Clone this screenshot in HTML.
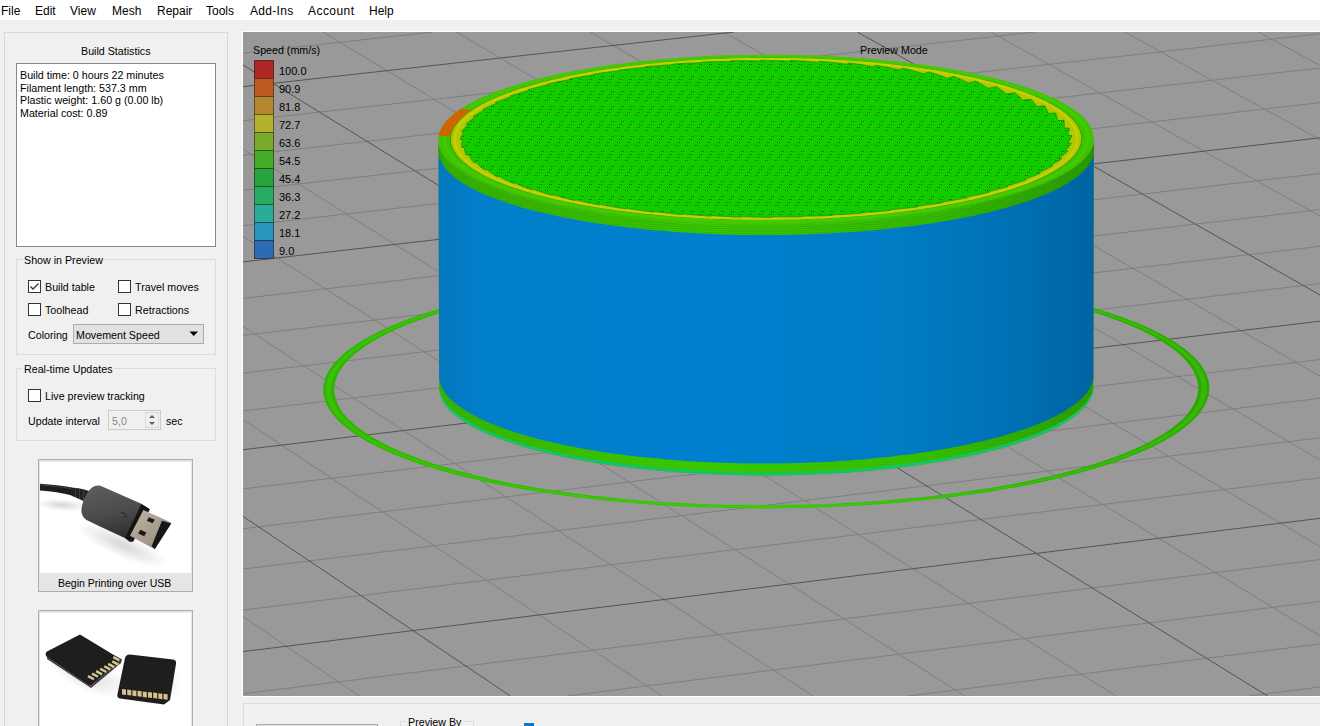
<!DOCTYPE html><html><head><meta charset="utf-8"><style>
*{margin:0;padding:0;box-sizing:border-box}
body{width:1320px;height:726px;overflow:hidden;background:#f0f0f0;position:relative;font-family:"Liberation Sans",sans-serif;color:#000}
.t{position:absolute;white-space:pre;font-size:10.7px;line-height:13px}
.m{position:absolute;top:4px;font-size:12px;line-height:14px;white-space:pre}
.bx{position:absolute}
.cb{position:absolute;width:13px;height:13px;border:1px solid #333;background:#fff}
.sw{position:absolute;left:254px;width:20px;height:19px;border:1px solid rgba(30,25,20,.6);opacity:.92}
.lv{left:279px;font-size:11px}
</style></head><body>
<div class="bx" style="left:0;top:0;width:1320px;height:20px;background:#fff"></div>
<div class="m" style="left:1px">File</div><div class="m" style="left:35px">Edit</div><div class="m" style="left:70px">View</div>
<div class="m" style="left:112px">Mesh</div><div class="m" style="left:157px">Repair</div><div class="m" style="left:206px">Tools</div>
<div class="m" style="left:250px;letter-spacing:.3px">Add-Ins</div><div class="m" style="left:308px;letter-spacing:.45px">Account</div><div class="m" style="left:369px">Help</div>
<div class="bx" style="left:4px;top:32px;width:224px;height:700px;border:1px solid #d9d9d9"></div>
<div class="t" style="left:81px;top:45px">Build Statistics</div>
<div class="bx" style="left:16px;top:63px;width:200px;height:184px;border:1px solid #828790;background:#fff"></div>
<div class="t" style="left:20px;top:69px">Build time: 0 hours 22 minutes</div>
<div class="t" style="left:20px;top:81.7px">Filament length: 537.3 mm</div>
<div class="t" style="left:20px;top:94.4px">Plastic weight: 1.60 g (0.00 lb)</div>
<div class="t" style="left:20px;top:107.1px">Material cost: 0.89</div>
<div class="bx" style="left:16px;top:259px;width:200px;height:96px;border:1px solid #dcdcdc"></div>
<div class="t" style="left:23px;top:254px;background:#f0f0f0;padding:0 1px">Show in Preview</div>
<div class="cb" style="left:28px;top:280px"></div>
<svg class="bx" style="left:28px;top:280px" width="13" height="13"><path d="M2.5 6.5 L5 9 L10.5 3.5" stroke="#333" stroke-width="1.3" fill="none"/></svg>
<div class="t" style="left:45px;top:281px">Build table</div>
<div class="cb" style="left:118px;top:280px"></div><div class="t" style="left:135px;top:281px">Travel moves</div>
<div class="cb" style="left:28px;top:303px"></div><div class="t" style="left:45px;top:304px">Toolhead</div>
<div class="cb" style="left:118px;top:303px"></div><div class="t" style="left:135px;top:304px">Retractions</div>
<div class="t" style="left:28px;top:329px">Coloring</div>
<div class="bx" style="left:73px;top:324px;width:131px;height:20px;background:#e1e1e1;border:1px solid #adadad"></div>
<div class="t" style="left:76px;top:329px">Movement Speed</div>
<svg class="bx" style="left:189px;top:331px" width="10" height="6"><path d="M0.5 0.5 L9 0.5 L4.75 5Z" fill="#000"/></svg>
<div class="bx" style="left:16px;top:368px;width:200px;height:73px;border:1px solid #dcdcdc"></div>
<div class="t" style="left:23px;top:363px;background:#f0f0f0;padding:0 1px">Real-time Updates</div>
<div class="cb" style="left:28px;top:389px"></div><div class="t" style="left:45px;top:390px">Live preview tracking</div>
<div class="t" style="left:28px;top:415px">Update interval</div>
<div class="bx" style="left:108px;top:410px;width:53px;height:20px;border:1px solid #cccccc;background:#f0f0f0"></div>
<div class="t" style="left:112px;top:415px;color:#8a8a8a">5,0</div>
<div class="bx" style="left:145px;top:412px;width:14px;height:16px;border:1px solid #dadada"></div>
<svg class="bx" style="left:147px;top:413px" width="10" height="14"><path d="M2 5 L5 2 L8 5Z M2 9 L5 12 L8 9Z" fill="#606060"/></svg>
<div class="t" style="left:166px;top:415px">sec</div>
<div class="bx" style="left:38px;top:459px;width:155px;height:133px;border:1px solid #adadad;background:#e5e5e5"></div>
<svg class="bx" style="left:40px;top:462px" width="151" height="111" viewBox="40 462 151 111"><defs><radialGradient id="sh" cx=".5" cy=".5" r=".5"><stop offset="0" stop-color="#000" stop-opacity=".16"/><stop offset="1" stop-color="#000" stop-opacity="0"/></radialGradient><linearGradient id="body" x1="0" y1="0" x2=".25" y2="1"><stop offset="0" stop-color="#5e5e5e"/><stop offset=".55" stop-color="#4c4c4c"/><stop offset="1" stop-color="#2e2e2e"/></linearGradient><linearGradient id="metal" x1="0" y1="0" x2="1" y2="1"><stop offset="0" stop-color="#c0b4a4"/><stop offset="1" stop-color="#948878"/></linearGradient></defs><rect x="40" y="462" width="151" height="111" fill="#fff"/><ellipse cx="122" cy="545" rx="50" ry="12" fill="url(#sh)" transform="rotate(24 122 545)"/><ellipse cx="62" cy="505" rx="26" ry="6" fill="url(#sh)" transform="rotate(4 62 505)"/><path d="M40 483.7 C52 484.5 63 485.8 72 487.5 L72 495.5 C62 493 51 491 40 490.5Z" fill="#1e1e1e"/><path d="M40 485 C52 485.6 62 486.8 71 488.6" stroke="#4a4a4a" stroke-width=".8" fill="none"/><path d="M71.5 487.5 C78 488 84 489 89 491 L89 503.5 C83 501 77 498 71.5 495.8Z" fill="#222"/><path d="M75.5 488v9 M79.5 488.5v10.5 M83.5 489.5v11.5" stroke="#3e3e3e" stroke-width="1.1"/><path d="M91 488.6 C94 485.5 97 485 101 486 L141.3 503.8 L149.6 509 L133 541.5 C131 542.5 128.5 542 125.8 538.5 L100 526.5 L86.5 520 C82.5 517.5 81 513 81.5 509 C83 500 86 493 91 488.6Z" fill="url(#body)"/><path d="M141.3 504 L149.8 509.3 L133.2 541.6 L125 538.2Z" fill="#151515"/><path d="M143.4 510 L171.3 522.4 L153.7 548.7 L130 535.8Z" fill="url(#metal)"/><path d="M162 520.8 L171.3 523.4 L154.8 549.2 L151.7 546.1Z" fill="#161616"/><path d="M149 517.2 L154.8 519.8 L152.5 523.3 L146.8 520.7Z M140.3 529.8 L146.4 532.6 L144.2 536.3 L138.2 533.5Z" fill="#1a1a1a"/><path d="M117.5 511.5 l1 .4 M121 512 l6 3 M123.5 516.5 c1.5 1 3 .8 4-.5" stroke="#222" stroke-width="1" fill="none"/></svg>
<div class="t" style="left:58px;top:577px;font-size:10.5px">Begin Printing over USB</div>
<div class="bx" style="left:38px;top:610px;width:155px;height:130px;border:1px solid #adadad;background:#e5e5e5"></div>
<svg class="bx" style="left:40px;top:613px" width="151" height="113" viewBox="40 613 151 113"><rect x="40" y="613" width="151" height="113" fill="#fff"/><defs><radialGradient id="sh2" cx=".5" cy=".5" r=".5"><stop offset="0" stop-color="#000" stop-opacity=".15"/><stop offset="1" stop-color="#000" stop-opacity="0"/></radialGradient></defs><ellipse cx="86" cy="672" rx="45" ry="18" fill="url(#sh2)" transform="rotate(28 86 672)"/><ellipse cx="148" cy="684" rx="34" ry="22" fill="url(#sh2)"/><path d="M80 634.5 L113 654.5 L122 659.5 L91 685.5 L88 685 L47 657 C45 655 45.5 652.5 47 651.5Z" fill="#1e1e1e"/><path d="M47 657 L88 685 L91 685.5 L122 659.5 L121 663 L91 688 L47 659Z" fill="#3a3a3a"/><rect x="87.6" y="676.4" width="6.8" height="2.5" fill="#d6c68e" transform="rotate(28 91.0 677.6)"/><rect x="91.6" y="673.9" width="6.8" height="2.5" fill="#d6c68e" transform="rotate(28 95.0 675.2)"/><rect x="95.7" y="671.5" width="6.8" height="2.5" fill="#d6c68e" transform="rotate(28 99.1 672.7)"/><rect x="99.8" y="669.1" width="6.8" height="2.5" fill="#d6c68e" transform="rotate(28 103.2 670.3)"/><rect x="103.8" y="666.6" width="6.8" height="2.5" fill="#d6c68e" transform="rotate(28 107.2 667.9)"/><rect x="107.8" y="664.2" width="6.8" height="2.5" fill="#d6c68e" transform="rotate(28 111.2 665.5)"/><rect x="111.9" y="661.8" width="6.8" height="2.5" fill="#d6c68e" transform="rotate(28 115.3 663.0)"/><rect x="112.9" y="657.5" width="6.8" height="2.5" fill="#d6c68e" transform="rotate(28 116.3 658.8)"/><path d="M130 654.5 L173 659.5 C175.5 660 176.5 661.5 176 664 L170 700 L164 704.5 L120 698.5 C117.5 698 117 696.5 117.5 694 L125 658 C125.8 655.5 127.5 654.2 130 654.5Z" fill="#1e1e1e"/><rect x="122.0" y="689.0" width="4" height="5.5" fill="#d3c28a" transform="skewY(7)" transform-origin="122.0 689.0"/><rect x="127.2" y="689.6" width="4" height="5.5" fill="#d3c28a" transform="skewY(7)" transform-origin="127.2 689.6"/><rect x="132.4" y="690.2" width="4" height="5.5" fill="#d3c28a" transform="skewY(7)" transform-origin="132.4 690.2"/><rect x="137.6" y="690.8" width="4" height="5.5" fill="#d3c28a" transform="skewY(7)" transform-origin="137.6 690.8"/><rect x="142.8" y="691.4" width="4" height="5.5" fill="#d3c28a" transform="skewY(7)" transform-origin="142.8 691.4"/><rect x="148.0" y="692.0" width="4" height="5.5" fill="#d3c28a" transform="skewY(7)" transform-origin="148.0 692.0"/><rect x="153.2" y="692.6" width="4" height="5.5" fill="#d3c28a" transform="skewY(7)" transform-origin="153.2 692.6"/><rect x="158.4" y="693.2" width="4" height="5.5" fill="#d3c28a" transform="skewY(7)" transform-origin="158.4 693.2"/><rect x="163.6" y="693.8" width="4" height="5.5" fill="#d3c28a" transform="skewY(7)" transform-origin="163.6 693.8"/></svg>
<div class="bx" style="left:242px;top:31px;width:1078px;height:666px;background:#fff"></div><svg width="1077" height="664" viewBox="243 32 1077 664" style="position:absolute;left:243px;top:32px">
<defs><pattern id="dots" x="0" y="0" width="10" height="15" patternUnits="userSpaceOnUse"><rect x="1" y="1" width="1" height="1" fill="#0a5800" opacity=".8"/><rect x="3" y="1" width="1" height="1" fill="#0a5800" opacity=".8"/><rect x="9" y="4" width="1" height="1" fill="#0a5800" opacity=".8"/><rect x="1" y="4" width="1" height="1" fill="#0a5800" opacity=".8"/><rect x="7" y="7" width="1" height="1" fill="#0a5800" opacity=".8"/><rect x="9" y="7" width="1" height="1" fill="#0a5800" opacity=".8"/><rect x="5" y="10" width="1" height="1" fill="#0a5800" opacity=".8"/><rect x="7" y="10" width="1" height="1" fill="#0a5800" opacity=".8"/></pattern>
<pattern id="layers" x="0" y="0" width="4" height="2" patternUnits="userSpaceOnUse"><rect x="0" y="0" width="4" height="1" fill="#000" opacity=".035"/></pattern>
<linearGradient id="blue" gradientUnits="userSpaceOnUse" x1="439" x2="1094" y1="0" y2="0"><stop offset="0" stop-color="#0479c0"/><stop offset=".06" stop-color="#0281cc"/><stop offset=".4" stop-color="#0083d3"/><stop offset=".7" stop-color="#007ec8"/><stop offset=".88" stop-color="#0072b6"/><stop offset="1" stop-color="#0066a4"/></linearGradient>
<linearGradient id="gwall" gradientUnits="userSpaceOnUse" x1="439" x2="1094" y1="0" y2="0"><stop offset="0" stop-color="#38b400"/><stop offset=".4" stop-color="#3acc00"/><stop offset=".75" stop-color="#36c000"/><stop offset="1" stop-color="#2c9e00"/></linearGradient>
<linearGradient id="gskirt" gradientUnits="userSpaceOnUse" x1="324" x2="1209" y1="0" y2="0"><stop offset="0" stop-color="#2fb400"/><stop offset=".5" stop-color="#33c800"/><stop offset="1" stop-color="#2aa800"/></linearGradient>
</defs>
<rect x="243" y="32" width="1077" height="664" fill="#999999"/>
<path d="M243 53L433.1 32 M243 120.7L1034.9 32 M243 155.3L1320 33.8 M243 190.3L1320 68 M243 225.8L1320 102.7 M243 298.4L1320 173.5 M243 335.4L1320 209.6 M243 373L1320 246.3 M243 411L1320 283.5 M243 488.9L1320 359.5 M243 528.7L1320 398.3 M243 569L1320 437.8 M243 616.6L359.1 696 M243 610L1320 477.8 M243 419.8L661.9 696 M243 693.8L1320 559.6 M243 326.5L813.3 696 M566.5 696L1320 601.4 M243 236.3L964.8 696 M907.9 696L1320 643.9 M243 149.2L1116.2 696 M1249.3 696L1320 687 M323 32L1320 636 M456.6 32L1320 546.6 M590.2 32L1320 460.1 M723.8 32L1320 376.3 M991.1 32L1320 216.2 M1124.8 32L1320 139.7 M1258.5 32L1320 65.5" stroke="#7f7f7f" stroke-width="1" fill="none"/>
<path d="M243 86.7L734 32 M243 261.9L1320 137.8 M243 449.7L1320 321.2 M243 516.4L510.5 696 M243 651.6L1320 518.3 M243 65L1267.7 696 M857.5 32L1320 295" stroke="#545454" stroke-width="1" fill="none"/>
<g transform="translate(0,-1)"><path d="M1168.6 339.3 L1171.8 341.2 L1174.8 343.1 L1177.7 345 L1180.5 346.9 L1183.2 348.8 L1185.7 350.8 L1188.1 352.8 L1190.4 354.7 L1192.6 356.7 L1194.6 358.7 L1196.5 360.7 L1198.3 362.8 L1200 364.8 L1201.5 366.8 L1202.9 368.9 L1204.1 370.9 L1205.2 373 L1206.2 375.1 L1207 377.1 L1207.8 379.2 L1208.3 381.3 L1208.8 383.4 L1209.1 385.5 L1209.3 387.6 L1209.3 389.6 L1209.2 391.7 L1209 393.8 L1208.6 395.9 L1208.1 398 L1207.5 400.1 L1206.7 402.2 L1205.8 404.3 L1204.7 406.3 L1203.6 408.4 L1202.2 410.5 L1200.8 412.6 L1199.2 414.6 L1197.5 416.7 L1195.6 418.7 L1193.6 420.7 L1191.5 422.8 L1189.2 424.8 L1186.8 426.8 L1184.3 428.8 L1181.7 430.8 L1178.9 432.8 L1176 434.7 L1172.9 436.7 L1169.8 438.6 L1166.5 440.5 L1163 442.4 L1159.5 444.3 L1155.8 446.2 L1152 448 L1148.1 449.9 L1144.1 451.7 L1139.9 453.5 L1135.6 455.3 L1131.2 457 L1126.7 458.8 L1122.1 460.5 L1117.4 462.2 L1112.5 463.9 L1107.6 465.5 L1102.5 467.2 L1097.3 468.8 L1092 470.3 L1086.6 471.9 L1081.2 473.4 L1075.6 474.9 L1069.9 476.4 L1064.1 477.9 L1058.2 479.3 L1052.2 480.7 L1046.1 482.1 L1040 483.4 L1033.7 484.7 L1027.4 486 L1021 487.2 L1014.5 488.5 L1007.9 489.6 L1001.2 490.8 L994.5 491.9 L987.7 493 L980.8 494.1 L973.8 495.1 L966.8 496.1 L959.7 497.1 L952.6 498 L945.4 498.9 L938.1 499.7 L930.8 500.6 L923.4 501.3 L916 502.1 L908.5 502.8 L901 503.5 L893.4 504.1 L885.8 504.7 L878.1 505.3 L870.5 505.8 L862.7 506.3 L855 506.8 L847.2 507.2 L839.4 507.6 L831.6 508 L823.7 508.3 L815.9 508.5 L808 508.8 L800.1 509 L792.2 509.1 L784.2 509.2 L776.3 509.3 L768.4 509.4 L760.5 509.4 L752.5 509.3 L744.6 509.3 L736.7 509.2 L728.8 509 L720.9 508.8 L713 508.6 L705.2 508.3 L697.3 508 L689.5 507.7 L681.7 507.3 L673.9 506.9 L666.2 506.4 L658.5 506 L650.8 505.4 L643.2 504.9 L635.6 504.3 L628.1 503.6 L620.5 503 L613.1 502.3 L605.7 501.5 L598.3 500.7 L591 499.9 L583.8 499.1 L576.6 498.2 L569.5 497.3 L562.4 496.3 L555.4 495.3 L548.5 494.3 L541.7 493.3 L534.9 492.2 L528.2 491.1 L521.6 489.9 L515 488.7 L508.6 487.5 L502.2 486.3 L495.9 485 L489.7 483.7 L483.6 482.4 L477.5 481 L471.6 479.6 L465.7 478.2 L460 476.7 L454.4 475.3 L448.8 473.8 L443.4 472.2 L438 470.7 L432.8 469.1 L427.7 467.5 L422.6 465.9 L417.7 464.2 L412.9 462.6 L408.3 460.9 L403.7 459.2 L399.2 457.4 L394.9 455.7 L390.7 453.9 L386.6 452.1 L382.6 450.3 L378.7 448.5 L375 446.6 L371.4 444.7 L367.9 442.9 L364.5 441 L361.3 439 L358.2 437.1 L355.2 435.2 L352.3 433.2 L349.6 431.2 L347 429.2 L344.6 427.3 L342.2 425.2 L340 423.2 L338 421.2 L336 419.2 L334.3 417.1 L332.6 415.1 L331.1 413 L329.7 411 L328.4 408.9 L327.3 406.8 L326.3 404.7 L325.5 402.7 L324.8 400.6 L324.2 398.5 L323.7 396.4 L323.4 394.3 L323.3 392.2 L323.2 390.1 L323.3 388 L323.6 385.9 L324 383.9 L324.5 381.8 L325.1 379.7 L325.9 377.6 L326.8 375.5 L327.8 373.5 L329 371.4 L330.3 369.4 L331.8 367.3 L333.4 365.3 L335.1 363.2 L336.9 361.2 L338.9 359.2 L341 357.2 L343.2 355.2 L345.5 353.2 L348 351.3 L350.6 349.3 L353.3 347.4 L356.2 345.4 L359.2 343.5 L362.2 341.6 L365.5 339.7 L368.8 337.9 L372.2 336 L375.8 334.2 L379.5 332.3 L383.3 330.5 L387.2 328.8 L391.2 327 L395.4 325.2 L399.6 323.5 L404 321.8 L408.4 320.1 L413 318.5 L417.7 316.8 L422.4 315.2 L427.3 313.6 L432.3 312 L437.3 310.5 L442.5 309 L447.8 307.5 L453.1 306 L458.6 304.5 L464.1 303.1 L469.7 301.7 L475.4 300.3 L481.2 299 L487.1 297.7 L493.1 296.4 L499.1 295.1 L505.2 293.9 L511.4 292.7 L517.7 291.5 L524 290.4 L530.4 289.2 L536.9 288.2 L543.4 287.1 L550 286.1 L556.7 285.1 L563.4 284.1 L570.2 283.2 L577.1 282.3 L584 281.4 L590.9 280.6 L597.9 279.8 L605 279 L612.1 278.2 L619.2 277.5 L626.4 276.9 L633.6 276.2 L640.9 275.6 L648.2 275 L655.5 274.5 L662.9 274 L670.3 273.5 L677.7 273.1 L685.1 272.7 L692.6 272.3 L700.1 272 L707.6 271.7 L715.1 271.4 L722.7 271.2 L730.2 271 L737.8 270.8 L745.3 270.7 L752.9 270.6 L760.5 270.5 L768.1 270.5 L775.7 270.5 L783.3 270.6 L790.8 270.7 L798.4 270.8 L805.9 270.9 L813.5 271.1 L821 271.3 L828.5 271.6 L836 271.9 L843.5 272.2 L851 272.6 L858.4 273 L865.8 273.4 L873.2 273.9 L880.5 274.4 L887.9 274.9 L895.1 275.5 L902.4 276.1 L909.6 276.7 L916.8 277.4 L923.9 278.1 L930.9 278.8 L938 279.6 L945 280.4 L951.9 281.2 L958.7 282.1 L965.6 283 L972.3 283.9 L979 284.8 L985.7 285.8 L992.2 286.8 L998.7 287.9 L1005.2 289 L1011.6 290.1 L1017.9 291.2 L1024.1 292.4 L1030.3 293.6 L1036.3 294.8 L1042.3 296.1 L1048.3 297.4 L1054.1 298.7 L1059.8 300 L1065.5 301.4 L1071.1 302.8 L1076.6 304.2 L1082 305.6 L1087.3 307.1 L1092.5 308.6 L1097.6 310.1 L1102.7 311.7 L1107.6 313.2 L1112.4 314.8 L1117.1 316.4 L1121.7 318.1 L1126.3 319.7 L1130.7 321.4 L1135 323.1 L1139.2 324.8 L1143.2 326.6 L1147.2 328.3 L1151.1 330.1 L1154.8 331.9 L1158.4 333.7 L1162 335.6 L1165.4 337.4 L1168.6 339.3Z M1158.6 340.5 L1155.4 338.7 L1152.1 336.8 L1148.7 335.1 L1145.2 333.3 L1141.5 331.5 L1137.8 329.8 L1133.9 328.1 L1129.9 326.4 L1125.8 324.7 L1121.6 323 L1117.3 321.4 L1112.9 319.8 L1108.4 318.2 L1103.8 316.6 L1099.1 315.1 L1094.3 313.5 L1089.4 312 L1084.4 310.5 L1079.4 309.1 L1074.2 307.7 L1068.9 306.2 L1063.6 304.9 L1058.1 303.5 L1052.6 302.2 L1047 300.9 L1041.3 299.6 L1035.5 298.3 L1029.7 297.1 L1023.7 295.9 L1017.7 294.7 L1011.7 293.6 L1005.5 292.5 L999.3 291.4 L993 290.3 L986.7 289.3 L980.3 288.3 L973.8 287.4 L967.3 286.4 L960.7 285.5 L954 284.6 L947.3 283.8 L940.6 283 L933.7 282.2 L926.9 281.5 L920 280.8 L913.1 280.1 L906.1 279.4 L899 278.8 L892 278.2 L884.9 277.7 L877.7 277.1 L870.6 276.7 L863.4 276.2 L856.2 275.8 L848.9 275.4 L841.6 275 L834.3 274.7 L827 274.4 L819.7 274.2 L812.3 274 L805 273.8 L797.6 273.6 L790.2 273.5 L782.8 273.4 L775.4 273.4 L768 273.4 L760.6 273.4 L753.3 273.5 L745.9 273.6 L738.5 273.7 L731.1 273.8 L723.7 274 L716.4 274.3 L709 274.5 L701.7 274.8 L694.4 275.1 L687.1 275.5 L679.9 275.9 L672.6 276.3 L665.4 276.8 L658.2 277.3 L651.1 277.8 L644 278.4 L636.9 279 L629.8 279.6 L622.8 280.2 L615.9 280.9 L608.9 281.6 L602.1 282.4 L595.2 283.2 L588.5 284 L581.7 284.9 L575.1 285.7 L568.4 286.6 L561.9 287.6 L555.4 288.6 L548.9 289.6 L542.6 290.6 L536.2 291.7 L530 292.7 L523.8 293.9 L517.7 295 L511.7 296.2 L505.7 297.4 L499.8 298.6 L494 299.9 L488.3 301.2 L482.6 302.5 L477.1 303.8 L471.6 305.2 L466.2 306.6 L460.9 308 L455.7 309.4 L450.5 310.9 L445.5 312.4 L440.5 313.9 L435.7 315.4 L431 317 L426.3 318.6 L421.8 320.2 L417.3 321.8 L413 323.4 L408.7 325.1 L404.6 326.8 L400.5 328.5 L396.6 330.2 L392.8 331.9 L389.1 333.7 L385.5 335.5 L382 337.3 L378.7 339.1 L375.4 340.9 L372.3 342.7 L369.3 344.6 L366.4 346.5 L363.6 348.4 L361 350.3 L358.4 352.2 L356 354.1 L353.7 356 L351.6 358 L349.5 359.9 L347.6 361.9 L345.8 363.8 L344.2 365.8 L342.7 367.8 L341.2 369.8 L340 371.8 L338.8 373.8 L337.8 375.8 L336.9 377.9 L336.2 379.9 L335.5 381.9 L335.1 383.9 L334.7 386 L334.5 388 L334.4 390.1 L334.4 392.1 L334.6 394.1 L334.9 396.2 L335.3 398.2 L335.9 400.2 L336.6 402.3 L337.4 404.3 L338.4 406.3 L339.5 408.4 L340.7 410.4 L342 412.4 L343.5 414.4 L345.2 416.4 L346.9 418.4 L348.8 420.4 L350.8 422.3 L353 424.3 L355.2 426.2 L357.6 428.2 L360.2 430.1 L362.8 432 L365.6 433.9 L368.5 435.8 L371.5 437.7 L374.7 439.6 L378 441.4 L381.4 443.3 L384.9 445.1 L388.6 446.9 L392.3 448.7 L396.2 450.5 L400.2 452.2 L404.3 453.9 L408.6 455.6 L412.9 457.3 L417.4 459 L421.9 460.7 L426.6 462.3 L431.4 463.9 L436.3 465.5 L441.3 467 L446.4 468.6 L451.6 470.1 L456.9 471.6 L462.3 473 L467.8 474.5 L473.4 475.9 L479.1 477.3 L484.9 478.6 L490.8 479.9 L496.7 481.2 L502.8 482.5 L508.9 483.7 L515.1 484.9 L521.4 486.1 L527.8 487.3 L534.3 488.4 L540.8 489.5 L547.4 490.5 L554.1 491.6 L560.8 492.6 L567.7 493.5 L574.5 494.5 L581.5 495.3 L588.5 496.2 L595.5 497 L602.6 497.8 L609.8 498.6 L617 499.3 L624.3 500 L631.6 500.7 L639 501.3 L646.3 501.9 L653.8 502.4 L661.3 502.9 L668.8 503.4 L676.3 503.8 L683.9 504.2 L691.5 504.6 L699.1 504.9 L706.7 505.2 L714.4 505.5 L722.1 505.7 L729.7 505.9 L737.5 506 L745.2 506.1 L752.9 506.2 L760.6 506.2 L768.3 506.2 L776.1 506.2 L783.8 506.1 L791.5 506 L799.2 505.8 L806.9 505.6 L814.6 505.4 L822.3 505.2 L829.9 504.9 L837.5 504.5 L845.1 504.1 L852.7 503.7 L860.3 503.3 L867.8 502.8 L875.3 502.3 L882.7 501.7 L890.1 501.1 L897.5 500.5 L904.9 499.8 L912.1 499.2 L919.4 498.4 L926.6 497.7 L933.7 496.9 L940.8 496 L947.8 495.1 L954.8 494.2 L961.7 493.3 L968.5 492.3 L975.3 491.3 L982 490.3 L988.6 489.2 L995.2 488.2 L1001.7 487 L1008.1 485.9 L1014.5 484.7 L1020.7 483.5 L1026.9 482.2 L1033 480.9 L1039 479.6 L1044.9 478.3 L1050.7 476.9 L1056.5 475.6 L1062.1 474.1 L1067.7 472.7 L1073.1 471.2 L1078.5 469.7 L1083.7 468.2 L1088.9 466.7 L1093.9 465.1 L1098.9 463.5 L1103.7 461.9 L1108.4 460.3 L1113.1 458.6 L1117.6 457 L1122 455.3 L1126.3 453.5 L1130.4 451.8 L1134.5 450.1 L1138.4 448.3 L1142.2 446.5 L1145.9 444.7 L1149.5 442.9 L1153 441 L1156.3 439.2 L1159.5 437.3 L1162.6 435.4 L1165.6 433.5 L1168.4 431.6 L1171.2 429.7 L1173.7 427.7 L1176.2 425.8 L1178.5 423.8 L1180.7 421.9 L1182.8 419.9 L1184.8 417.9 L1186.6 415.9 L1188.3 413.9 L1189.8 411.9 L1191.2 409.9 L1192.5 407.9 L1193.7 405.9 L1194.7 403.8 L1195.6 401.8 L1196.4 399.8 L1197 397.7 L1197.5 395.7 L1197.9 393.7 L1198.1 391.6 L1198.2 389.6 L1198.2 387.5 L1198 385.5 L1197.7 383.5 L1197.3 381.4 L1196.7 379.4 L1196 377.4 L1195.2 375.4 L1194.2 373.4 L1193.1 371.3 L1191.9 369.3 L1190.6 367.4 L1189.1 365.4 L1187.5 363.4 L1185.8 361.4 L1183.9 359.5 L1182 357.5 L1179.8 355.6 L1177.6 353.6 L1175.3 351.7 L1172.8 349.8 L1170.2 347.9 L1167.5 346 L1164.6 344.2 L1161.7 342.3 L1158.6 340.5Z" fill="url(#gskirt)" fill-rule="evenodd"/>
<path d="M1166.3 339.6 L1169.4 341.4 L1172.4 343.3 L1175.3 345.2 L1178.1 347.1 L1180.7 349.1 L1183.3 351 L1185.7 353 L1187.9 354.9 L1190.1 356.9 L1192.1 358.9 L1194 360.9 L1195.8 362.9 L1197.4 364.9 L1198.9 367 L1200.3 369 L1201.5 371 L1202.6 373.1 L1203.6 375.1 L1204.4 377.2 L1205.2 379.3 L1205.7 381.3 L1206.2 383.4 L1206.5 385.5 L1206.7 387.6 L1206.7 389.6 L1206.6 391.7 L1206.4 393.8 L1206 395.9 L1205.5 397.9 L1204.9 400 L1204.1 402.1 L1203.2 404.2 L1202.1 406.2 L1201 408.3 L1199.6 410.3 L1198.2 412.4 L1196.6 414.4 L1194.9 416.5 L1193.1 418.5 L1191.1 420.5 L1189 422.6 L1186.7 424.6 L1184.3 426.6 L1181.8 428.5 L1179.2 430.5 L1176.4 432.5 L1173.5 434.4 L1170.5 436.4 L1167.4 438.3 L1164.1 440.2 L1160.7 442.1 L1157.2 444 L1153.5 445.8 L1149.7 447.7 L1145.8 449.5 L1141.8 451.3 L1137.7 453.1 L1133.4 454.9 L1129.1 456.6 L1124.6 458.4 L1120 460.1 L1115.3 461.7 L1110.4 463.4 L1105.5 465.1 L1100.5 466.7 L1095.3 468.3 L1090.1 469.8 L1084.7 471.4 L1079.3 472.9 L1073.7 474.4 L1068 475.9 L1062.3 477.3 L1056.4 478.7 L1050.5 480.1 L1044.5 481.5 L1038.3 482.8 L1032.1 484.1 L1025.8 485.4 L1019.4 486.6 L1013 487.8 L1006.4 489 L999.8 490.2 L993.1 491.3 L986.3 492.4 L979.5 493.4 L972.6 494.5 L965.6 495.4 L958.6 496.4 L951.5 497.3 L944.3 498.2 L937.1 499.1 L929.8 499.9 L922.5 500.7 L915.1 501.4 L907.6 502.1 L900.2 502.8 L892.6 503.4 L885.1 504 L877.5 504.6 L869.8 505.1 L862.2 505.6 L854.5 506.1 L846.7 506.5 L839 506.9 L831.2 507.2 L823.4 507.5 L815.6 507.8 L807.7 508 L799.9 508.2 L792 508.4 L784.1 508.5 L776.3 508.6 L768.4 508.6 L760.5 508.6 L752.6 508.6 L744.7 508.5 L736.9 508.4 L729 508.3 L721.2 508.1 L713.3 507.9 L705.5 507.6 L697.7 507.3 L690 507 L682.2 506.6 L674.5 506.2 L666.8 505.7 L659.1 505.2 L651.5 504.7 L643.9 504.2 L636.4 503.6 L628.9 502.9 L621.4 502.3 L614 501.6 L606.7 500.8 L599.3 500.1 L592.1 499.2 L584.9 498.4 L577.8 497.5 L570.7 496.6 L563.7 495.7 L556.7 494.7 L549.8 493.7 L543 492.6 L536.3 491.5 L529.6 490.4 L523 489.3 L516.5 488.1 L510.1 486.9 L503.8 485.7 L497.5 484.4 L491.3 483.1 L485.3 481.8 L479.3 480.4 L473.4 479.1 L467.6 477.6 L461.8 476.2 L456.2 474.7 L450.7 473.3 L445.3 471.7 L440 470.2 L434.8 468.6 L429.7 467 L424.7 465.4 L419.8 463.8 L415.1 462.1 L410.4 460.4 L405.8 458.7 L401.4 457 L397.1 455.3 L392.9 453.5 L388.8 451.7 L384.9 449.9 L381 448.1 L377.3 446.3 L373.7 444.4 L370.3 442.5 L366.9 440.6 L363.7 438.7 L360.6 436.8 L357.6 434.9 L354.8 432.9 L352.1 431 L349.5 429 L347.1 427 L344.8 425 L342.6 423 L340.5 421 L338.6 419 L336.8 417 L335.2 414.9 L333.6 412.9 L332.3 410.8 L331 408.8 L329.9 406.7 L328.9 404.6 L328.1 402.6 L327.4 400.5 L326.8 398.4 L326.4 396.3 L326.1 394.3 L325.9 392.2 L325.9 390.1 L326 388 L326.2 386 L326.6 383.9 L327.1 381.8 L327.7 379.7 L328.5 377.7 L329.4 375.6 L330.4 373.6 L331.6 371.5 L332.9 369.5 L334.3 367.4 L335.9 365.4 L337.6 363.4 L339.4 361.4 L341.4 359.4 L343.5 357.4 L345.7 355.4 L348 353.4 L350.5 351.5 L353 349.5 L355.8 347.6 L358.6 345.7 L361.5 343.8 L364.6 341.9 L367.8 340 L371.1 338.1 L374.6 336.3 L378.1 334.5 L381.8 332.7 L385.5 330.9 L389.4 329.1 L393.4 327.3 L397.5 325.6 L401.8 323.9 L406.1 322.2 L410.5 320.5 L415.1 318.9 L419.7 317.2 L424.4 315.6 L429.3 314 L434.2 312.5 L439.3 310.9 L444.4 309.4 L449.6 307.9 L454.9 306.5 L460.4 305 L465.9 303.6 L471.5 302.2 L477.1 300.8 L482.9 299.5 L488.7 298.2 L494.7 296.9 L500.7 295.7 L506.7 294.4 L512.9 293.2 L519.1 292.1 L525.4 290.9 L531.8 289.8 L538.2 288.7 L544.7 287.7 L551.3 286.7 L557.9 285.7 L564.6 284.7 L571.4 283.8 L578.2 282.9 L585 282 L591.9 281.2 L598.9 280.4 L605.9 279.6 L613 278.9 L620.1 278.2 L627.2 277.5 L634.4 276.9 L641.6 276.3 L648.9 275.7 L656.2 275.1 L663.5 274.6 L670.8 274.2 L678.2 273.7 L685.6 273.3 L693 273 L700.5 272.6 L707.9 272.3 L715.4 272.1 L722.9 271.8 L730.4 271.6 L737.9 271.5 L745.5 271.4 L753 271.3 L760.5 271.2 L768.1 271.2 L775.6 271.2 L783.2 271.3 L790.7 271.3 L798.2 271.5 L805.7 271.6 L813.2 271.8 L820.7 272 L828.2 272.3 L835.6 272.6 L843.1 272.9 L850.5 273.2 L857.9 273.6 L865.2 274.1 L872.6 274.5 L879.9 275 L887.2 275.6 L894.4 276.1 L901.6 276.7 L908.8 277.3 L915.9 278 L923 278.7 L930 279.4 L937 280.2 L943.9 281 L950.8 281.8 L957.6 282.7 L964.4 283.6 L971.1 284.5 L977.8 285.4 L984.4 286.4 L990.9 287.4 L997.4 288.5 L1003.8 289.5 L1010.1 290.6 L1016.4 291.8 L1022.6 292.9 L1028.7 294.1 L1034.8 295.4 L1040.7 296.6 L1046.6 297.9 L1052.4 299.2 L1058.1 300.5 L1063.8 301.9 L1069.3 303.3 L1074.8 304.7 L1080.1 306.1 L1085.4 307.6 L1090.6 309.1 L1095.7 310.6 L1100.7 312.1 L1105.6 313.7 L1110.4 315.2 L1115.1 316.8 L1119.7 318.5 L1124.2 320.1 L1128.5 321.8 L1132.8 323.5 L1137 325.2 L1141 326.9 L1145 328.7 L1148.8 330.4 L1152.5 332.2 L1156.2 334 L1159.6 335.9 L1163 337.7 L1166.3 339.6Z M1161.6 340.1 L1158.3 338.3 L1155 336.5 L1151.6 334.7 L1148 332.9 L1144.3 331.1 L1140.5 329.4 L1136.6 327.6 L1132.6 325.9 L1128.5 324.2 L1124.3 322.6 L1120 320.9 L1115.5 319.3 L1111 317.7 L1106.3 316.1 L1101.6 314.5 L1096.8 313 L1091.8 311.5 L1086.8 310 L1081.7 308.5 L1076.5 307.1 L1071.2 305.6 L1065.8 304.2 L1060.3 302.9 L1054.7 301.5 L1049.1 300.2 L1043.3 298.9 L1037.5 297.7 L1031.6 296.4 L1025.7 295.2 L1019.6 294 L1013.5 292.9 L1007.3 291.8 L1001 290.7 L994.7 289.6 L988.3 288.6 L981.8 287.6 L975.3 286.6 L968.7 285.7 L962.1 284.8 L955.4 283.9 L948.7 283 L941.8 282.2 L935 281.4 L928.1 280.7 L921.1 280 L914.1 279.3 L907.1 278.6 L900 278 L892.9 277.4 L885.8 276.9 L878.6 276.3 L871.3 275.8 L864.1 275.4 L856.8 275 L849.5 274.6 L842.2 274.2 L834.8 273.9 L827.5 273.6 L820.1 273.4 L812.7 273.1 L805.3 273 L797.8 272.8 L790.4 272.7 L783 272.6 L775.5 272.6 L768.1 272.5 L760.6 272.6 L753.2 272.6 L745.7 272.7 L738.3 272.8 L730.8 273 L723.4 273.2 L716 273.4 L708.6 273.7 L701.2 274 L693.9 274.3 L686.5 274.7 L679.2 275.1 L671.9 275.5 L664.7 276 L657.4 276.5 L650.2 277 L643.1 277.5 L635.9 278.1 L628.8 278.8 L621.8 279.4 L614.8 280.1 L607.8 280.9 L600.9 281.6 L594 282.4 L587.1 283.2 L580.4 284.1 L573.6 285 L567 285.9 L560.4 286.8 L553.8 287.8 L547.3 288.8 L540.9 289.9 L534.5 290.9 L528.2 292 L522 293.2 L515.9 294.3 L509.8 295.5 L503.8 296.7 L497.8 298 L492 299.2 L486.2 300.5 L480.5 301.9 L474.9 303.2 L469.4 304.6 L463.9 306 L458.6 307.4 L453.3 308.9 L448.2 310.3 L443.1 311.8 L438.1 313.4 L433.2 314.9 L428.4 316.5 L423.8 318.1 L419.2 319.7 L414.7 321.3 L410.3 323 L406 324.6 L401.9 326.3 L397.8 328 L393.9 329.8 L390 331.5 L386.3 333.3 L382.7 335.1 L379.2 336.9 L375.8 338.7 L372.5 340.6 L369.3 342.4 L366.3 344.3 L363.4 346.2 L360.6 348.1 L357.9 350 L355.4 351.9 L352.9 353.8 L350.6 355.8 L348.5 357.7 L346.4 359.7 L344.5 361.7 L342.7 363.7 L341 365.7 L339.5 367.7 L338 369.7 L336.8 371.7 L335.6 373.7 L334.6 375.8 L333.7 377.8 L332.9 379.8 L332.3 381.9 L331.8 383.9 L331.4 386 L331.2 388 L331.1 390.1 L331.1 392.1 L331.3 394.2 L331.6 396.2 L332 398.3 L332.6 400.3 L333.3 402.4 L334.1 404.4 L335.1 406.5 L336.2 408.5 L337.4 410.5 L338.8 412.6 L340.3 414.6 L342 416.6 L343.7 418.6 L345.6 420.6 L347.6 422.6 L349.8 424.6 L352.1 426.5 L354.5 428.5 L357.1 430.4 L359.7 432.4 L362.5 434.3 L365.5 436.2 L368.5 438.1 L371.7 440 L375 441.9 L378.4 443.7 L382 445.5 L385.7 447.4 L389.5 449.2 L393.4 450.9 L397.4 452.7 L401.5 454.4 L405.8 456.2 L410.2 457.9 L414.7 459.6 L419.3 461.2 L424 462.9 L428.8 464.5 L433.8 466.1 L438.8 467.6 L443.9 469.2 L449.2 470.7 L454.5 472.2 L460 473.7 L465.5 475.1 L471.2 476.6 L476.9 477.9 L482.7 479.3 L488.6 480.6 L494.7 482 L500.8 483.2 L506.9 484.5 L513.2 485.7 L519.6 486.9 L526 488.1 L532.5 489.2 L539.1 490.3 L545.7 491.3 L552.5 492.4 L559.3 493.4 L566.1 494.3 L573.1 495.3 L580 496.2 L587.1 497 L594.2 497.9 L601.4 498.7 L608.6 499.4 L615.9 500.2 L623.2 500.9 L630.6 501.5 L638 502.2 L645.4 502.7 L652.9 503.3 L660.4 503.8 L668 504.3 L675.6 504.7 L683.2 505.1 L690.9 505.5 L698.6 505.8 L706.3 506.1 L714 506.4 L721.7 506.6 L729.5 506.8 L737.2 506.9 L745 507 L752.8 507.1 L760.6 507.2 L768.3 507.1 L776.1 507.1 L783.9 507 L791.7 506.9 L799.5 506.8 L807.2 506.6 L815 506.3 L822.7 506.1 L830.4 505.8 L838.1 505.4 L845.7 505 L853.4 504.6 L861 504.2 L868.6 503.7 L876.1 503.2 L883.6 502.6 L891.1 502 L898.5 501.4 L905.9 500.7 L913.3 500 L920.6 499.3 L927.8 498.5 L935 497.7 L942.1 496.9 L949.2 496 L956.2 495.1 L963.2 494.1 L970.1 493.2 L976.9 492.1 L983.7 491.1 L990.4 490 L997 488.9 L1003.5 487.8 L1010 486.6 L1016.4 485.4 L1022.7 484.2 L1028.9 482.9 L1035 481.7 L1041.1 480.3 L1047.1 479 L1052.9 477.6 L1058.7 476.2 L1064.4 474.8 L1070 473.4 L1075.5 471.9 L1080.9 470.4 L1086.2 468.8 L1091.4 467.3 L1096.4 465.7 L1101.4 464.1 L1106.3 462.5 L1111.1 460.9 L1115.7 459.2 L1120.3 457.5 L1124.7 455.8 L1129 454.1 L1133.2 452.3 L1137.3 450.5 L1141.3 448.8 L1145.1 446.9 L1148.8 445.1 L1152.5 443.3 L1155.9 441.4 L1159.3 439.6 L1162.5 437.7 L1165.7 435.8 L1168.7 433.9 L1171.5 431.9 L1174.2 430 L1176.9 428.1 L1179.3 426.1 L1181.7 424.1 L1183.9 422.1 L1186 420.1 L1188 418.1 L1189.8 416.1 L1191.5 414.1 L1193 412.1 L1194.5 410.1 L1195.8 408 L1196.9 406 L1198 404 L1198.9 401.9 L1199.6 399.9 L1200.3 397.8 L1200.8 395.8 L1201.1 393.7 L1201.4 391.7 L1201.5 389.6 L1201.4 387.5 L1201.3 385.5 L1201 383.4 L1200.5 381.4 L1199.9 379.4 L1199.3 377.3 L1198.4 375.3 L1197.5 373.3 L1196.4 371.2 L1195.1 369.2 L1193.8 367.2 L1192.3 365.2 L1190.7 363.2 L1188.9 361.2 L1187.1 359.2 L1185.1 357.3 L1183 355.3 L1180.7 353.4 L1178.3 351.4 L1175.9 349.5 L1173.2 347.6 L1170.5 345.7 L1167.6 343.8 L1164.7 342 L1161.6 340.1Z" fill="#55dd22" fill-rule="evenodd" opacity=".28"/></g>
<path d="M438.5 139.5 L438.5 140.7 L438.6 142 L438.8 143.2 L439.1 144.4 L439.4 145.7 L439.8 146.9 L440.2 148.1 L440.8 149.4 L441.4 150.6 L442 151.8 L442.8 153 L443.6 154.3 L444.5 155.5 L445.4 156.7 L446.4 157.9 L447.5 159.1 L448.7 160.3 L449.9 161.5 L451.2 162.7 L452.6 163.9 L454 165.1 L455.5 166.2 L457.1 167.4 L458.7 168.6 L460.4 169.7 L462.2 170.9 L464 172 L465.9 173.2 L467.9 174.3 L469.9 175.4 L472 176.5 L474.2 177.7 L476.4 178.8 L478.7 179.8 L481.1 180.9 L483.5 182 L486 183.1 L488.5 184.1 L491.1 185.2 L493.8 186.2 L496.5 187.2 L499.3 188.2 L502.2 189.3 L505.1 190.2 L508 191.2 L511 192.2 L514.1 193.2 L517.2 194.1 L520.4 195 L523.7 196 L527 196.9 L530.3 197.8 L533.7 198.7 L537.2 199.5 L540.7 200.4 L544.2 201.3 L547.8 202.1 L551.5 202.9 L555.2 203.7 L558.9 204.5 L562.7 205.3 L566.6 206 L570.4 206.8 L574.4 207.5 L578.3 208.2 L582.4 208.9 L586.4 209.6 L590.5 210.3 L594.6 211 L598.8 211.6 L603 212.2 L607.3 212.8 L611.5 213.4 L615.9 214 L620.2 214.6 L624.6 215.1 L629 215.6 L633.4 216.1 L637.9 216.6 L642.4 217.1 L647 217.6 L651.5 218 L656.1 218.4 L660.7 218.8 L665.3 219.2 L670 219.6 L674.7 219.9 L679.4 220.3 L684.1 220.6 L688.8 220.9 L693.6 221.2 L698.3 221.4 L703.1 221.7 L707.9 221.9 L712.7 222.1 L717.6 222.3 L722.4 222.4 L727.2 222.6 L732.1 222.7 L737 222.8 L741.8 222.9 L746.7 223 L751.6 223.1 L756.5 223.1 L761.3 223.1 L766.2 223.1 L771.1 223.1 L776 223.1 L780.9 223 L785.8 222.9 L790.6 222.9 L795.5 222.7 L800.4 222.6 L805.2 222.5 L810.1 222.3 L814.9 222.1 L819.7 221.9 L824.5 221.7 L829.3 221.4 L834.1 221.2 L838.9 220.9 L843.6 220.6 L848.4 220.3 L853.1 220 L857.8 219.6 L862.5 219.2 L867.1 218.9 L871.7 218.5 L876.3 218 L880.9 217.6 L885.5 217.1 L890 216.7 L894.5 216.2 L899 215.7 L903.4 215.2 L907.8 214.6 L912.2 214.1 L916.6 213.5 L920.9 212.9 L925.2 212.3 L929.4 211.7 L933.6 211 L937.8 210.4 L941.9 209.7 L946 209 L950.1 208.3 L954.1 207.6 L958 206.9 L962 206.1 L965.8 205.3 L969.7 204.6 L973.5 203.8 L977.2 203 L980.9 202.2 L984.6 201.3 L988.2 200.5 L991.7 199.6 L995.2 198.7 L998.7 197.9 L1002.1 197 L1005.4 196.1 L1008.7 195.1 L1011.9 194.2 L1015.1 193.2 L1018.2 192.3 L1021.3 191.3 L1024.3 190.3 L1027.3 189.3 L1030.2 188.3 L1033 187.3 L1035.8 186.3 L1038.5 185.3 L1041.2 184.2 L1043.8 183.2 L1046.3 182.1 L1048.8 181 L1051.2 179.9 L1053.6 178.8 L1055.9 177.7 L1058.1 176.6 L1060.3 175.5 L1062.4 174.4 L1064.4 173.3 L1066.4 172.1 L1068.3 171 L1070.1 169.8 L1071.9 168.7 L1073.6 167.5 L1075.2 166.3 L1076.8 165.2 L1078.3 164 L1079.7 162.8 L1081.1 161.6 L1082.4 160.4 L1083.6 159.2 L1084.7 158 L1085.8 156.8 L1086.8 155.6 L1087.8 154.4 L1088.7 153.1 L1089.5 151.9 L1090.2 150.7 L1090.9 149.5 L1091.5 148.2 L1092 147 L1092.4 145.8 L1092.8 144.5 L1093.1 143.3 L1093.4 142.1 L1093.6 140.8 L1093.7 139.6 L1093.7 138.4 L1093.4 387.7 L1093.3 389 L1093.2 390.3 L1092.9 391.6 L1092.6 392.9 L1092.3 394.2 L1091.8 395.5 L1091.3 396.8 L1090.7 398.1 L1090.1 399.4 L1089.3 400.6 L1088.5 401.9 L1087.7 403.2 L1086.7 404.5 L1085.7 405.7 L1084.7 407 L1083.5 408.3 L1082.3 409.5 L1081 410.8 L1079.7 412 L1078.3 413.3 L1076.8 414.5 L1075.2 415.7 L1073.6 417 L1071.9 418.2 L1070.1 419.4 L1068.3 420.6 L1066.4 421.8 L1064.5 423 L1062.5 424.2 L1060.4 425.4 L1058.2 426.6 L1056 427.7 L1053.7 428.9 L1051.4 430 L1049 431.1 L1046.5 432.3 L1044 433.4 L1041.4 434.5 L1038.7 435.6 L1036 436.7 L1033.3 437.8 L1030.4 438.8 L1027.6 439.9 L1024.6 440.9 L1021.6 441.9 L1018.5 443 L1015.4 444 L1012.3 445 L1009 445.9 L1005.7 446.9 L1002.4 447.9 L999 448.8 L995.6 449.7 L992.1 450.7 L988.6 451.6 L985 452.5 L981.3 453.3 L977.7 454.2 L973.9 455 L970.1 455.9 L966.3 456.7 L962.4 457.5 L958.5 458.3 L954.6 459 L950.6 459.8 L946.5 460.5 L942.5 461.2 L938.3 461.9 L934.2 462.6 L930 463.3 L925.8 464 L921.5 464.6 L917.2 465.2 L912.8 465.8 L908.5 466.4 L904.1 467 L899.6 467.5 L895.2 468.1 L890.7 468.6 L886.2 469.1 L881.6 469.6 L877 470 L872.4 470.5 L867.8 470.9 L863.2 471.3 L858.5 471.7 L853.8 472 L849.1 472.4 L844.4 472.7 L839.6 473 L834.9 473.3 L830.1 473.6 L825.3 473.9 L820.5 474.1 L815.7 474.3 L810.9 474.5 L806 474.7 L801.2 474.8 L796.3 475 L791.5 475.1 L786.6 475.2 L781.7 475.3 L776.9 475.3 L772 475.4 L767.1 475.4 L762.2 475.4 L757.4 475.4 L752.5 475.4 L747.6 475.3 L742.7 475.2 L737.9 475.1 L733 475 L728.2 474.9 L723.3 474.7 L718.5 474.5 L713.7 474.4 L708.9 474.1 L704.1 473.9 L699.3 473.7 L694.5 473.4 L689.8 473.1 L685.1 472.8 L680.3 472.5 L675.7 472.1 L671 471.7 L666.3 471.4 L661.7 471 L657.1 470.5 L652.5 470.1 L648 469.6 L643.4 469.2 L638.9 468.7 L634.4 468.2 L630 467.6 L625.6 467.1 L621.2 466.5 L616.9 465.9 L612.5 465.3 L608.3 464.7 L604 464.1 L599.8 463.4 L595.6 462.7 L591.5 462.1 L587.4 461.4 L583.4 460.6 L579.3 459.9 L575.4 459.2 L571.4 458.4 L567.6 457.6 L563.7 456.8 L559.9 456 L556.2 455.2 L552.5 454.3 L548.8 453.5 L545.2 452.6 L541.7 451.7 L538.2 450.8 L534.7 449.9 L531.3 449 L527.9 448 L524.6 447.1 L521.4 446.1 L518.2 445.1 L515.1 444.1 L512 443.1 L509 442.1 L506 441.1 L503.1 440.1 L500.3 439 L497.5 437.9 L494.7 436.9 L492.1 435.8 L489.4 434.7 L486.9 433.6 L484.4 432.5 L482 431.3 L479.6 430.2 L477.3 429.1 L475.1 427.9 L472.9 426.8 L470.8 425.6 L468.8 424.4 L466.8 423.2 L464.9 422 L463 420.8 L461.3 419.6 L459.5 418.4 L457.9 417.2 L456.3 416 L454.8 414.7 L453.4 413.5 L452 412.3 L450.7 411 L449.4 409.7 L448.3 408.5 L447.2 407.2 L446.2 406 L445.2 404.7 L444.3 403.4 L443.5 402.1 L442.7 400.9 L442.1 399.6 L441.4 398.3 L440.9 397 L440.4 395.7 L440 394.4 L439.7 393.1 L439.5 391.8 L439.3 390.6 L439.2 389.3 L439.1 388Z" fill="url(#gwall)"/>
<path d="M439.1 384.8 L439.1 386.1 L439.2 387.4 L439.4 388.7 L439.7 390 L440 391.2 L440.4 392.5 L440.8 393.8 L441.4 395.1 L442 396.4 L442.6 397.7 L443.4 399 L444.2 400.2 L445.1 401.5 L446 402.8 L447 404 L448.1 405.3 L449.3 406.6 L450.5 407.8 L451.8 409.1 L453.2 410.3 L454.6 411.5 L456.1 412.8 L457.7 414 L459.3 415.2 L461 416.4 L462.8 417.6 L464.6 418.8 L466.5 420 L468.5 421.2 L470.5 422.4 L472.6 423.6 L474.8 424.7 L477 425.9 L479.3 427 L481.6 428.2 L484.1 429.3 L486.5 430.4 L489.1 431.5 L491.7 432.6 L494.3 433.7 L497.1 434.8 L499.8 435.8 L502.7 436.9 L505.6 437.9 L508.5 438.9 L511.6 440 L514.6 441 L517.8 442 L520.9 442.9 L524.2 443.9 L527.5 444.9 L530.8 445.8 L534.2 446.7 L537.7 447.7 L541.2 448.6 L544.7 449.4 L548.3 450.3 L551.9 451.2 L555.6 452 L559.4 452.8 L563.2 453.7 L567 454.5 L570.9 455.2 L574.8 456 L578.8 456.8 L582.8 457.5 L586.8 458.2 L590.9 458.9 L595 459.6 L599.2 460.3 L603.4 460.9 L607.7 461.6 L611.9 462.2 L616.2 462.8 L620.6 463.4 L625 464 L629.4 464.5 L633.8 465 L638.3 465.5 L642.8 466 L647.3 466.5 L651.9 467 L656.4 467.4 L661 467.9 L665.7 468.3 L670.3 468.6 L675 469 L679.7 469.4 L684.4 469.7 L689.1 470 L693.9 470.3 L698.6 470.6 L703.4 470.8 L708.2 471.1 L713 471.3 L717.8 471.5 L722.6 471.6 L727.5 471.8 L732.3 471.9 L737.2 472.1 L742 472.2 L746.9 472.2 L751.8 472.3 L756.7 472.3 L761.5 472.4 L766.4 472.4 L771.3 472.3 L776.2 472.3 L781 472.2 L785.9 472.2 L790.8 472.1 L795.6 472 L800.5 471.8 L805.3 471.7 L810.2 471.5 L815 471.3 L819.8 471.1 L824.6 470.9 L829.4 470.6 L834.2 470.3 L839 470 L843.7 469.7 L848.4 469.4 L853.2 469.1 L857.8 468.7 L862.5 468.3 L867.2 467.9 L871.8 467.5 L876.4 467 L881 466.6 L885.5 466.1 L890 465.6 L894.5 465.1 L899 464.6 L903.4 464 L907.8 463.4 L912.2 462.9 L916.6 462.3 L920.9 461.6 L925.1 461 L929.4 460.4 L933.6 459.7 L937.7 459 L941.9 458.3 L946 457.6 L950 456.9 L954 456.1 L958 455.3 L961.9 454.6 L965.8 453.8 L969.6 452.9 L973.4 452.1 L977.1 451.3 L980.8 450.4 L984.5 449.5 L988.1 448.7 L991.6 447.8 L995.1 446.8 L998.5 445.9 L1001.9 445 L1005.3 444 L1008.6 443.1 L1011.8 442.1 L1015 441.1 L1018.1 440.1 L1021.2 439.1 L1024.2 438 L1027.1 437 L1030 435.9 L1032.9 434.9 L1035.6 433.8 L1038.4 432.7 L1041 431.6 L1043.6 430.5 L1046.2 429.4 L1048.6 428.3 L1051.1 427.2 L1053.4 426 L1055.7 424.9 L1057.9 423.7 L1060.1 422.5 L1062.2 421.4 L1064.2 420.2 L1066.2 419 L1068.1 417.8 L1069.9 416.6 L1071.7 415.4 L1073.4 414.1 L1075 412.9 L1076.6 411.7 L1078.1 410.4 L1079.5 409.2 L1080.8 408 L1082.1 406.7 L1083.4 405.4 L1084.5 404.2 L1085.6 402.9 L1086.6 401.6 L1087.6 400.4 L1088.4 399.1 L1089.2 397.8 L1090 396.5 L1090.6 395.3 L1091.2 394 L1091.8 392.7 L1092.2 391.4 L1092.6 390.1 L1092.9 388.8 L1093.2 387.5 L1093.3 386.2 L1093.4 384.9 L1093.5 383.6 L1093.4 387.7 L1093.3 389 L1093.2 390.3 L1092.9 391.6 L1092.6 392.9 L1092.3 394.2 L1091.8 395.5 L1091.3 396.8 L1090.7 398.1 L1090.1 399.4 L1089.3 400.6 L1088.5 401.9 L1087.7 403.2 L1086.7 404.5 L1085.7 405.7 L1084.7 407 L1083.5 408.3 L1082.3 409.5 L1081 410.8 L1079.7 412 L1078.3 413.3 L1076.8 414.5 L1075.2 415.7 L1073.6 417 L1071.9 418.2 L1070.1 419.4 L1068.3 420.6 L1066.4 421.8 L1064.5 423 L1062.5 424.2 L1060.4 425.4 L1058.2 426.6 L1056 427.7 L1053.7 428.9 L1051.4 430 L1049 431.1 L1046.5 432.3 L1044 433.4 L1041.4 434.5 L1038.7 435.6 L1036 436.7 L1033.3 437.8 L1030.4 438.8 L1027.6 439.9 L1024.6 440.9 L1021.6 441.9 L1018.5 443 L1015.4 444 L1012.3 445 L1009 445.9 L1005.7 446.9 L1002.4 447.9 L999 448.8 L995.6 449.7 L992.1 450.7 L988.6 451.6 L985 452.5 L981.3 453.3 L977.7 454.2 L973.9 455 L970.1 455.9 L966.3 456.7 L962.4 457.5 L958.5 458.3 L954.6 459 L950.6 459.8 L946.5 460.5 L942.5 461.2 L938.3 461.9 L934.2 462.6 L930 463.3 L925.8 464 L921.5 464.6 L917.2 465.2 L912.8 465.8 L908.5 466.4 L904.1 467 L899.6 467.5 L895.2 468.1 L890.7 468.6 L886.2 469.1 L881.6 469.6 L877 470 L872.4 470.5 L867.8 470.9 L863.2 471.3 L858.5 471.7 L853.8 472 L849.1 472.4 L844.4 472.7 L839.6 473 L834.9 473.3 L830.1 473.6 L825.3 473.9 L820.5 474.1 L815.7 474.3 L810.9 474.5 L806 474.7 L801.2 474.8 L796.3 475 L791.5 475.1 L786.6 475.2 L781.7 475.3 L776.9 475.3 L772 475.4 L767.1 475.4 L762.2 475.4 L757.4 475.4 L752.5 475.4 L747.6 475.3 L742.7 475.2 L737.9 475.1 L733 475 L728.2 474.9 L723.3 474.7 L718.5 474.5 L713.7 474.4 L708.9 474.1 L704.1 473.9 L699.3 473.7 L694.5 473.4 L689.8 473.1 L685.1 472.8 L680.3 472.5 L675.7 472.1 L671 471.7 L666.3 471.4 L661.7 471 L657.1 470.5 L652.5 470.1 L648 469.6 L643.4 469.2 L638.9 468.7 L634.4 468.2 L630 467.6 L625.6 467.1 L621.2 466.5 L616.9 465.9 L612.5 465.3 L608.3 464.7 L604 464.1 L599.8 463.4 L595.6 462.7 L591.5 462.1 L587.4 461.4 L583.4 460.6 L579.3 459.9 L575.4 459.2 L571.4 458.4 L567.6 457.6 L563.7 456.8 L559.9 456 L556.2 455.2 L552.5 454.3 L548.8 453.5 L545.2 452.6 L541.7 451.7 L538.2 450.8 L534.7 449.9 L531.3 449 L527.9 448 L524.6 447.1 L521.4 446.1 L518.2 445.1 L515.1 444.1 L512 443.1 L509 442.1 L506 441.1 L503.1 440.1 L500.3 439 L497.5 437.9 L494.7 436.9 L492.1 435.8 L489.4 434.7 L486.9 433.6 L484.4 432.5 L482 431.3 L479.6 430.2 L477.3 429.1 L475.1 427.9 L472.9 426.8 L470.8 425.6 L468.8 424.4 L466.8 423.2 L464.9 422 L463 420.8 L461.3 419.6 L459.5 418.4 L457.9 417.2 L456.3 416 L454.8 414.7 L453.4 413.5 L452 412.3 L450.7 411 L449.4 409.7 L448.3 408.5 L447.2 407.2 L446.2 406 L445.2 404.7 L444.3 403.4 L443.5 402.1 L442.7 400.9 L442.1 399.6 L441.4 398.3 L440.9 397 L440.4 395.7 L440 394.4 L439.7 393.1 L439.5 391.8 L439.3 390.6 L439.2 389.3 L439.1 388Z" fill="#14c868"/>
<path d="M438.5 151.3 L438.6 152.5 L438.7 153.7 L438.8 155 L439.1 156.2 L439.4 157.4 L439.8 158.7 L440.3 159.9 L440.8 161.1 L441.4 162.4 L442.1 163.6 L442.8 164.8 L443.6 166 L444.5 167.3 L445.4 168.5 L446.5 169.7 L447.5 170.9 L448.7 172.1 L449.9 173.3 L451.2 174.5 L452.6 175.7 L454 176.9 L455.5 178.1 L457.1 179.2 L458.7 180.4 L460.4 181.6 L462.2 182.7 L464.1 183.9 L466 185 L467.9 186.1 L470 187.3 L472.1 188.4 L474.2 189.5 L476.5 190.6 L478.8 191.7 L481.1 192.8 L483.5 193.9 L486 194.9 L488.6 196 L491.2 197 L493.8 198.1 L496.6 199.1 L499.3 200.1 L502.2 201.1 L505.1 202.1 L508 203.1 L511.1 204.1 L514.1 205 L517.3 206 L520.5 206.9 L523.7 207.9 L527 208.8 L530.3 209.7 L533.7 210.6 L537.2 211.4 L540.7 212.3 L544.3 213.1 L547.9 214 L551.5 214.8 L555.2 215.6 L559 216.4 L562.7 217.2 L566.6 217.9 L570.5 218.7 L574.4 219.4 L578.4 220.2 L582.4 220.9 L586.4 221.5 L590.5 222.2 L594.7 222.9 L598.8 223.5 L603 224.1 L607.3 224.8 L611.6 225.3 L615.9 225.9 L620.2 226.5 L624.6 227 L629 227.6 L633.5 228.1 L637.9 228.6 L642.4 229 L647 229.5 L651.5 229.9 L656.1 230.4 L660.7 230.8 L665.4 231.1 L670 231.5 L674.7 231.9 L679.4 232.2 L684.1 232.5 L688.8 232.8 L693.6 233.1 L698.4 233.4 L703.1 233.6 L707.9 233.8 L712.8 234 L717.6 234.2 L722.4 234.4 L727.3 234.5 L732.1 234.7 L737 234.8 L741.8 234.9 L746.7 235 L751.6 235 L756.5 235.1 L761.4 235.1 L766.2 235.1 L771.1 235.1 L776 235 L780.9 235 L785.8 234.9 L790.6 234.8 L795.5 234.7 L800.4 234.6 L805.2 234.4 L810.1 234.2 L814.9 234.1 L819.7 233.8 L824.5 233.6 L829.3 233.4 L834.1 233.1 L838.9 232.8 L843.6 232.5 L848.4 232.2 L853.1 231.9 L857.8 231.6 L862.5 231.2 L867.1 230.8 L871.7 230.4 L876.3 230 L880.9 229.5 L885.5 229.1 L890 228.6 L894.5 228.1 L899 227.6 L903.4 227.1 L907.8 226.5 L912.2 226 L916.6 225.4 L920.9 224.8 L925.2 224.2 L929.4 223.6 L933.6 222.9 L937.8 222.3 L941.9 221.6 L946 220.9 L950.1 220.2 L954.1 219.5 L958 218.8 L962 218 L965.8 217.3 L969.7 216.5 L973.5 215.7 L977.2 214.9 L980.9 214.1 L984.6 213.2 L988.2 212.4 L991.7 211.5 L995.2 210.6 L998.7 209.7 L1002.1 208.8 L1005.4 207.9 L1008.7 207 L1011.9 206.1 L1015.1 205.1 L1018.2 204.2 L1021.3 203.2 L1024.3 202.2 L1027.3 201.2 L1030.2 200.2 L1033 199.2 L1035.8 198.2 L1038.5 197.1 L1041.2 196.1 L1043.8 195 L1046.3 193.9 L1048.8 192.9 L1051.2 191.8 L1053.6 190.7 L1055.9 189.6 L1058.1 188.5 L1060.3 187.4 L1062.4 186.2 L1064.4 185.1 L1066.4 184 L1068.3 182.8 L1070.1 181.7 L1071.9 180.5 L1073.6 179.3 L1075.2 178.2 L1076.8 177 L1078.3 175.8 L1079.7 174.6 L1081.1 173.4 L1082.3 172.2 L1083.6 171 L1084.7 169.8 L1085.8 168.6 L1086.8 167.4 L1087.8 166.1 L1088.7 164.9 L1089.5 163.7 L1090.2 162.5 L1090.9 161.2 L1091.5 160 L1092 158.8 L1092.4 157.5 L1092.8 156.3 L1093.1 155.1 L1093.4 153.8 L1093.6 152.6 L1093.7 151.4 L1093.7 150.1 L1093.4 376 L1093.4 377.3 L1093.2 378.6 L1093 379.9 L1092.7 381.2 L1092.3 382.5 L1091.8 383.7 L1091.3 385 L1090.7 386.3 L1090.1 387.6 L1089.4 388.9 L1088.6 390.2 L1087.7 391.4 L1086.8 392.7 L1085.8 394 L1084.7 395.2 L1083.5 396.5 L1082.3 397.8 L1081 399 L1079.7 400.2 L1078.3 401.5 L1076.8 402.7 L1075.2 404 L1073.6 405.2 L1071.9 406.4 L1070.2 407.6 L1068.3 408.8 L1066.4 410 L1064.5 411.2 L1062.5 412.4 L1060.4 413.6 L1058.2 414.7 L1056 415.9 L1053.7 417 L1051.4 418.2 L1049 419.3 L1046.5 420.4 L1044 421.6 L1041.4 422.7 L1038.8 423.8 L1036 424.8 L1033.3 425.9 L1030.4 427 L1027.6 428 L1024.6 429.1 L1021.6 430.1 L1018.5 431.1 L1015.4 432.1 L1012.3 433.1 L1009 434.1 L1005.8 435.1 L1002.4 436 L999 436.9 L995.6 437.9 L992.1 438.8 L988.6 439.7 L985 440.6 L981.3 441.4 L977.7 442.3 L973.9 443.1 L970.1 444 L966.3 444.8 L962.5 445.6 L958.5 446.4 L954.6 447.1 L950.6 447.9 L946.5 448.6 L942.5 449.3 L938.3 450 L934.2 450.7 L930 451.4 L925.8 452.1 L921.5 452.7 L917.2 453.3 L912.8 453.9 L908.5 454.5 L904.1 455.1 L899.6 455.6 L895.2 456.1 L890.7 456.7 L886.2 457.2 L881.6 457.6 L877 458.1 L872.4 458.5 L867.8 459 L863.2 459.4 L858.5 459.8 L853.8 460.1 L849.1 460.5 L844.4 460.8 L839.6 461.1 L834.9 461.4 L830.1 461.7 L825.3 461.9 L820.5 462.2 L815.7 462.4 L810.9 462.6 L806 462.8 L801.2 462.9 L796.3 463.1 L791.5 463.2 L786.6 463.3 L781.7 463.4 L776.9 463.4 L772 463.5 L767.1 463.5 L762.2 463.5 L757.4 463.5 L752.5 463.4 L747.6 463.4 L742.7 463.3 L737.9 463.2 L733 463.1 L728.2 462.9 L723.3 462.8 L718.5 462.6 L713.7 462.4 L708.9 462.2 L704.1 462 L699.3 461.7 L694.5 461.5 L689.8 461.2 L685 460.9 L680.3 460.5 L675.6 460.2 L671 459.8 L666.3 459.4 L661.7 459 L657.1 458.6 L652.5 458.2 L647.9 457.7 L643.4 457.2 L638.9 456.7 L634.4 456.2 L630 455.7 L625.6 455.2 L621.2 454.6 L616.8 454 L612.5 453.4 L608.2 452.8 L604 452.2 L599.8 451.5 L595.6 450.8 L591.5 450.2 L587.4 449.5 L583.3 448.7 L579.3 448 L575.4 447.3 L571.4 446.5 L567.5 445.7 L563.7 444.9 L559.9 444.1 L556.2 443.3 L552.5 442.4 L548.8 441.6 L545.2 440.7 L541.6 439.8 L538.1 438.9 L534.7 438 L531.3 437.1 L527.9 436.2 L524.6 435.2 L521.4 434.3 L518.2 433.3 L515.1 432.3 L512 431.3 L508.9 430.3 L506 429.2 L503.1 428.2 L500.2 427.2 L497.4 426.1 L494.7 425 L492 423.9 L489.4 422.9 L486.9 421.7 L484.4 420.6 L482 419.5 L479.6 418.4 L477.3 417.2 L475.1 416.1 L472.9 414.9 L470.8 413.8 L468.7 412.6 L466.8 411.4 L464.8 410.2 L463 409 L461.2 407.8 L459.5 406.6 L457.9 405.4 L456.3 404.2 L454.8 402.9 L453.3 401.7 L452 400.5 L450.7 399.2 L449.4 398 L448.2 396.7 L447.2 395.5 L446.1 394.2 L445.2 392.9 L444.3 391.7 L443.5 390.4 L442.7 389.1 L442 387.8 L441.4 386.5 L440.9 385.3 L440.4 384 L440 382.7 L439.7 381.4 L439.4 380.1 L439.2 378.8 L439.1 377.5 L439.1 376.2Z" fill="url(#blue)"/>
<path d="M438.5 139.5 L438.5 140.7 L438.6 142 L438.8 143.2 L439.1 144.4 L439.4 145.7 L439.8 146.9 L440.2 148.1 L440.8 149.4 L441.4 150.6 L442 151.8 L442.8 153 L443.6 154.3 L444.5 155.5 L445.4 156.7 L446.4 157.9 L447.5 159.1 L448.7 160.3 L449.9 161.5 L451.2 162.7 L452.6 163.9 L454 165.1 L455.5 166.2 L457.1 167.4 L458.7 168.6 L460.4 169.7 L462.2 170.9 L464 172 L465.9 173.2 L467.9 174.3 L469.9 175.4 L472 176.5 L474.2 177.7 L476.4 178.8 L478.7 179.8 L481.1 180.9 L483.5 182 L486 183.1 L488.5 184.1 L491.1 185.2 L493.8 186.2 L496.5 187.2 L499.3 188.2 L502.2 189.3 L505.1 190.2 L508 191.2 L511 192.2 L514.1 193.2 L517.2 194.1 L520.4 195 L523.7 196 L527 196.9 L530.3 197.8 L533.7 198.7 L537.2 199.5 L540.7 200.4 L544.2 201.3 L547.8 202.1 L551.5 202.9 L555.2 203.7 L558.9 204.5 L562.7 205.3 L566.6 206 L570.4 206.8 L574.4 207.5 L578.3 208.2 L582.4 208.9 L586.4 209.6 L590.5 210.3 L594.6 211 L598.8 211.6 L603 212.2 L607.3 212.8 L611.5 213.4 L615.9 214 L620.2 214.6 L624.6 215.1 L629 215.6 L633.4 216.1 L637.9 216.6 L642.4 217.1 L647 217.6 L651.5 218 L656.1 218.4 L660.7 218.8 L665.3 219.2 L670 219.6 L674.7 219.9 L679.4 220.3 L684.1 220.6 L688.8 220.9 L693.6 221.2 L698.3 221.4 L703.1 221.7 L707.9 221.9 L712.7 222.1 L717.6 222.3 L722.4 222.4 L727.2 222.6 L732.1 222.7 L737 222.8 L741.8 222.9 L746.7 223 L751.6 223.1 L756.5 223.1 L761.3 223.1 L766.2 223.1 L771.1 223.1 L776 223.1 L780.9 223 L785.8 222.9 L790.6 222.9 L795.5 222.7 L800.4 222.6 L805.2 222.5 L810.1 222.3 L814.9 222.1 L819.7 221.9 L824.5 221.7 L829.3 221.4 L834.1 221.2 L838.9 220.9 L843.6 220.6 L848.4 220.3 L853.1 220 L857.8 219.6 L862.5 219.2 L867.1 218.9 L871.7 218.5 L876.3 218 L880.9 217.6 L885.5 217.1 L890 216.7 L894.5 216.2 L899 215.7 L903.4 215.2 L907.8 214.6 L912.2 214.1 L916.6 213.5 L920.9 212.9 L925.2 212.3 L929.4 211.7 L933.6 211 L937.8 210.4 L941.9 209.7 L946 209 L950.1 208.3 L954.1 207.6 L958 206.9 L962 206.1 L965.8 205.3 L969.7 204.6 L973.5 203.8 L977.2 203 L980.9 202.2 L984.6 201.3 L988.2 200.5 L991.7 199.6 L995.2 198.7 L998.7 197.9 L1002.1 197 L1005.4 196.1 L1008.7 195.1 L1011.9 194.2 L1015.1 193.2 L1018.2 192.3 L1021.3 191.3 L1024.3 190.3 L1027.3 189.3 L1030.2 188.3 L1033 187.3 L1035.8 186.3 L1038.5 185.3 L1041.2 184.2 L1043.8 183.2 L1046.3 182.1 L1048.8 181 L1051.2 179.9 L1053.6 178.8 L1055.9 177.7 L1058.1 176.6 L1060.3 175.5 L1062.4 174.4 L1064.4 173.3 L1066.4 172.1 L1068.3 171 L1070.1 169.8 L1071.9 168.7 L1073.6 167.5 L1075.2 166.3 L1076.8 165.2 L1078.3 164 L1079.7 162.8 L1081.1 161.6 L1082.4 160.4 L1083.6 159.2 L1084.7 158 L1085.8 156.8 L1086.8 155.6 L1087.8 154.4 L1088.7 153.1 L1089.5 151.9 L1090.2 150.7 L1090.9 149.5 L1091.5 148.2 L1092 147 L1092.4 145.8 L1092.8 144.5 L1093.1 143.3 L1093.4 142.1 L1093.6 140.8 L1093.7 139.6 L1093.7 138.4 L1093.4 389.2 L1093.3 390.5 L1093.2 391.8 L1092.9 393.1 L1092.6 394.4 L1092.3 395.7 L1091.8 397 L1091.3 398.3 L1090.7 399.6 L1090.1 400.9 L1089.3 402.1 L1088.5 403.4 L1087.7 404.7 L1086.7 406 L1085.7 407.2 L1084.7 408.5 L1083.5 409.8 L1082.3 411 L1081 412.3 L1079.7 413.5 L1078.3 414.8 L1076.8 416 L1075.2 417.2 L1073.6 418.5 L1071.9 419.7 L1070.1 420.9 L1068.3 422.1 L1066.4 423.3 L1064.5 424.5 L1062.5 425.7 L1060.4 426.9 L1058.2 428.1 L1056 429.2 L1053.7 430.4 L1051.4 431.5 L1049 432.6 L1046.5 433.8 L1044 434.9 L1041.4 436 L1038.7 437.1 L1036 438.2 L1033.3 439.3 L1030.4 440.3 L1027.6 441.4 L1024.6 442.4 L1021.6 443.4 L1018.5 444.5 L1015.4 445.5 L1012.3 446.5 L1009 447.4 L1005.7 448.4 L1002.4 449.4 L999 450.3 L995.6 451.2 L992.1 452.2 L988.6 453.1 L985 454 L981.3 454.8 L977.7 455.7 L973.9 456.5 L970.1 457.4 L966.3 458.2 L962.4 459 L958.5 459.8 L954.6 460.5 L950.6 461.3 L946.5 462 L942.5 462.7 L938.3 463.4 L934.2 464.1 L930 464.8 L925.8 465.5 L921.5 466.1 L917.2 466.7 L912.8 467.3 L908.5 467.9 L904.1 468.5 L899.6 469 L895.2 469.6 L890.7 470.1 L886.2 470.6 L881.6 471.1 L877 471.5 L872.4 472 L867.8 472.4 L863.2 472.8 L858.5 473.2 L853.8 473.5 L849.1 473.9 L844.4 474.2 L839.6 474.5 L834.9 474.8 L830.1 475.1 L825.3 475.4 L820.5 475.6 L815.7 475.8 L810.9 476 L806 476.2 L801.2 476.3 L796.3 476.5 L791.5 476.6 L786.6 476.7 L781.7 476.8 L776.9 476.8 L772 476.9 L767.1 476.9 L762.2 476.9 L757.4 476.9 L752.5 476.9 L747.6 476.8 L742.7 476.7 L737.9 476.6 L733 476.5 L728.2 476.4 L723.3 476.2 L718.5 476 L713.7 475.9 L708.9 475.6 L704.1 475.4 L699.3 475.2 L694.5 474.9 L689.8 474.6 L685.1 474.3 L680.3 474 L675.7 473.6 L671 473.2 L666.3 472.9 L661.7 472.5 L657.1 472 L652.5 471.6 L648 471.1 L643.4 470.7 L638.9 470.2 L634.4 469.7 L630 469.1 L625.6 468.6 L621.2 468 L616.9 467.4 L612.5 466.8 L608.3 466.2 L604 465.6 L599.8 464.9 L595.6 464.2 L591.5 463.6 L587.4 462.9 L583.4 462.1 L579.3 461.4 L575.4 460.7 L571.4 459.9 L567.6 459.1 L563.7 458.3 L559.9 457.5 L556.2 456.7 L552.5 455.8 L548.8 455 L545.2 454.1 L541.7 453.2 L538.2 452.3 L534.7 451.4 L531.3 450.5 L527.9 449.5 L524.6 448.6 L521.4 447.6 L518.2 446.6 L515.1 445.6 L512 444.6 L509 443.6 L506 442.6 L503.1 441.6 L500.3 440.5 L497.5 439.4 L494.7 438.4 L492.1 437.3 L489.4 436.2 L486.9 435.1 L484.4 434 L482 432.8 L479.6 431.7 L477.3 430.6 L475.1 429.4 L472.9 428.3 L470.8 427.1 L468.8 425.9 L466.8 424.7 L464.9 423.5 L463 422.3 L461.3 421.1 L459.5 419.9 L457.9 418.7 L456.3 417.5 L454.8 416.2 L453.4 415 L452 413.8 L450.7 412.5 L449.4 411.2 L448.3 410 L447.2 408.7 L446.2 407.5 L445.2 406.2 L444.3 404.9 L443.5 403.6 L442.7 402.4 L442.1 401.1 L441.4 399.8 L440.9 398.5 L440.4 397.2 L440 395.9 L439.7 394.6 L439.5 393.3 L439.3 392.1 L439.2 390.8 L439.1 389.5Z" fill="url(#layers)"/>
<path d="M438.5 150 L438.6 151.1 L438.6 152.1 L438.8 153.2 L438.9 154.3 L439.2 155.3 L439.5 156.4 L439.8 157.4 L440.2 158.5 L440.6 159.5 L441.1 160.6 L441.7 161.6 L442.3 162.7 L442.9 163.7 L443.6 164.8 L444.4 165.8 L445.2 166.9 L446 167.9 L446.9 169 L447.9 170 L448.9 171 L449.9 172 L451 173.1 L452.2 174.1 L453.4 175.1 L454.7 176.1 L456 177.1 L457.3 178.1 L458.7 179.1 L460.2 180.1 L461.7 181.1 L463.3 182.1 L464.9 183.1 L466.5 184.1 L468.2 185 L470 186 L471.8 187 L473.6 187.9 L475.5 188.9 L477.4 189.8 L479.4 190.7 L481.5 191.7 L483.5 192.6 L485.7 193.5 L487.8 194.4 L490 195.3 L492.3 196.2 L494.6 197.1 L496.9 198 L499.3 198.8 L501.8 199.7 L504.3 200.6 L506.8 201.4 L509.3 202.3 L511.9 203.1 L514.6 203.9 L517.3 204.7 L520 205.5 L522.8 206.3 L525.6 207.1 L528.4 207.9 L531.3 208.7 L534.2 209.4 L537.2 210.2 L540.2 210.9 L543.2 211.6 L546.3 212.4 L549.4 213.1 L552.6 213.8 L555.7 214.5 L559 215.1 L562.2 215.8 L565.5 216.5 L568.8 217.1 L572.1 217.7 L575.5 218.4 L578.9 219 L582.4 219.6 L585.8 220.2 L589.3 220.8 L592.9 221.3 L596.4 221.9 L600 222.4 L603.6 223 L607.3 223.5 L610.9 224 L614.6 224.5 L618.4 225 L622.1 225.5 L625.9 225.9 L629.7 226.4 L633.5 226.8 L637.3 227.2 L641.2 227.6 L645 228 L648.9 228.4 L652.8 228.8 L656.8 229.1 L660.7 229.5 L664.7 229.8 L668.7 230.1 L672.7 230.5 L676.7 230.7 L680.7 231 L684.8 231.3 L688.8 231.5 L692.9 231.8 L697 232 L701.1 232.2 L705.2 232.4 L709.3 232.6 L713.4 232.8 L717.6 232.9 L721.7 233.1 L725.9 233.2 L730 233.3 L734.2 233.5 L738.4 233.5 L742.5 233.6 L746.7 233.7 L750.9 233.7 L755.1 233.8 L759.3 233.8 L763.4 233.8 L767.6 233.8 L771.8 233.8 L776 233.7 L780.2 233.7 L784.4 233.6 L788.6 233.6 L792.7 233.5 L796.9 233.4 L801.1 233.3 L805.2 233.1 L809.4 233 L813.5 232.8 L817.7 232.7 L821.8 232.5 L825.9 232.3 L830 232.1 L834.1 231.9 L838.2 231.6 L842.3 231.4 L846.3 231.1 L850.4 230.8 L854.4 230.5 L858.5 230.2 L862.5 229.9 L866.4 229.6 L870.4 229.2 L874.4 228.9 L878.3 228.5 L882.2 228.1 L886.1 227.7 L890 227.3 L893.9 226.9 L897.7 226.5 L901.5 226 L905.3 225.6 L909.1 225.1 L912.9 224.6 L916.6 224.1 L920.3 223.6 L923.9 223.1 L927.6 222.6 L931.2 222 L934.8 221.5 L938.4 220.9 L941.9 220.3 L945.4 219.7 L948.9 219.2 L952.4 218.5 L955.8 217.9 L959.2 217.3 L962.5 216.6 L965.8 216 L969.1 215.3 L972.4 214.6 L975.6 214 L978.8 213.3 L982 212.6 L985.1 211.8 L988.2 211.1 L991.2 210.4 L994.2 209.6 L997.2 208.9 L1000.1 208.1 L1003 207.3 L1005.9 206.5 L1008.7 205.7 L1011.5 204.9 L1014.2 204.1 L1016.9 203.3 L1019.6 202.5 L1022.2 201.6 L1024.8 200.8 L1027.3 199.9 L1029.8 199.1 L1032.2 198.2 L1034.6 197.3 L1037 196.5 L1039.3 195.6 L1041.6 194.7 L1043.8 193.8 L1046 192.8 L1048.1 191.9 L1050.2 191 L1052.2 190.1 L1054.2 189.1 L1056.2 188.2 L1058.1 187.2 L1060 186.3 L1061.8 185.3 L1063.5 184.3 L1065.2 183.4 L1066.9 182.4 L1068.5 181.4 L1070.1 180.4 L1071.6 179.4 L1073.1 178.4 L1074.5 177.4 L1075.9 176.4 L1077.2 175.4 L1078.5 174.4 L1079.7 173.3 L1080.9 172.3 L1082 171.3 L1083.1 170.3 L1084.1 169.2 L1085 168.2 L1086 167.2 L1086.8 166.1 L1087.6 165.1 L1088.4 164 L1089.1 163 L1089.8 161.9 L1090.4 160.9 L1091 159.8 L1091.5 158.8 L1091.9 157.7 L1092.3 156.6 L1092.7 155.6 L1093 154.5 L1093.2 153.5 L1093.4 152.4 L1093.6 151.3 L1093.6 150.3 L1093.7 149.2" fill="none" stroke="#207800" stroke-width=".8" opacity=".28"/>
<path d="M438.5 147.8 L438.5 148.8 L438.6 149.9 L438.8 150.9 L438.9 152 L439.2 153.1 L439.5 154.1 L439.8 155.2 L440.2 156.2 L440.6 157.3 L441.1 158.3 L441.7 159.4 L442.3 160.4 L442.9 161.5 L443.6 162.5 L444.3 163.6 L445.2 164.6 L446 165.7 L446.9 166.7 L447.9 167.7 L448.9 168.8 L449.9 169.8 L451 170.8 L452.2 171.8 L453.4 172.8 L454.7 173.9 L456 174.9 L457.3 175.9 L458.7 176.9 L460.2 177.9 L461.7 178.9 L463.3 179.8 L464.9 180.8 L466.5 181.8 L468.2 182.8 L470 183.7 L471.8 184.7 L473.6 185.6 L475.5 186.6 L477.4 187.5 L479.4 188.5 L481.4 189.4 L483.5 190.3 L485.6 191.2 L487.8 192.1 L490 193 L492.3 193.9 L494.6 194.8 L496.9 195.7 L499.3 196.6 L501.8 197.4 L504.2 198.3 L506.8 199.1 L509.3 200 L511.9 200.8 L514.6 201.6 L517.3 202.4 L520 203.3 L522.8 204 L525.6 204.8 L528.4 205.6 L531.3 206.4 L534.2 207.1 L537.2 207.9 L540.2 208.6 L543.2 209.4 L546.3 210.1 L549.4 210.8 L552.6 211.5 L555.7 212.2 L558.9 212.9 L562.2 213.5 L565.5 214.2 L568.8 214.8 L572.1 215.5 L575.5 216.1 L578.9 216.7 L582.4 217.3 L585.8 217.9 L589.3 218.5 L592.9 219 L596.4 219.6 L600 220.1 L603.6 220.7 L607.3 221.2 L610.9 221.7 L614.6 222.2 L618.4 222.7 L622.1 223.2 L625.9 223.6 L629.6 224.1 L633.5 224.5 L637.3 224.9 L641.1 225.3 L645 225.7 L648.9 226.1 L652.8 226.5 L656.8 226.9 L660.7 227.2 L664.7 227.5 L668.7 227.9 L672.7 228.2 L676.7 228.5 L680.7 228.7 L684.8 229 L688.8 229.3 L692.9 229.5 L697 229.7 L701.1 229.9 L705.2 230.1 L709.3 230.3 L713.4 230.5 L717.6 230.7 L721.7 230.8 L725.9 230.9 L730 231.1 L734.2 231.2 L738.4 231.3 L742.5 231.3 L746.7 231.4 L750.9 231.4 L755.1 231.5 L759.3 231.5 L763.4 231.5 L767.6 231.5 L771.8 231.5 L776 231.5 L780.2 231.4 L784.4 231.4 L788.5 231.3 L792.7 231.2 L796.9 231.1 L801.1 231 L805.2 230.8 L809.4 230.7 L813.5 230.5 L817.7 230.4 L821.8 230.2 L825.9 230 L830 229.8 L834.1 229.6 L838.2 229.3 L842.3 229.1 L846.3 228.8 L850.4 228.5 L854.4 228.2 L858.5 227.9 L862.5 227.6 L866.4 227.3 L870.4 227 L874.4 226.6 L878.3 226.2 L882.2 225.8 L886.1 225.5 L890 225 L893.9 224.6 L897.7 224.2 L901.5 223.8 L905.3 223.3 L909.1 222.8 L912.9 222.3 L916.6 221.8 L920.3 221.3 L923.9 220.8 L927.6 220.3 L931.2 219.8 L934.8 219.2 L938.4 218.6 L941.9 218.1 L945.4 217.5 L948.9 216.9 L952.4 216.3 L955.8 215.6 L959.2 215 L962.5 214.4 L965.8 213.7 L969.1 213 L972.4 212.4 L975.6 211.7 L978.8 211 L982 210.3 L985.1 209.6 L988.2 208.8 L991.2 208.1 L994.2 207.3 L997.2 206.6 L1000.1 205.8 L1003 205 L1005.9 204.3 L1008.7 203.5 L1011.5 202.7 L1014.2 201.9 L1016.9 201 L1019.6 200.2 L1022.2 199.4 L1024.8 198.5 L1027.3 197.7 L1029.8 196.8 L1032.2 195.9 L1034.6 195.1 L1037 194.2 L1039.3 193.3 L1041.6 192.4 L1043.8 191.5 L1046 190.6 L1048.1 189.6 L1050.2 188.7 L1052.2 187.8 L1054.2 186.8 L1056.2 185.9 L1058.1 185 L1060 184 L1061.8 183 L1063.5 182.1 L1065.2 181.1 L1066.9 180.1 L1068.5 179.1 L1070.1 178.1 L1071.6 177.1 L1073.1 176.1 L1074.5 175.1 L1075.9 174.1 L1077.2 173.1 L1078.5 172.1 L1079.7 171.1 L1080.9 170.1 L1082 169 L1083.1 168 L1084.1 167 L1085 165.9 L1086 164.9 L1086.8 163.9 L1087.6 162.8 L1088.4 161.8 L1089.1 160.7 L1089.8 159.7 L1090.4 158.6 L1091 157.6 L1091.5 156.5 L1091.9 155.5 L1092.3 154.4 L1092.7 153.3 L1093 152.3 L1093.2 151.2 L1093.4 150.2 L1093.6 149.1 L1093.6 148 L1093.7 147" fill="none" stroke="#207800" stroke-width=".8" opacity=".28"/>
<path d="M438.5 145.5 L438.5 146.6 L438.6 147.6 L438.7 148.7 L438.9 149.7 L439.2 150.8 L439.4 151.9 L439.8 152.9 L440.2 154 L440.6 155 L441.1 156.1 L441.7 157.1 L442.2 158.2 L442.9 159.2 L443.6 160.3 L444.3 161.3 L445.1 162.4 L446 163.4 L446.9 164.4 L447.9 165.5 L448.9 166.5 L449.9 167.5 L451 168.5 L452.2 169.6 L453.4 170.6 L454.7 171.6 L456 172.6 L457.3 173.6 L458.7 174.6 L460.2 175.6 L461.7 176.6 L463.2 177.6 L464.8 178.6 L466.5 179.5 L468.2 180.5 L470 181.5 L471.7 182.4 L473.6 183.4 L475.5 184.3 L477.4 185.3 L479.4 186.2 L481.4 187.1 L483.5 188.1 L485.6 189 L487.8 189.9 L490 190.8 L492.3 191.7 L494.6 192.6 L496.9 193.4 L499.3 194.3 L501.8 195.2 L504.2 196 L506.8 196.9 L509.3 197.7 L511.9 198.5 L514.6 199.4 L517.3 200.2 L520 201 L522.8 201.8 L525.6 202.6 L528.4 203.3 L531.3 204.1 L534.2 204.9 L537.2 205.6 L540.2 206.4 L543.2 207.1 L546.3 207.8 L549.4 208.5 L552.5 209.2 L555.7 209.9 L558.9 210.6 L562.2 211.2 L565.5 211.9 L568.8 212.6 L572.1 213.2 L575.5 213.8 L578.9 214.4 L582.4 215 L585.8 215.6 L589.3 216.2 L592.9 216.8 L596.4 217.3 L600 217.9 L603.6 218.4 L607.3 218.9 L610.9 219.4 L614.6 219.9 L618.3 220.4 L622.1 220.9 L625.9 221.3 L629.6 221.8 L633.5 222.2 L637.3 222.7 L641.1 223.1 L645 223.5 L648.9 223.8 L652.8 224.2 L656.8 224.6 L660.7 224.9 L664.7 225.3 L668.7 225.6 L672.7 225.9 L676.7 226.2 L680.7 226.5 L684.8 226.7 L688.8 227 L692.9 227.2 L697 227.4 L701.1 227.7 L705.2 227.9 L709.3 228 L713.4 228.2 L717.6 228.4 L721.7 228.5 L725.9 228.7 L730 228.8 L734.2 228.9 L738.4 229 L742.5 229 L746.7 229.1 L750.9 229.2 L755.1 229.2 L759.3 229.2 L763.4 229.2 L767.6 229.2 L771.8 229.2 L776 229.2 L780.2 229.1 L784.4 229.1 L788.5 229 L792.7 228.9 L796.9 228.8 L801.1 228.7 L805.2 228.6 L809.4 228.4 L813.5 228.3 L817.7 228.1 L821.8 227.9 L825.9 227.7 L830 227.5 L834.1 227.3 L838.2 227 L842.3 226.8 L846.3 226.5 L850.4 226.3 L854.4 226 L858.4 225.7 L862.5 225.3 L866.4 225 L870.4 224.7 L874.4 224.3 L878.3 223.9 L882.2 223.6 L886.1 223.2 L890 222.8 L893.9 222.3 L897.7 221.9 L901.5 221.5 L905.3 221 L909.1 220.5 L912.9 220.1 L916.6 219.6 L920.3 219.1 L923.9 218.5 L927.6 218 L931.2 217.5 L934.8 216.9 L938.4 216.4 L941.9 215.8 L945.4 215.2 L948.9 214.6 L952.4 214 L955.8 213.4 L959.2 212.7 L962.5 212.1 L965.8 211.4 L969.1 210.8 L972.4 210.1 L975.6 209.4 L978.8 208.7 L982 208 L985.1 207.3 L988.2 206.6 L991.2 205.8 L994.2 205.1 L997.2 204.3 L1000.1 203.5 L1003 202.8 L1005.9 202 L1008.7 201.2 L1011.5 200.4 L1014.2 199.6 L1016.9 198.8 L1019.6 197.9 L1022.2 197.1 L1024.8 196.3 L1027.3 195.4 L1029.8 194.5 L1032.2 193.7 L1034.6 192.8 L1037 191.9 L1039.3 191 L1041.6 190.1 L1043.8 189.2 L1046 188.3 L1048.1 187.4 L1050.2 186.5 L1052.2 185.5 L1054.2 184.6 L1056.2 183.6 L1058.1 182.7 L1060 181.7 L1061.8 180.8 L1063.5 179.8 L1065.2 178.8 L1066.9 177.8 L1068.5 176.9 L1070.1 175.9 L1071.6 174.9 L1073.1 173.9 L1074.5 172.9 L1075.9 171.9 L1077.2 170.9 L1078.5 169.8 L1079.7 168.8 L1080.9 167.8 L1082 166.8 L1083.1 165.7 L1084.1 164.7 L1085 163.7 L1086 162.6 L1086.8 161.6 L1087.6 160.6 L1088.4 159.5 L1089.1 158.5 L1089.8 157.4 L1090.4 156.4 L1091 155.3 L1091.5 154.3 L1091.9 153.2 L1092.3 152.1 L1092.7 151.1 L1093 150 L1093.2 149 L1093.4 147.9 L1093.6 146.8 L1093.7 145.8 L1093.7 144.7" fill="none" stroke="#207800" stroke-width=".8" opacity=".28"/>
<path d="M438.5 143.3 L438.5 144.3 L438.6 145.4 L438.7 146.4 L438.9 147.5 L439.2 148.6 L439.4 149.6 L439.8 150.7 L440.2 151.7 L440.6 152.8 L441.1 153.8 L441.6 154.9 L442.2 155.9 L442.9 157 L443.6 158 L444.3 159.1 L445.1 160.1 L446 161.1 L446.9 162.2 L447.9 163.2 L448.9 164.2 L449.9 165.3 L451 166.3 L452.2 167.3 L453.4 168.3 L454.6 169.3 L456 170.3 L457.3 171.3 L458.7 172.3 L460.2 173.3 L461.7 174.3 L463.2 175.3 L464.8 176.3 L466.5 177.3 L468.2 178.2 L469.9 179.2 L471.7 180.2 L473.6 181.1 L475.5 182.1 L477.4 183 L479.4 183.9 L481.4 184.9 L483.5 185.8 L485.6 186.7 L487.8 187.6 L490 188.5 L492.3 189.4 L494.6 190.3 L496.9 191.2 L499.3 192 L501.8 192.9 L504.2 193.8 L506.8 194.6 L509.3 195.4 L511.9 196.3 L514.6 197.1 L517.3 197.9 L520 198.7 L522.8 199.5 L525.6 200.3 L528.4 201.1 L531.3 201.8 L534.2 202.6 L537.2 203.3 L540.2 204.1 L543.2 204.8 L546.3 205.5 L549.4 206.2 L552.5 206.9 L555.7 207.6 L558.9 208.3 L562.2 209 L565.5 209.6 L568.8 210.3 L572.1 210.9 L575.5 211.5 L578.9 212.1 L582.4 212.7 L585.8 213.3 L589.3 213.9 L592.9 214.5 L596.4 215 L600 215.6 L603.6 216.1 L607.3 216.6 L610.9 217.1 L614.6 217.6 L618.3 218.1 L622.1 218.6 L625.9 219.1 L629.6 219.5 L633.5 219.9 L637.3 220.4 L641.1 220.8 L645 221.2 L648.9 221.6 L652.8 221.9 L656.8 222.3 L660.7 222.6 L664.7 223 L668.7 223.3 L672.7 223.6 L676.7 223.9 L680.7 224.2 L684.8 224.4 L688.8 224.7 L692.9 224.9 L697 225.2 L701.1 225.4 L705.2 225.6 L709.3 225.8 L713.4 225.9 L717.6 226.1 L721.7 226.2 L725.9 226.4 L730 226.5 L734.2 226.6 L738.4 226.7 L742.5 226.8 L746.7 226.8 L750.9 226.9 L755.1 226.9 L759.3 226.9 L763.4 226.9 L767.6 226.9 L771.8 226.9 L776 226.9 L780.2 226.8 L784.4 226.8 L788.5 226.7 L792.7 226.6 L796.9 226.5 L801.1 226.4 L805.2 226.3 L809.4 226.1 L813.5 226 L817.7 225.8 L821.8 225.6 L825.9 225.4 L830 225.2 L834.1 225 L838.2 224.8 L842.3 224.5 L846.3 224.2 L850.4 224 L854.4 223.7 L858.4 223.4 L862.5 223.1 L866.4 222.7 L870.4 222.4 L874.4 222 L878.3 221.7 L882.2 221.3 L886.1 220.9 L890 220.5 L893.9 220.1 L897.7 219.6 L901.5 219.2 L905.3 218.7 L909.1 218.3 L912.9 217.8 L916.6 217.3 L920.3 216.8 L923.9 216.3 L927.6 215.7 L931.2 215.2 L934.8 214.6 L938.4 214.1 L941.9 213.5 L945.4 212.9 L948.9 212.3 L952.4 211.7 L955.8 211.1 L959.2 210.4 L962.5 209.8 L965.8 209.1 L969.1 208.5 L972.4 207.8 L975.6 207.1 L978.8 206.4 L982 205.7 L985.1 205 L988.2 204.3 L991.2 203.5 L994.2 202.8 L997.2 202 L1000.1 201.3 L1003 200.5 L1005.9 199.7 L1008.7 198.9 L1011.5 198.1 L1014.2 197.3 L1016.9 196.5 L1019.6 195.7 L1022.2 194.8 L1024.8 194 L1027.3 193.1 L1029.8 192.3 L1032.2 191.4 L1034.6 190.5 L1037 189.6 L1039.3 188.7 L1041.6 187.8 L1043.8 186.9 L1046 186 L1048.1 185.1 L1050.2 184.2 L1052.3 183.3 L1054.2 182.3 L1056.2 181.4 L1058.1 180.4 L1060 179.5 L1061.8 178.5 L1063.5 177.5 L1065.2 176.6 L1066.9 175.6 L1068.5 174.6 L1070.1 173.6 L1071.6 172.6 L1073.1 171.6 L1074.5 170.6 L1075.9 169.6 L1077.2 168.6 L1078.5 167.6 L1079.7 166.6 L1080.9 165.5 L1082 164.5 L1083.1 163.5 L1084.1 162.5 L1085.1 161.4 L1086 160.4 L1086.8 159.3 L1087.7 158.3 L1088.4 157.2 L1089.1 156.2 L1089.8 155.2 L1090.4 154.1 L1091 153.1 L1091.5 152 L1091.9 150.9 L1092.3 149.9 L1092.7 148.8 L1093 147.8 L1093.2 146.7 L1093.4 145.7 L1093.6 144.6 L1093.7 143.5 L1093.7 142.5" fill="none" stroke="#207800" stroke-width=".8" opacity=".28"/>
<path d="M1064.3 103.7 L1066.6 105 L1068.9 106.3 L1071 107.7 L1073 109 L1075 110.4 L1076.8 111.8 L1078.6 113.2 L1080.3 114.6 L1081.8 116 L1083.3 117.4 L1084.7 118.8 L1086 120.3 L1087.2 121.7 L1088.2 123.1 L1089.2 124.6 L1090.1 126 L1090.9 127.5 L1091.6 128.9 L1092.2 130.4 L1092.7 131.9 L1093.1 133.3 L1093.4 134.8 L1093.6 136.3 L1093.7 137.8 L1093.7 139.2 L1093.6 140.7 L1093.4 142.2 L1093.1 143.6 L1092.7 145.1 L1092.2 146.6 L1091.6 148.1 L1090.8 149.5 L1090 151 L1089.1 152.4 L1088.1 153.9 L1087 155.4 L1085.8 156.8 L1084.5 158.2 L1083.1 159.7 L1081.6 161.1 L1080 162.5 L1078.3 164 L1076.5 165.4 L1074.6 166.8 L1072.6 168.2 L1070.5 169.5 L1068.4 170.9 L1066.1 172.3 L1063.7 173.6 L1061.3 175 L1058.7 176.3 L1056.1 177.7 L1053.3 179 L1050.5 180.3 L1047.6 181.6 L1044.6 182.8 L1041.5 184.1 L1038.3 185.3 L1035.1 186.6 L1031.7 187.8 L1028.3 189 L1024.8 190.2 L1021.2 191.4 L1017.5 192.5 L1013.8 193.7 L1009.9 194.8 L1006 195.9 L1002 197 L998 198 L993.8 199.1 L989.6 200.1 L985.4 201.1 L981 202.1 L976.6 203.1 L972.1 204.1 L967.6 205 L962.9 205.9 L958.3 206.8 L953.5 207.7 L948.7 208.5 L943.9 209.4 L939 210.2 L934 211 L929 211.7 L923.9 212.5 L918.8 213.2 L913.6 213.9 L908.4 214.5 L903.1 215.2 L897.8 215.8 L892.5 216.4 L887.1 217 L881.6 217.5 L876.2 218.1 L870.7 218.6 L865.1 219 L859.6 219.5 L854 219.9 L848.4 220.3 L842.7 220.7 L837 221 L831.3 221.3 L825.6 221.6 L819.9 221.9 L814.1 222.1 L808.3 222.4 L802.5 222.5 L796.7 222.7 L790.9 222.8 L785.1 223 L779.3 223 L773.5 223.1 L767.6 223.1 L761.8 223.1 L756 223.1 L750.2 223.1 L744.3 223 L738.5 222.9 L732.7 222.7 L726.9 222.6 L721.2 222.4 L715.4 222.2 L709.6 222 L703.9 221.7 L698.2 221.4 L692.5 221.1 L686.8 220.8 L681.2 220.4 L675.6 220 L670 219.6 L664.5 219.1 L658.9 218.7 L653.4 218.2 L648 217.7 L642.6 217.1 L637.2 216.6 L631.9 216 L626.6 215.3 L621.3 214.7 L616.2 214 L611 213.4 L605.9 212.6 L600.9 211.9 L595.9 211.2 L590.9 210.4 L586 209.6 L581.2 208.7 L576.4 207.9 L571.7 207 L567.1 206.1 L562.5 205.2 L558 204.3 L553.5 203.4 L549.1 202.4 L544.8 201.4 L540.6 200.4 L536.4 199.4 L532.3 198.3 L528.3 197.2 L524.3 196.2 L520.5 195.1 L516.7 193.9 L512.9 192.8 L509.3 191.6 L505.7 190.5 L502.3 189.3 L498.9 188.1 L495.6 186.9 L492.4 185.6 L489.2 184.4 L486.2 183.1 L483.2 181.9 L480.3 180.6 L477.6 179.3 L474.9 178 L472.3 176.7 L469.8 175.3 L467.3 174 L465 172.6 L462.8 171.3 L460.7 169.9 L458.6 168.5 L456.7 167.1 L454.8 165.7 L453.1 164.3 L451.4 162.9 L449.9 161.5 L448.4 160 L447.1 158.6 L445.8 157.2 L444.6 155.7 L443.6 154.3 L442.6 152.8 L441.8 151.4 L441 149.9 L440.3 148.4 L439.8 147 L439.3 145.5 L439 144 L438.7 142.5 L438.6 141.1 L438.5 139.6 L438.5 138.1 L438.7 136.7 L438.9 135.2 L439.3 133.7 L439.7 132.2 L440.3 130.8 L440.9 129.3 L441.6 127.9 L442.5 126.4 L443.4 125 L444.5 123.5 L445.6 122.1 L446.8 120.6 L448.2 119.2 L449.6 117.8 L451.1 116.4 L452.7 115 L454.4 113.6 L456.2 112.2 L458.1 110.8 L460.1 109.4 L462.2 108 L464.4 106.7 L466.6 105.3 L469 104 L471.4 102.7 L474 101.4 L476.6 100.1 L479.3 98.8 L482.1 97.5 L485 96.2 L487.9 95 L491 93.7 L494.1 92.5 L497.3 91.3 L500.6 90.1 L504 88.9 L507.4 87.8 L510.9 86.6 L514.5 85.5 L518.2 84.4 L521.9 83.3 L525.7 82.2 L529.6 81.1 L533.6 80.1 L537.6 79 L541.7 78 L545.9 77 L550.1 76 L554.4 75.1 L558.7 74.1 L563.2 73.2 L567.6 72.3 L572.2 71.5 L576.8 70.6 L581.4 69.8 L586.1 68.9 L590.8 68.1 L595.6 67.4 L600.5 66.6 L605.4 65.9 L610.3 65.2 L615.3 64.5 L620.4 63.8 L625.5 63.2 L630.6 62.6 L635.7 62 L640.9 61.4 L646.2 60.8 L651.5 60.3 L656.8 59.8 L662.1 59.3 L667.5 58.9 L672.9 58.4 L678.3 58 L683.7 57.6 L689.2 57.3 L694.7 56.9 L700.2 56.6 L705.8 56.3 L711.3 56.1 L716.9 55.8 L722.5 55.6 L728.1 55.4 L733.7 55.3 L739.3 55.1 L744.9 55 L750.5 54.9 L756.2 54.9 L761.8 54.8 L767.4 54.8 L773.1 54.8 L778.7 54.8 L784.4 54.9 L790 55 L795.6 55.1 L801.2 55.2 L806.8 55.4 L812.4 55.6 L818 55.8 L823.6 56 L829.1 56.3 L834.6 56.6 L840.1 56.9 L845.6 57.2 L851.1 57.5 L856.5 57.9 L861.9 58.3 L867.3 58.8 L872.7 59.2 L878 59.7 L883.3 60.2 L888.5 60.7 L893.7 61.2 L898.9 61.8 L904.1 62.4 L909.2 63 L914.2 63.7 L919.2 64.3 L924.2 65 L929.1 65.7 L934 66.4 L938.9 67.2 L943.6 67.9 L948.4 68.7 L953 69.5 L957.6 70.4 L962.2 71.2 L966.7 72.1 L971.2 73 L975.5 73.9 L979.9 74.8 L984.1 75.8 L988.3 76.8 L992.4 77.8 L996.5 78.8 L1000.5 79.8 L1004.4 80.8 L1008.3 81.9 L1012.1 83 L1015.8 84.1 L1019.4 85.2 L1023 86.3 L1026.5 87.5 L1029.9 88.6 L1033.2 89.8 L1036.4 91 L1039.6 92.2 L1042.7 93.4 L1045.7 94.6 L1048.6 95.9 L1051.5 97.2 L1054.2 98.4 L1056.9 99.7 L1059.4 101 L1061.9 102.3 L1064.3 103.7Z" fill="#3cc400"/>
<path d="M1059 104.3 L1061.3 105.6 L1063.5 106.9 L1065.5 108.2 L1067.5 109.6 L1069.5 110.9 L1071.3 112.3 L1073 113.6 L1074.6 115 L1076.2 116.4 L1077.6 117.8 L1079 119.2 L1080.2 120.6 L1081.4 122 L1082.5 123.4 L1083.4 124.8 L1084.3 126.2 L1085.1 127.7 L1085.8 129.1 L1086.3 130.5 L1086.8 132 L1087.2 133.4 L1087.5 134.9 L1087.7 136.3 L1087.8 137.8 L1087.8 139.2 L1087.7 140.6 L1087.5 142.1 L1087.2 143.5 L1086.8 145 L1086.3 146.4 L1085.7 147.9 L1085 149.3 L1084.2 150.7 L1083.3 152.2 L1082.3 153.6 L1081.2 155 L1080 156.5 L1078.8 157.9 L1077.4 159.3 L1075.9 160.7 L1074.3 162.1 L1072.7 163.5 L1070.9 164.9 L1069 166.2 L1067.1 167.6 L1065 169 L1062.9 170.3 L1060.7 171.7 L1058.3 173 L1055.9 174.3 L1053.4 175.6 L1050.8 176.9 L1048.1 178.2 L1045.4 179.5 L1042.5 180.8 L1039.5 182 L1036.5 183.2 L1033.4 184.5 L1030.2 185.7 L1026.9 186.9 L1023.5 188.1 L1020.1 189.2 L1016.6 190.4 L1012.9 191.5 L1009.3 192.6 L1005.5 193.7 L1001.7 194.8 L997.7 195.9 L993.7 196.9 L989.7 198 L985.6 199 L981.4 200 L977.1 201 L972.7 201.9 L968.3 202.9 L963.9 203.8 L959.4 204.7 L954.8 205.5 L950.1 206.4 L945.4 207.2 L940.6 208.1 L935.8 208.8 L930.9 209.6 L926 210.4 L921 211.1 L916 211.8 L910.9 212.5 L905.8 213.1 L900.6 213.8 L895.4 214.4 L890.2 215 L884.9 215.5 L879.5 216.1 L874.2 216.6 L868.8 217.1 L863.3 217.5 L857.9 218 L852.4 218.4 L846.8 218.8 L841.3 219.2 L835.7 219.5 L830.1 219.8 L824.5 220.1 L818.9 220.4 L813.2 220.6 L807.6 220.8 L801.9 221 L796.2 221.2 L790.5 221.3 L784.8 221.4 L779.1 221.5 L773.3 221.5 L767.6 221.6 L761.9 221.6 L756.2 221.5 L750.5 221.5 L744.7 221.4 L739 221.3 L733.3 221.2 L727.7 221 L722 220.9 L716.3 220.6 L710.7 220.4 L705 220.2 L699.4 219.9 L693.9 219.6 L688.3 219.2 L682.8 218.9 L677.2 218.5 L671.8 218.1 L666.3 217.6 L660.9 217.2 L655.5 216.7 L650.2 216.2 L644.8 215.7 L639.6 215.1 L634.3 214.5 L629.1 213.9 L624 213.3 L618.9 212.6 L613.8 212 L608.8 211.3 L603.9 210.6 L599 209.8 L594.1 209 L589.3 208.3 L584.6 207.4 L579.9 206.6 L575.3 205.8 L570.7 204.9 L566.2 204 L561.8 203.1 L557.4 202.2 L553.1 201.2 L548.9 200.2 L544.7 199.2 L540.6 198.2 L536.6 197.2 L532.6 196.2 L528.7 195.1 L524.9 194 L521.2 192.9 L517.5 191.8 L514 190.7 L510.5 189.5 L507.1 188.4 L503.7 187.2 L500.5 186 L497.3 184.8 L494.2 183.6 L491.3 182.3 L488.3 181.1 L485.5 179.8 L482.8 178.5 L480.1 177.2 L477.6 176 L475.1 174.6 L472.8 173.3 L470.5 172 L468.3 170.7 L466.2 169.3 L464.2 167.9 L462.3 166.6 L460.5 165.2 L458.7 163.8 L457.1 162.4 L455.6 161 L454.2 159.6 L452.8 158.2 L451.6 156.8 L450.5 155.4 L449.4 154 L448.5 152.5 L447.6 151.1 L446.9 149.7 L446.2 148.2 L445.7 146.8 L445.2 145.3 L444.9 143.9 L444.6 142.5 L444.5 141 L444.4 139.6 L444.4 138.1 L444.6 136.7 L444.8 135.2 L445.2 133.8 L445.6 132.3 L446.1 130.9 L446.7 129.5 L447.5 128 L448.3 126.6 L449.2 125.2 L450.2 123.8 L451.3 122.3 L452.6 120.9 L453.9 119.5 L455.3 118.1 L456.7 116.7 L458.3 115.4 L460 114 L461.8 112.6 L463.6 111.3 L465.6 109.9 L467.6 108.6 L469.8 107.2 L472 105.9 L474.3 104.6 L476.7 103.3 L479.2 102 L481.8 100.7 L484.4 99.5 L487.2 98.2 L490 97 L492.9 95.7 L495.9 94.5 L498.9 93.3 L502.1 92.1 L505.3 90.9 L508.6 89.8 L512 88.6 L515.5 87.5 L519 86.4 L522.6 85.3 L526.3 84.2 L530 83.2 L533.8 82.1 L537.7 81.1 L541.7 80.1 L545.7 79.1 L549.8 78.1 L553.9 77.1 L558.2 76.2 L562.4 75.3 L566.8 74.4 L571.2 73.5 L575.6 72.6 L580.1 71.8 L584.7 71 L589.3 70.2 L594 69.4 L598.7 68.6 L603.4 67.9 L608.3 67.2 L613.1 66.5 L618 65.8 L623 65.1 L628 64.5 L633 63.9 L638.1 63.3 L643.2 62.7 L648.3 62.2 L653.5 61.7 L658.7 61.2 L663.9 60.7 L669.2 60.3 L674.5 59.8 L679.8 59.4 L685.2 59.1 L690.6 58.7 L696 58.4 L701.4 58.1 L706.8 57.8 L712.3 57.5 L717.7 57.3 L723.2 57.1 L728.7 56.9 L734.2 56.7 L739.8 56.6 L745.3 56.5 L750.8 56.4 L756.3 56.3 L761.9 56.3 L767.4 56.3 L773 56.3 L778.5 56.3 L784 56.4 L789.6 56.4 L795.1 56.6 L800.6 56.7 L806.1 56.8 L811.6 57 L817.1 57.2 L822.5 57.5 L828 57.7 L833.4 58 L838.8 58.3 L844.2 58.6 L849.6 59 L854.9 59.3 L860.2 59.7 L865.5 60.2 L870.8 60.6 L876 61.1 L881.2 61.5 L886.4 62.1 L891.5 62.6 L896.6 63.2 L901.6 63.7 L906.6 64.3 L911.6 65 L916.5 65.6 L921.4 66.3 L926.3 67 L931 67.7 L935.8 68.4 L940.5 69.2 L945.1 70 L949.7 70.8 L954.2 71.6 L958.7 72.4 L963.1 73.3 L967.5 74.1 L971.8 75 L976.1 76 L980.2 76.9 L984.4 77.8 L988.4 78.8 L992.4 79.8 L996.3 80.8 L1000.2 81.8 L1004 82.9 L1007.7 83.9 L1011.3 85 L1014.9 86.1 L1018.4 87.2 L1021.8 88.3 L1025.2 89.5 L1028.4 90.6 L1031.6 91.8 L1034.7 93 L1037.8 94.2 L1040.7 95.4 L1043.6 96.6 L1046.4 97.9 L1049.1 99.1 L1051.7 100.4 L1054.2 101.7 L1056.6 103 L1059 104.3Z" fill="none" stroke="#48d000" stroke-width="3" opacity=".6"/>
<path d="M1053.9 104.8 L1056.1 106.1 L1058.3 107.4 L1060.3 108.7 L1062.3 110 L1064.2 111.4 L1066 112.7 L1067.6 114 L1069.3 115.4 L1070.8 116.8 L1072.2 118.1 L1073.5 119.5 L1074.7 120.9 L1075.9 122.3 L1076.9 123.6 L1077.9 125 L1078.7 126.4 L1079.5 127.8 L1080.2 129.3 L1080.7 130.7 L1081.2 132.1 L1081.6 133.5 L1081.9 134.9 L1082.1 136.3 L1082.2 137.7 L1082.2 139.2 L1082 140.6 L1081.8 142 L1081.5 143.4 L1081.2 144.9 L1080.7 146.3 L1080.1 147.7 L1079.4 149.1 L1078.6 150.5 L1077.7 151.9 L1076.8 153.3 L1075.7 154.7 L1074.5 156.1 L1073.3 157.5 L1071.9 158.9 L1070.4 160.3 L1068.9 161.7 L1067.3 163 L1065.5 164.4 L1063.7 165.7 L1061.8 167.1 L1059.8 168.4 L1057.7 169.7 L1055.5 171.1 L1053.2 172.4 L1050.8 173.7 L1048.3 175 L1045.8 176.2 L1043.2 177.5 L1040.4 178.7 L1037.6 180 L1034.7 181.2 L1031.7 182.4 L1028.7 183.6 L1025.5 184.8 L1022.3 186 L1019 187.2 L1015.6 188.3 L1012.1 189.4 L1008.6 190.6 L1005 191.7 L1001.3 192.7 L997.5 193.8 L993.6 194.9 L989.7 195.9 L985.7 196.9 L981.7 197.9 L977.5 198.9 L973.3 199.8 L969.1 200.8 L964.8 201.7 L960.4 202.6 L955.9 203.5 L951.4 204.3 L946.8 205.2 L942.2 206 L937.5 206.8 L932.8 207.6 L928 208.3 L923.2 209.1 L918.3 209.8 L913.3 210.5 L908.3 211.1 L903.3 211.8 L898.2 212.4 L893.1 213 L888 213.6 L882.8 214.1 L877.5 214.7 L872.2 215.2 L866.9 215.7 L861.6 216.1 L856.2 216.5 L850.8 217 L845.4 217.3 L840 217.7 L834.5 218 L829 218.3 L823.5 218.6 L817.9 218.9 L812.4 219.1 L806.8 219.3 L801.2 219.5 L795.7 219.7 L790.1 219.8 L784.4 219.9 L778.8 220 L773.2 220 L767.6 220.1 L762 220.1 L756.4 220 L750.7 220 L745.1 219.9 L739.5 219.8 L733.9 219.7 L728.3 219.5 L722.8 219.4 L717.2 219.2 L711.7 218.9 L706.1 218.7 L700.6 218.4 L695.1 218.1 L689.7 217.8 L684.2 217.4 L678.8 217.1 L673.4 216.7 L668.1 216.2 L662.8 215.8 L657.5 215.3 L652.2 214.8 L647 214.3 L641.8 213.7 L636.7 213.2 L631.6 212.6 L626.5 211.9 L621.5 211.3 L616.5 210.6 L611.6 210 L606.8 209.3 L601.9 208.5 L597.2 207.8 L592.5 207 L587.8 206.2 L583.2 205.4 L578.7 204.6 L574.2 203.7 L569.8 202.8 L565.4 201.9 L561.1 201 L556.9 200.1 L552.7 199.1 L548.6 198.1 L544.6 197.2 L540.6 196.1 L536.7 195.1 L532.9 194.1 L529.2 193 L525.5 191.9 L521.9 190.8 L518.4 189.7 L515 188.6 L511.7 187.5 L508.4 186.3 L505.2 185.1 L502.1 183.9 L499.1 182.7 L496.1 181.5 L493.3 180.3 L490.5 179.1 L487.8 177.8 L485.2 176.5 L482.7 175.3 L480.3 174 L477.9 172.7 L475.7 171.4 L473.5 170.1 L471.5 168.7 L469.5 167.4 L467.6 166.1 L465.8 164.7 L464.2 163.4 L462.6 162 L461.1 160.6 L459.7 159.2 L458.3 157.9 L457.1 156.5 L456 155.1 L455 153.7 L454 152.3 L453.2 150.9 L452.5 149.5 L451.8 148 L451.3 146.6 L450.9 145.2 L450.5 143.8 L450.2 142.4 L450.1 141 L450 139.5 L450.1 138.1 L450.2 136.7 L450.4 135.3 L450.8 133.9 L451.2 132.4 L451.7 131 L452.3 129.6 L453 128.2 L453.9 126.8 L454.8 125.4 L455.8 124 L456.8 122.6 L458 121.2 L459.3 119.8 L460.7 118.5 L462.1 117.1 L463.7 115.7 L465.3 114.4 L467.1 113 L468.9 111.7 L470.8 110.4 L472.8 109.1 L474.9 107.8 L477.1 106.5 L479.4 105.2 L481.7 103.9 L484.2 102.6 L486.7 101.4 L489.3 100.1 L492 98.9 L494.8 97.7 L497.6 96.5 L500.6 95.3 L503.6 94.1 L506.7 92.9 L509.9 91.8 L513.1 90.6 L516.4 89.5 L519.8 88.4 L523.3 87.3 L526.8 86.2 L530.4 85.1 L534.1 84.1 L537.9 83.1 L541.7 82.1 L545.6 81.1 L549.5 80.1 L553.5 79.1 L557.6 78.2 L561.8 77.3 L566 76.4 L570.2 75.5 L574.5 74.6 L578.9 73.8 L583.3 72.9 L587.8 72.1 L592.3 71.3 L596.9 70.6 L601.6 69.8 L606.3 69.1 L611 68.4 L615.8 67.7 L620.6 67 L625.4 66.4 L630.3 65.8 L635.3 65.2 L640.3 64.6 L645.3 64 L650.3 63.5 L655.4 63 L660.6 62.5 L665.7 62 L670.9 61.6 L676.1 61.2 L681.3 60.8 L686.6 60.4 L691.9 60.1 L697.2 59.7 L702.5 59.4 L707.8 59.2 L713.2 58.9 L718.6 58.7 L724 58.5 L729.4 58.3 L734.8 58.1 L740.2 58 L745.6 57.9 L751.1 57.8 L756.5 57.7 L762 57.7 L767.4 57.7 L772.8 57.7 L778.3 57.7 L783.7 57.8 L789.2 57.8 L794.6 58 L800 58.1 L805.4 58.2 L810.8 58.4 L816.2 58.6 L821.6 58.8 L826.9 59.1 L832.2 59.4 L837.6 59.7 L842.9 60 L848.1 60.3 L853.4 60.7 L858.6 61.1 L863.8 61.5 L869 61.9 L874.1 62.4 L879.2 62.9 L884.3 63.4 L889.3 63.9 L894.3 64.4 L899.3 65 L904.2 65.6 L909.1 66.2 L913.9 66.9 L918.7 67.5 L923.5 68.2 L928.2 68.9 L932.9 69.6 L937.5 70.4 L942 71.1 L946.5 71.9 L951 72.7 L955.4 73.5 L959.7 74.4 L964 75.2 L968.3 76.1 L972.4 77 L976.5 77.9 L980.6 78.9 L984.6 79.8 L988.5 80.8 L992.3 81.8 L996.1 82.8 L999.8 83.8 L1003.5 84.9 L1007.1 85.9 L1010.6 87 L1014 88.1 L1017.4 89.2 L1020.7 90.3 L1023.9 91.5 L1027 92.6 L1030.1 93.8 L1033 95 L1035.9 96.1 L1038.7 97.3 L1041.5 98.6 L1044.1 99.8 L1046.7 101 L1049.2 102.3 L1051.6 103.6 L1053.9 104.8Z" fill="#2d9a00"/>
<path d="M1053.1 104.9 L1055.3 106.2 L1057.4 107.5 L1059.5 108.8 L1061.4 110.1 L1063.3 111.4 L1065.1 112.8 L1066.8 114.1 L1068.4 115.5 L1069.9 116.8 L1071.3 118.2 L1072.6 119.5 L1073.9 120.9 L1075 122.3 L1076 123.7 L1077 125.1 L1077.8 126.5 L1078.6 127.9 L1079.3 129.3 L1079.8 130.7 L1080.3 132.1 L1080.7 133.5 L1081 134.9 L1081.2 136.3 L1081.2 137.7 L1081.2 139.2 L1081.1 140.6 L1080.9 142 L1080.6 143.4 L1080.2 144.8 L1079.7 146.2 L1079.2 147.7 L1078.5 149.1 L1077.7 150.5 L1076.8 151.9 L1075.8 153.3 L1074.8 154.7 L1073.6 156.1 L1072.4 157.5 L1071 158.8 L1069.6 160.2 L1068 161.6 L1066.4 162.9 L1064.6 164.3 L1062.8 165.7 L1060.9 167 L1058.9 168.3 L1056.8 169.6 L1054.6 171 L1052.3 172.3 L1050 173.6 L1047.5 174.8 L1045 176.1 L1042.3 177.4 L1039.6 178.6 L1036.8 179.9 L1033.9 181.1 L1031 182.3 L1027.9 183.5 L1024.8 184.7 L1021.5 185.9 L1018.2 187 L1014.9 188.2 L1011.4 189.3 L1007.9 190.4 L1004.3 191.5 L1000.6 192.6 L996.8 193.6 L993 194.7 L989.1 195.7 L985.1 196.7 L981 197.7 L976.9 198.7 L972.7 199.7 L968.5 200.6 L964.2 201.5 L959.8 202.4 L955.4 203.3 L950.9 204.1 L946.3 205 L941.7 205.8 L937 206.6 L932.3 207.4 L927.5 208.1 L922.7 208.9 L917.8 209.6 L912.9 210.3 L907.9 210.9 L902.9 211.6 L897.8 212.2 L892.7 212.8 L887.6 213.4 L882.4 213.9 L877.2 214.4 L871.9 214.9 L866.6 215.4 L861.3 215.9 L856 216.3 L850.6 216.7 L845.2 217.1 L839.7 217.5 L834.3 217.8 L828.8 218.1 L823.3 218.4 L817.8 218.6 L812.3 218.9 L806.7 219.1 L801.1 219.3 L795.6 219.4 L790 219.6 L784.4 219.7 L778.8 219.7 L773.2 219.8 L767.6 219.8 L762 219.8 L756.4 219.8 L750.8 219.8 L745.2 219.7 L739.6 219.6 L734 219.5 L728.4 219.3 L722.9 219.1 L717.3 218.9 L711.8 218.7 L706.3 218.5 L700.8 218.2 L695.3 217.9 L689.9 217.5 L684.5 217.2 L679.1 216.8 L673.7 216.4 L668.4 216 L663.1 215.5 L657.8 215.1 L652.6 214.6 L647.3 214.1 L642.2 213.5 L637.1 212.9 L632 212.3 L626.9 211.7 L621.9 211.1 L617 210.4 L612.1 209.7 L607.2 209 L602.4 208.3 L597.7 207.6 L593 206.8 L588.3 206 L583.7 205.2 L579.2 204.4 L574.7 203.5 L570.3 202.6 L566 201.7 L561.7 200.8 L557.5 199.9 L553.3 198.9 L549.3 198 L545.2 197 L541.3 196 L537.4 194.9 L533.6 193.9 L529.9 192.8 L526.2 191.8 L522.7 190.7 L519.2 189.6 L515.7 188.4 L512.4 187.3 L509.1 186.2 L506 185 L502.9 183.8 L499.8 182.6 L496.9 181.4 L494 180.2 L491.3 178.9 L488.6 177.7 L486 176.4 L483.5 175.2 L481.1 173.9 L478.8 172.6 L476.5 171.3 L474.4 170 L472.3 168.7 L470.4 167.3 L468.5 166 L466.7 164.6 L465 163.3 L463.4 161.9 L461.9 160.6 L460.5 159.2 L459.2 157.8 L458 156.4 L456.9 155 L455.9 153.6 L455 152.2 L454.1 150.8 L453.4 149.4 L452.8 148 L452.2 146.6 L451.8 145.2 L451.4 143.8 L451.2 142.4 L451 140.9 L451 139.5 L451 138.1 L451.1 136.7 L451.4 135.3 L451.7 133.9 L452.1 132.4 L452.6 131 L453.2 129.6 L454 128.2 L454.8 126.8 L455.7 125.4 L456.7 124 L457.7 122.7 L458.9 121.3 L460.2 119.9 L461.6 118.5 L463 117.2 L464.6 115.8 L466.2 114.5 L467.9 113.1 L469.8 111.8 L471.7 110.5 L473.7 109.1 L475.8 107.8 L477.9 106.5 L480.2 105.3 L482.6 104 L485 102.7 L487.5 101.5 L490.1 100.2 L492.8 99 L495.6 97.8 L498.4 96.6 L501.3 95.4 L504.3 94.2 L507.4 93 L510.6 91.9 L513.8 90.8 L517.1 89.6 L520.5 88.5 L524 87.4 L527.5 86.4 L531.1 85.3 L534.8 84.3 L538.5 83.2 L542.3 82.2 L546.2 81.2 L550.1 80.2 L554.1 79.3 L558.2 78.4 L562.3 77.4 L566.5 76.5 L570.8 75.6 L575.1 74.8 L579.4 73.9 L583.9 73.1 L588.3 72.3 L592.8 71.5 L597.4 70.7 L602 70 L606.7 69.3 L611.4 68.6 L616.2 67.9 L621 67.2 L625.8 66.6 L630.7 66 L635.7 65.4 L640.6 64.8 L645.6 64.2 L650.7 63.7 L655.7 63.2 L660.9 62.7 L666 62.3 L671.2 61.8 L676.4 61.4 L681.6 61 L686.8 60.6 L692.1 60.3 L697.4 60 L702.7 59.7 L708 59.4 L713.4 59.1 L718.7 58.9 L724.1 58.7 L729.5 58.5 L734.9 58.3 L740.3 58.2 L745.7 58.1 L751.1 58 L756.5 58 L762 57.9 L767.4 57.9 L772.8 57.9 L778.3 57.9 L783.7 58 L789.1 58.1 L794.5 58.2 L799.9 58.3 L805.3 58.5 L810.7 58.6 L816 58.8 L821.4 59.1 L826.7 59.3 L832.1 59.6 L837.4 59.9 L842.6 60.2 L847.9 60.5 L853.1 60.9 L858.3 61.3 L863.5 61.7 L868.7 62.1 L873.8 62.6 L878.9 63.1 L883.9 63.6 L889 64.1 L893.9 64.7 L898.9 65.2 L903.8 65.8 L908.7 66.4 L913.5 67.1 L918.3 67.7 L923 68.4 L927.7 69.1 L932.4 69.8 L937 70.6 L941.5 71.3 L946 72.1 L950.5 72.9 L954.8 73.7 L959.2 74.6 L963.5 75.4 L967.7 76.3 L971.8 77.2 L975.9 78.1 L980 79 L983.9 80 L987.8 81 L991.7 82 L995.5 83 L999.2 84 L1002.8 85 L1006.4 86.1 L1009.9 87.2 L1013.3 88.2 L1016.7 89.3 L1019.9 90.5 L1023.1 91.6 L1026.3 92.7 L1029.3 93.9 L1032.3 95.1 L1035.2 96.3 L1038 97.5 L1040.7 98.7 L1043.3 99.9 L1045.9 101.1 L1048.4 102.4 L1050.8 103.7 L1053.1 104.9Z" fill="#b4c800"/>
<path d="M1049.5 105.3 L1051.7 106.6 L1053.8 107.9 L1055.8 109.2 L1057.8 110.5 L1059.6 111.8 L1061.4 113.1 L1063 114.4 L1064.6 115.7 L1066.1 117.1 L1067.5 118.4 L1068.8 119.8 L1070 121.1 L1071.1 122.5 L1072.2 123.9 L1073.1 125.2 L1074 126.6 L1074.7 128 L1075.4 129.4 L1075.9 130.8 L1076.4 132.2 L1076.8 133.6 L1077 134.9 L1077.2 136.3 L1077.3 137.7 L1077.3 139.1 L1077.2 140.5 L1077 141.9 L1076.7 143.3 L1076.3 144.7 L1075.8 146.1 L1075.2 147.5 L1074.6 148.9 L1073.8 150.3 L1072.9 151.7 L1072 153.1 L1070.9 154.5 L1069.8 155.8 L1068.5 157.2 L1067.2 158.6 L1065.8 159.9 L1064.2 161.3 L1062.6 162.6 L1060.9 164 L1059.1 165.3 L1057.2 166.6 L1055.2 167.9 L1053.2 169.2 L1051 170.5 L1048.7 171.8 L1046.4 173.1 L1044 174.4 L1041.5 175.6 L1038.9 176.9 L1036.2 178.1 L1033.4 179.3 L1030.6 180.5 L1027.6 181.7 L1024.6 182.9 L1021.5 184.1 L1018.3 185.3 L1015.1 186.4 L1011.7 187.5 L1008.3 188.6 L1004.8 189.7 L1001.2 190.8 L997.6 191.9 L993.9 192.9 L990.1 194 L986.2 195 L982.3 196 L978.3 197 L974.3 197.9 L970.1 198.9 L965.9 199.8 L961.7 200.7 L957.4 201.6 L953 202.5 L948.5 203.3 L944 204.1 L939.5 204.9 L934.9 205.7 L930.2 206.5 L925.5 207.2 L920.7 208 L915.9 208.7 L911 209.3 L906.1 210 L901.2 210.6 L896.2 211.3 L891.1 211.8 L886.1 212.4 L880.9 213 L875.8 213.5 L870.6 214 L865.4 214.4 L860.1 214.9 L854.8 215.3 L849.5 215.7 L844.2 216.1 L838.8 216.5 L833.4 216.8 L828 217.1 L822.6 217.4 L817.1 217.6 L811.7 217.8 L806.2 218.1 L800.7 218.2 L795.2 218.4 L789.7 218.5 L784.2 218.6 L778.6 218.7 L773.1 218.8 L767.6 218.8 L762 218.8 L756.5 218.8 L751 218.7 L745.5 218.6 L739.9 218.5 L734.4 218.4 L728.9 218.3 L723.4 218.1 L718 217.9 L712.5 217.7 L707.1 217.4 L701.6 217.2 L696.2 216.9 L690.9 216.5 L685.5 216.2 L680.2 215.8 L674.9 215.4 L669.6 215 L664.4 214.6 L659.2 214.1 L654 213.6 L648.9 213.1 L643.8 212.5 L638.7 212 L633.7 211.4 L628.7 210.8 L623.8 210.2 L618.9 209.5 L614 208.8 L609.2 208.1 L604.5 207.4 L599.8 206.7 L595.2 205.9 L590.6 205.1 L586 204.3 L581.6 203.5 L577.2 202.7 L572.8 201.8 L568.5 200.9 L564.3 200 L560.1 199.1 L556 198.2 L552 197.2 L548 196.2 L544.1 195.2 L540.3 194.2 L536.6 193.2 L532.9 192.1 L529.3 191.1 L525.7 190 L522.3 188.9 L518.9 187.8 L515.6 186.7 L512.4 185.5 L509.2 184.4 L506.2 183.2 L503.2 182 L500.3 180.8 L497.5 179.6 L494.7 178.4 L492.1 177.2 L489.5 175.9 L487.1 174.7 L484.7 173.4 L482.4 172.2 L480.2 170.9 L478.1 169.6 L476 168.3 L474.1 167 L472.2 165.6 L470.5 164.3 L468.8 163 L467.2 161.6 L465.8 160.3 L464.4 158.9 L463.1 157.6 L461.9 156.2 L460.8 154.8 L459.8 153.4 L458.8 152.1 L458 150.7 L457.3 149.3 L456.7 147.9 L456.1 146.5 L455.7 145.1 L455.3 143.7 L455.1 142.3 L454.9 140.9 L454.9 139.5 L454.9 138.1 L455.1 136.7 L455.3 135.3 L455.6 133.9 L456 132.5 L456.5 131.1 L457.1 129.7 L457.8 128.3 L458.6 127 L459.5 125.6 L460.5 124.2 L461.6 122.8 L462.7 121.5 L464 120.1 L465.3 118.8 L466.8 117.4 L468.3 116.1 L469.9 114.7 L471.7 113.4 L473.4 112.1 L475.3 110.8 L477.3 109.5 L479.4 108.2 L481.5 106.9 L483.8 105.7 L486.1 104.4 L488.5 103.2 L491 101.9 L493.5 100.7 L496.2 99.5 L498.9 98.3 L501.7 97.1 L504.6 95.9 L507.6 94.7 L510.6 93.6 L513.7 92.5 L516.9 91.3 L520.2 90.2 L523.6 89.1 L527 88.1 L530.5 87 L534 85.9 L537.6 84.9 L541.3 83.9 L545.1 82.9 L548.9 81.9 L552.8 81 L556.8 80 L560.8 79.1 L564.9 78.2 L569 77.3 L573.2 76.4 L577.4 75.6 L581.7 74.7 L586.1 73.9 L590.5 73.1 L595 72.3 L599.5 71.6 L604.1 70.8 L608.7 70.1 L613.3 69.4 L618 68.7 L622.8 68.1 L627.6 67.5 L632.4 66.8 L637.3 66.3 L642.2 65.7 L647.1 65.1 L652.1 64.6 L657.1 64.1 L662.1 63.6 L667.2 63.2 L672.3 62.7 L677.5 62.3 L682.6 61.9 L687.8 61.6 L693 61.2 L698.2 60.9 L703.5 60.6 L708.7 60.3 L714 60.1 L719.3 59.9 L724.6 59.7 L729.9 59.5 L735.3 59.3 L740.6 59.2 L745.9 59.1 L751.3 59 L756.7 58.9 L762 58.9 L767.4 58.9 L772.7 58.9 L778.1 58.9 L783.5 59 L788.8 59.1 L794.2 59.2 L799.5 59.3 L804.8 59.4 L810.1 59.6 L815.4 59.8 L820.7 60 L826 60.3 L831.2 60.5 L836.5 60.8 L841.7 61.1 L846.9 61.5 L852.1 61.8 L857.2 62.2 L862.3 62.6 L867.4 63.1 L872.5 63.5 L877.5 64 L882.5 64.5 L887.5 65 L892.4 65.5 L897.3 66.1 L902.1 66.7 L906.9 67.3 L911.7 67.9 L916.4 68.6 L921.1 69.2 L925.7 69.9 L930.3 70.6 L934.9 71.4 L939.4 72.1 L943.8 72.9 L948.2 73.7 L952.5 74.5 L956.8 75.3 L961 76.2 L965.2 77.1 L969.3 77.9 L973.3 78.8 L977.3 79.8 L981.3 80.7 L985.1 81.7 L988.9 82.6 L992.6 83.6 L996.3 84.6 L999.9 85.7 L1003.4 86.7 L1006.9 87.8 L1010.2 88.8 L1013.6 89.9 L1016.8 91 L1020 92.2 L1023 93.3 L1026 94.4 L1029 95.6 L1031.8 96.8 L1034.6 98 L1037.3 99.2 L1039.9 100.4 L1042.4 101.6 L1044.9 102.8 L1047.2 104.1 L1049.5 105.3Z" fill="none" stroke="#ccd810" stroke-width="2" opacity=".6"/>
<path d="M484 169.7 L483.8 169.5 L483.6 169.3 L483.4 169.2 L483.2 169 L483 168.8 L482.8 168.7 L482.6 168.5 L482.4 168.3 L482.2 168.2 L482 168 L481.8 167.8 L481.6 167.7 L481.4 167.5 L481.2 167.4 L481 167.2 L480.9 167 L480.7 166.9 L480.5 166.7 L480.3 166.5 L480.1 166.4 L480 166.2 L479.8 166 L479.6 165.9 L479.4 165.7 L479.3 165.5 L479.1 165.4 L478.9 165.2 L478.8 165 L478.6 164.9 L478.4 164.7 L478.3 164.5 L478.1 164.4 L478 164.2 L477.8 164 L477.7 163.9 L477.5 163.7 L477.4 163.5 L477.2 163.4 L477.1 163.2 L476.9 163 L476.8 162.8 L476.6 162.7 L476.5 162.5 L476.3 162.3 L473.7 162.4 L473.5 162.2 L473.4 162.1 L473.3 161.9 L473.1 161.7 L473 161.5 L472.8 161.4 L472.7 161.2 L472.6 161 L472.5 160.9 L472.3 160.7 L472.2 160.5 L472.1 160.4 L472 160.2 L471.8 160 L471.7 159.9 L471.6 159.7 L471.5 159.5 L471.4 159.3 L471.3 159.2 L471.1 159 L471 158.8 L470.9 158.7 L470.8 158.5 L470.7 158.3 L470.6 158.2 L470.5 158 L470.4 157.8 L470.3 157.6 L470.2 157.5 L470.1 157.3 L470 157.1 L469.9 157 L469.8 156.8 L469.7 156.6 L469.6 156.5 L469.5 156.3 L469.5 156.1 L469.4 155.9 L469.3 155.8 L469.2 155.6 L469.1 155.4 L469 155.3 L469 155.1 L468.9 154.9 L466.2 154.9 L466.2 154.7 L466.1 154.6 L466 154.4 L465.9 154.2 L465.9 154 L465.8 153.9 L465.7 153.7 L465.7 153.5 L465.6 153.4 L465.5 153.2 L465.5 153 L465.4 152.8 L465.4 152.7 L465.3 152.5 L465.3 152.3 L465.2 152.2 L465.2 152 L465.1 151.8 L465.1 151.6 L465 151.5 L465 151.3 L464.9 151.1 L464.9 151 L464.8 150.8 L464.8 150.6 L464.8 150.4 L464.7 150.3 L464.7 150.1 L464.7 149.9 L464.6 149.7 L464.6 149.6 L464.6 149.4 L464.5 149.2 L464.5 149.1 L464.5 148.9 L464.5 148.7 L464.4 148.5 L464.4 148.4 L464.4 148.2 L464.4 148 L464.4 147.9 L464.4 147.7 L464.3 147.5 L464.3 147.3 L461.7 147.3 L461.7 147.1 L461.7 146.9 L461.7 146.7 L461.7 146.6 L461.7 146.4 L461.7 146.2 L461.7 146.1 L461.7 145.9 L461.7 145.7 L461.7 145.5 L461.7 145.4 L461.7 145.2 L461.7 145 L461.7 144.8 L461.7 144.7 L461.7 144.5 L461.8 144.3 L461.8 144.2 L461.8 144 L461.8 143.8 L461.8 143.6 L461.8 143.5 L461.9 143.3 L461.9 143.1 L461.9 143 L462 142.8 L462 142.6 L462 142.4 L462 142.3 L462.1 142.1 L462.1 141.9 L462.1 141.8 L462.2 141.6 L462.2 141.4 L462.3 141.2 L462.3 141.1 L462.4 140.9 L462.4 140.7 L462.4 140.6 L462.5 140.4 L462.5 140.2 L462.6 140 L462.6 139.9 L462.7 139.7 L460.1 139.6 L460.2 139.4 L460.2 139.2 L460.3 139 L460.4 138.9 L460.4 138.7 L460.5 138.5 L460.6 138.4 L460.6 138.2 L460.7 138 L460.8 137.8 L460.8 137.7 L460.9 137.5 L461 137.3 L461.1 137.2 L461.1 137 L461.2 136.8 L461.3 136.6 L461.4 136.5 L461.5 136.3 L461.5 136.1 L461.6 136 L461.7 135.8 L461.8 135.6 L461.9 135.4 L462 135.3 L462.1 135.1 L462.2 134.9 L462.3 134.8 L462.4 134.6 L462.5 134.4 L462.6 134.3 L462.7 134.1 L462.8 133.9 L462.9 133.8 L463 133.6 L463.1 133.4 L463.2 133.2 L463.3 133.1 L463.4 132.9 L463.5 132.7 L463.6 132.6 L463.8 132.4 L463.9 132.2 L464 132.1 L461.5 131.8 L461.6 131.7 L461.7 131.5 L461.9 131.3 L462 131.2 L462.1 131 L462.3 130.8 L462.4 130.7 L462.5 130.5 L462.6 130.3 L462.8 130.2 L462.9 130 L463.1 129.8 L463.2 129.7 L463.3 129.5 L463.5 129.3 L463.6 129.2 L463.8 129 L463.9 128.8 L464.1 128.6 L464.2 128.5 L464.4 128.3 L464.5 128.1 L464.7 128 L464.8 127.8 L465 127.6 L465.1 127.5 L465.3 127.3 L465.4 127.1 L465.6 127 L465.8 126.8 L465.9 126.6 L466.1 126.5 L466.3 126.3 L466.4 126.2 L466.6 126 L466.8 125.8 L466.9 125.7 L467.1 125.5 L467.3 125.3 L467.5 125.2 L467.6 125 L467.8 124.8 L468 124.7 L468.2 124.5 L468.4 124.3 L466 124.1 L466.2 123.9 L466.4 123.7 L466.5 123.6 L466.7 123.4 L466.9 123.2 L467.1 123.1 L467.3 122.9 L467.5 122.7 L467.7 122.6 L467.9 122.4 L468.1 122.2 L468.3 122.1 L468.5 121.9 L468.7 121.8 L468.9 121.6 L469.1 121.4 L469.3 121.3 L469.5 121.1 L469.8 120.9 L470 120.8 L470.2 120.6 L470.4 120.5 L470.6 120.3 L470.8 120.1 L471 120 L471.3 119.8 L471.5 119.6 L471.7 119.5 L471.9 119.3 L472.2 119.2 L472.4 119 L472.6 118.8 L472.8 118.7 L473.1 118.5 L473.3 118.4 L473.5 118.2 L473.8 118 L474 117.9 L474.2 117.7 L474.5 117.6 L474.7 117.4 L475 117.2 L475.2 117.1 L473 116.7 L473.2 116.6 L473.4 116.4 L473.7 116.3 L473.9 116.1 L474.2 116 L474.5 115.8 L474.7 115.6 L475 115.5 L475.2 115.3 L475.5 115.2 L475.7 115 L476 114.8 L476.3 114.7 L476.5 114.5 L476.8 114.4 L477.1 114.2 L477.3 114.1 L477.6 113.9 L477.9 113.7 L478.1 113.6 L478.4 113.4 L478.7 113.3 L479 113.1 L479.2 113 L479.5 112.8 L479.8 112.6 L480.1 112.5 L480.3 112.3 L480.6 112.2 L480.9 112 L481.2 111.9 L481.5 111.7 L481.8 111.6 L482.1 111.4 L482.3 111.3 L482.6 111.1 L482.9 111 L483.2 110.8 L483.5 110.6 L483.8 110.5 L484.1 110.3 L484.4 110.2 L484.7 110 L485 109.9 L482.9 109.5 L483.2 109.3 L483.5 109.2 L483.8 109 L484.1 108.9 L484.4 108.7 L484.8 108.6 L485.1 108.4 L485.4 108.3 L485.7 108.1 L486 108 L486.3 107.8 L486.6 107.7 L487 107.5 L487.3 107.4 L487.6 107.2 L487.9 107.1 L488.3 106.9 L488.6 106.8 L488.9 106.6 L489.2 106.5 L489.6 106.3 L489.9 106.2 L490.2 106 L490.6 105.9 L490.9 105.7 L491.2 105.6 L491.6 105.4 L491.9 105.3 L492.2 105.1 L492.6 105 L492.9 104.9 L493.3 104.7 L493.6 104.6 L494 104.4 L494.3 104.3 L494.7 104.1 L495 104 L495.4 103.8 L495.7 103.7 L496.1 103.5 L496.4 103.4 L496.8 103.3 L497.1 103.1 L497.5 103 L495.5 102.5 L495.9 102.4 L496.2 102.2 L496.6 102.1 L497 102 L497.3 101.8 L497.7 101.7 L498.1 101.5 L498.4 101.4 L498.8 101.2 L499.2 101.1 L499.6 101 L499.9 100.8 L500.3 100.7 L500.7 100.5 L501.1 100.4 L501.4 100.2 L501.8 100.1 L502.2 100 L502.6 99.8 L503 99.7 L503.3 99.5 L503.7 99.4 L504.1 99.3 L504.5 99.1 L504.9 99 L505.3 98.9 L505.7 98.7 L506.1 98.6 L506.5 98.4 L506.8 98.3 L507.2 98.2 L507.6 98 L508 97.9 L508.4 97.8 L508.8 97.6 L509.2 97.5 L509.6 97.3 L510 97.2 L510.4 97.1 L510.8 96.9 L511.2 96.8 L511.6 96.7 L512.1 96.5 L512.5 96.4 L510.7 95.9 L511.1 95.8 L511.5 95.6 L511.9 95.5 L512.4 95.4 L512.8 95.2 L513.2 95.1 L513.6 95 L514 94.8 L514.5 94.7 L514.9 94.6 L515.3 94.5 L515.7 94.3 L516.2 94.2 L516.6 94.1 L517 93.9 L517.4 93.8 L517.9 93.7 L518.3 93.5 L518.7 93.4 L519.2 93.3 L519.6 93.1 L520 93 L520.5 92.9 L520.9 92.8 L521.3 92.6 L521.8 92.5 L522.2 92.4 L522.7 92.2 L523.1 92.1 L523.5 92 L524 91.9 L524.4 91.7 L524.9 91.6 L525.3 91.5 L525.8 91.4 L526.2 91.2 L526.7 91.1 L527.1 91 L527.6 90.9 L528 90.7 L528.5 90.6 L528.9 90.5 L529.4 90.4 L529.8 90.2 L528.3 89.7 L528.7 89.6 L529.2 89.5 L529.7 89.4 L530.1 89.2 L530.6 89.1 L531.1 89 L531.5 88.9 L532 88.7 L532.5 88.6 L532.9 88.5 L533.4 88.4 L533.9 88.3 L534.3 88.1 L534.8 88 L535.3 87.9 L535.8 87.8 L536.2 87.7 L536.7 87.5 L537.2 87.4 L537.7 87.3 L538.2 87.2 L538.6 87.1 L539.1 87 L539.6 86.8 L540.1 86.7 L540.6 86.6 L541.1 86.5 L541.5 86.4 L542 86.3 L542.5 86.1 L543 86 L543.5 85.9 L544 85.8 L544.5 85.7 L545 85.6 L545.5 85.5 L546 85.3 L546.4 85.2 L546.9 85.1 L547.4 85 L547.9 84.9 L548.4 84.8 L548.9 84.7 L549.4 84.6 L548.1 84 L548.6 83.9 L549.1 83.8 L549.6 83.7 L550.1 83.5 L550.6 83.4 L551.1 83.3 L551.6 83.2 L552.1 83.1 L552.7 83 L553.2 82.9 L553.7 82.8 L554.2 82.7 L554.7 82.6 L555.2 82.5 L555.7 82.4 L556.3 82.2 L556.8 82.1 L557.3 82 L557.8 81.9 L558.3 81.8 L558.9 81.7 L559.4 81.6 L559.9 81.5 L560.4 81.4 L560.9 81.3 L561.5 81.2 L562 81.1 L562.5 81 L563 80.9 L563.6 80.8 L564.1 80.7 L564.6 80.6 L565.2 80.5 L565.7 80.4 L566.2 80.3 L566.8 80.2 L567.3 80.1 L567.8 80 L568.4 79.9 L568.9 79.8 L569.4 79.7 L570 79.6 L570.5 79.5 L571 79.4 L569.9 78.8 L570.5 78.7 L571 78.6 L571.5 78.5 L572.1 78.4 L572.6 78.3 L573.2 78.2 L573.7 78.1 L574.3 78 L574.8 77.9 L575.4 77.8 L575.9 77.7 L576.5 77.6 L577 77.5 L577.6 77.4 L578.1 77.3 L578.7 77.3 L579.2 77.2 L579.8 77.1 L580.4 77 L580.9 76.9 L581.5 76.8 L582 76.7 L582.6 76.6 L583.1 76.5 L583.7 76.4 L584.3 76.3 L584.8 76.2 L585.4 76.2 L586 76.1 L586.5 76 L587.1 75.9 L587.6 75.8 L588.2 75.7 L588.8 75.6 L589.3 75.5 L589.9 75.5 L590.5 75.4 L591 75.3 L591.6 75.2 L592.2 75.1 L592.7 75 L593.3 74.9 L593.9 74.9 L594.5 74.8 L593.6 74.2 L594.1 74.1 L594.7 74 L595.3 73.9 L595.9 73.8 L596.5 73.7 L597 73.7 L597.6 73.6 L598.2 73.5 L598.8 73.4 L599.4 73.3 L599.9 73.2 L600.5 73.2 L601.1 73.1 L601.7 73 L602.3 72.9 L602.9 72.8 L603.5 72.8 L604 72.7 L604.6 72.6 L605.2 72.5 L605.8 72.5 L606.4 72.4 L607 72.3 L607.6 72.2 L608.2 72.1 L608.8 72.1 L609.3 72 L609.9 71.9 L610.5 71.8 L611.1 71.8 L611.7 71.7 L612.3 71.6 L612.9 71.6 L613.5 71.5 L614.1 71.4 L614.7 71.3 L615.3 71.3 L615.9 71.2 L616.5 71.1 L617.1 71 L617.7 71 L618.3 70.9 L618.9 70.8 L619.5 70.8 L618.8 70.1 L619.4 70.1 L620 70 L620.6 69.9 L621.2 69.9 L621.9 69.8 L622.5 69.7 L623.1 69.6 L623.7 69.6 L624.3 69.5 L624.9 69.4 L625.5 69.4 L626.1 69.3 L626.7 69.3 L627.3 69.2 L627.9 69.1 L628.6 69.1 L629.2 69 L629.8 68.9 L630.4 68.9 L631 68.8 L631.6 68.7 L632.2 68.7 L632.9 68.6 L633.5 68.6 L634.1 68.5 L634.7 68.4 L635.3 68.4 L635.9 68.3 L636.5 68.3 L637.2 68.2 L637.8 68.1 L638.4 68.1 L639 68 L639.6 68 L640.3 67.9 L640.9 67.8 L641.5 67.8 L642.1 67.7 L642.7 67.7 L643.4 67.6 L644 67.6 L644.6 67.5 L645.2 67.5 L645.8 67.4 L645.4 66.7 L646.1 66.7 L646.7 66.6 L647.3 66.6 L648 66.5 L648.6 66.5 L649.2 66.4 L649.8 66.4 L650.5 66.3 L651.1 66.3 L651.7 66.2 L652.4 66.2 L653 66.1 L653.6 66.1 L654.3 66 L654.9 66 L655.5 65.9 L656.2 65.9 L656.8 65.8 L657.4 65.8 L658.1 65.7 L658.7 65.7 L659.3 65.6 L660 65.6 L660.6 65.5 L661.2 65.5 L661.9 65.5 L662.5 65.4 L663.1 65.4 L663.8 65.3 L664.4 65.3 L665 65.2 L665.7 65.2 L666.3 65.2 L666.9 65.1 L667.6 65.1 L668.2 65 L668.9 65 L669.5 64.9 L670.1 64.9 L670.8 64.9 L671.4 64.8 L672.1 64.8 L672.7 64.8 L673.3 64.7 L673.2 64 L673.8 64 L674.5 64 L675.1 63.9 L675.8 63.9 L676.4 63.9 L677 63.8 L677.7 63.8 L678.3 63.8 L679 63.7 L679.6 63.7 L680.3 63.6 L680.9 63.6 L681.6 63.6 L682.2 63.5 L682.9 63.5 L683.5 63.5 L684.2 63.4 L684.8 63.4 L685.4 63.4 L686.1 63.4 L686.7 63.3 L687.4 63.3 L688 63.3 L688.7 63.2 L689.3 63.2 L690 63.2 L690.6 63.1 L691.3 63.1 L691.9 63.1 L692.6 63.1 L693.2 63 L693.9 63 L694.5 63 L695.2 63 L695.8 62.9 L696.5 62.9 L697.1 62.9 L697.8 62.9 L698.4 62.8 L699.1 62.8 L699.7 62.8 L700.4 62.8 L701 62.8 L701.7 62.7 L701.8 62 L702.4 62 L703.1 62 L703.7 62 L704.4 62 L705 61.9 L705.7 61.9 L706.3 61.9 L707 61.9 L707.7 61.9 L708.3 61.8 L709 61.8 L709.6 61.8 L710.3 61.8 L710.9 61.8 L711.6 61.8 L712.3 61.7 L712.9 61.7 L713.6 61.7 L714.2 61.7 L714.9 61.7 L715.5 61.7 L716.2 61.7 L716.8 61.7 L717.5 61.6 L718.2 61.6 L718.8 61.6 L719.5 61.6 L720.1 61.6 L720.8 61.6 L721.4 61.6 L722.1 61.6 L722.7 61.6 L723.4 61.5 L724.1 61.5 L724.7 61.5 L725.4 61.5 L726 61.5 L726.7 61.5 L727.3 61.5 L728 61.5 L728.6 61.5 L729.3 61.5 L730 61.5 L730.6 61.5 L730.9 60.8 L731.6 60.8 L732.3 60.8 L732.9 60.7 L733.6 60.7 L734.2 60.7 L734.9 60.7 L735.6 60.7 L736.2 60.7 L736.9 60.7 L737.5 60.7 L738.2 60.7 L738.9 60.7 L739.5 60.7 L740.2 60.7 L740.8 60.7 L741.5 60.7 L742.1 60.7 L742.8 60.8 L743.5 60.8 L744.1 60.8 L744.8 60.8 L745.4 60.8 L746.1 60.8 L746.8 60.8 L747.4 60.8 L748.1 60.8 L748.7 60.8 L749.4 60.8 L750 60.8 L750.7 60.8 L751.3 60.8 L752 60.8 L752.7 60.9 L753.3 60.9 L754 60.9 L754.6 60.9 L755.3 60.9 L755.9 60.9 L756.6 60.9 L757.2 60.9 L757.9 61 L758.5 61 L759.2 61 L759.8 61 L760.4 60.2 L761.1 60.2 L761.8 60.2 L762.4 60.2 L763.1 60.3 L763.7 60.3 L764.4 60.3 L765 60.3 L765.7 60.3 L766.4 60.3 L767 60.4 L767.7 60.4 L768.3 60.4 L769 60.4 L769.6 60.4 L770.3 60.5 L770.9 60.5 L771.6 60.5 L772.2 60.5 L772.9 60.6 L773.5 60.6 L774.2 60.6 L774.9 60.6 L775.5 60.7 L776.2 60.7 L776.8 60.7 L777.5 60.7 L778.1 60.8 L778.8 60.8 L779.4 60.8 L780 60.8 L780.7 60.9 L781.3 60.9 L782 60.9 L782.6 61 L783.3 61 L783.9 61 L784.6 61.1 L785.2 61.1 L785.9 61.1 L786.5 61.2 L787.1 61.2 L787.8 61.2 L788.4 61.3 L789.1 61.3 L790 60.4 L790.6 60.4 L791.3 60.4 L791.9 60.5 L792.6 60.5 L793.2 60.6 L793.9 60.6 L794.5 60.6 L795.2 60.7 L795.8 60.7 L796.5 60.7 L797.1 60.8 L797.7 60.8 L798.4 60.9 L799 60.9 L799.7 60.9 L800.3 61 L800.9 61 L801.6 61.1 L802.2 61.1 L802.9 61.2 L803.5 61.2 L804.1 61.2 L804.8 61.3 L805.4 61.3 L806 61.4 L806.7 61.4 L807.3 61.5 L807.9 61.5 L808.6 61.6 L809.2 61.6 L809.8 61.7 L810.4 61.7 L811.1 61.8 L811.7 61.8 L812.3 61.9 L813 61.9 L813.6 62 L814.2 62 L814.8 62.1 L815.4 62.1 L816.1 62.2 L816.7 62.3 L817.3 62.3 L817.9 62.4 L819.3 61.3 L820 61.3 L820.6 61.4 L821.2 61.5 L821.8 61.5 L822.5 61.6 L823.1 61.6 L823.7 61.7 L824.3 61.7 L825 61.8 L825.6 61.9 L826.2 61.9 L826.8 62 L827.4 62 L828.1 62.1 L828.7 62.2 L829.3 62.2 L829.9 62.3 L830.5 62.3 L831.1 62.4 L831.7 62.5 L832.4 62.5 L833 62.6 L833.6 62.7 L834.2 62.7 L834.8 62.8 L835.4 62.9 L836 62.9 L836.6 63 L837.2 63.1 L837.8 63.2 L838.4 63.2 L839 63.3 L839.6 63.4 L840.2 63.4 L840.8 63.5 L841.4 63.6 L842 63.7 L842.6 63.7 L843.2 63.8 L843.8 63.9 L844.3 64 L844.9 64.1 L845.5 64.1 L846.1 64.2 L846.7 64.3 L848.8 63 L849.4 63.1 L850 63.2 L850.6 63.2 L851.2 63.3 L851.8 63.4 L852.3 63.5 L852.9 63.5 L853.5 63.6 L854.1 63.7 L854.7 63.8 L855.3 63.9 L855.9 63.9 L856.5 64 L857 64.1 L857.6 64.2 L858.2 64.3 L858.8 64.4 L859.4 64.4 L859.9 64.5 L860.5 64.6 L861.1 64.7 L861.6 64.8 L862.2 64.9 L862.8 65 L863.3 65.1 L863.9 65.2 L864.5 65.2 L865 65.3 L865.6 65.4 L866.2 65.5 L866.7 65.6 L867.3 65.7 L867.8 65.8 L868.4 65.9 L868.9 66 L869.5 66.1 L870 66.2 L870.6 66.3 L871.1 66.4 L871.7 66.5 L872.2 66.6 L872.7 66.7 L873.3 66.8 L876.3 65.3 L876.8 65.4 L877.4 65.5 L877.9 65.6 L878.5 65.7 L879 65.8 L879.6 65.9 L880.1 66 L880.7 66.1 L881.2 66.2 L881.8 66.3 L882.3 66.4 L882.9 66.5 L883.4 66.6 L883.9 66.7 L884.5 66.8 L885 66.9 L885.5 67 L886.1 67.1 L886.6 67.2 L887.1 67.3 L887.7 67.4 L888.2 67.5 L888.7 67.6 L889.2 67.7 L889.7 67.8 L890.3 67.9 L890.8 68.1 L891.3 68.2 L891.8 68.3 L892.3 68.4 L892.8 68.5 L893.3 68.6 L893.8 68.7 L894.3 68.8 L894.8 69 L895.3 69.1 L895.8 69.2 L896.3 69.3 L896.8 69.4 L897.3 69.5 L897.8 69.7 L898.3 69.8 L898.8 69.9 L899.2 70 L903.3 68.3 L903.8 68.4 L904.3 68.5 L904.9 68.7 L905.4 68.8 L905.9 68.9 L906.3 69 L906.8 69.1 L907.3 69.2 L907.8 69.4 L908.3 69.5 L908.8 69.6 L909.3 69.7 L909.8 69.9 L910.3 70 L910.7 70.1 L911.2 70.2 L911.7 70.3 L912.2 70.5 L912.6 70.6 L913.1 70.7 L913.6 70.8 L914 71 L914.5 71.1 L915 71.2 L915.4 71.4 L915.9 71.5 L916.3 71.6 L916.8 71.7 L917.3 71.9 L917.7 72 L918.1 72.1 L918.6 72.3 L919 72.4 L919.5 72.5 L919.9 72.6 L920.4 72.8 L920.8 72.9 L921.2 73 L921.7 73.2 L922.1 73.3 L922.5 73.4 L922.9 73.6 L923.4 73.7 L923.8 73.9 L929.1 72 L929.6 72.1 L930 72.3 L930.5 72.4 L930.9 72.5 L931.4 72.7 L931.8 72.8 L932.2 72.9 L932.7 73.1 L933.1 73.2 L933.5 73.4 L933.9 73.5 L934.4 73.6 L934.8 73.8 L935.2 73.9 L935.6 74.1 L936 74.2 L936.4 74.3 L936.9 74.5 L937.3 74.6 L937.7 74.8 L938.1 74.9 L938.5 75 L938.9 75.2 L939.3 75.3 L939.7 75.5 L940.1 75.6 L940.5 75.7 L940.9 75.9 L941.2 76 L941.6 76.2 L942 76.3 L942.4 76.5 L942.8 76.6 L943.1 76.8 L943.5 76.9 L943.9 77.1 L944.3 77.2 L944.6 77.3 L945 77.5 L945.4 77.6 L945.7 77.8 L946.1 77.9 L946.4 78.1 L946.8 78.2 L947.2 78.4 L953.8 76.5 L954.2 76.6 L954.6 76.8 L954.9 76.9 L955.3 77.1 L955.7 77.2 L956.1 77.4 L956.4 77.5 L956.8 77.7 L957.1 77.8 L957.5 78 L957.9 78.1 L958.2 78.3 L958.6 78.4 L958.9 78.6 L959.3 78.7 L959.6 78.9 L960 79 L960.3 79.2 L960.7 79.4 L961 79.5 L961.3 79.7 L961.7 79.8 L962 80 L962.3 80.1 L962.7 80.3 L963 80.4 L963.3 80.6 L963.6 80.7 L964 80.9 L964.3 81.1 L964.6 81.2 L964.9 81.4 L965.2 81.5 L965.5 81.7 L965.8 81.8 L966.1 82 L966.5 82.1 L966.8 82.3 L967.1 82.5 L967.4 82.6 L967.7 82.8 L968 82.9 L968.2 83.1 L976 81.2 L976.3 81.4 L976.6 81.6 L976.9 81.7 L977.2 81.9 L977.5 82 L977.8 82.2 L978.1 82.4 L978.4 82.5 L978.7 82.7 L979 82.9 L979.3 83 L979.6 83.2 L979.9 83.3 L980.2 83.5 L980.5 83.7 L980.8 83.8 L981.1 84 L981.3 84.1 L981.6 84.3 L981.9 84.5 L982.2 84.6 L982.4 84.8 L982.7 85 L983 85.1 L983.3 85.3 L983.5 85.4 L983.8 85.6 L984.1 85.8 L984.3 85.9 L984.6 86.1 L984.8 86.3 L985.1 86.4 L985.4 86.6 L985.6 86.8 L985.9 86.9 L986.1 87.1 L986.4 87.2 L986.6 87.4 L986.8 87.6 L987.1 87.7 L987.3 87.9 L987.6 88.1 L987.8 88.2 L988.1 88.4 L996.6 86.7 L996.8 86.9 L997.1 87 L997.3 87.2 L997.6 87.4 L997.8 87.6 L998.1 87.7 L998.3 87.9 L998.5 88.1 L998.8 88.2 L999 88.4 L999.2 88.6 L999.5 88.7 L999.7 88.9 L999.9 89.1 L1000.2 89.2 L1000.4 89.4 L1000.6 89.6 L1000.8 89.7 L1001.1 89.9 L1001.3 90.1 L1001.5 90.2 L1001.7 90.4 L1001.9 90.6 L1002.1 90.7 L1002.4 90.9 L1002.6 91.1 L1002.8 91.2 L1003 91.4 L1003.2 91.6 L1003.4 91.7 L1003.6 91.9 L1003.8 92.1 L1004 92.2 L1004.2 92.4 L1004.4 92.6 L1004.6 92.7 L1004.8 92.9 L1005 93.1 L1005.2 93.2 L1005.4 93.4 L1005.6 93.6 L1005.8 93.7 L1006 93.9 L1006.1 94.1 L1015 92.7 L1015.2 92.8 L1015.4 93 L1015.6 93.2 L1015.8 93.4 L1016 93.5 L1016.2 93.7 L1016.3 93.9 L1016.5 94.1 L1016.7 94.2 L1016.9 94.4 L1017.1 94.6 L1017.2 94.7 L1017.4 94.9 L1017.6 95.1 L1017.8 95.3 L1017.9 95.4 L1018.1 95.6 L1018.3 95.8 L1018.5 95.9 L1018.6 96.1 L1018.8 96.3 L1019 96.4 L1019.1 96.6 L1019.3 96.8 L1019.5 97 L1019.6 97.1 L1019.8 97.3 L1019.9 97.5 L1020.1 97.6 L1020.3 97.8 L1020.4 98 L1020.6 98.1 L1020.7 98.3 L1020.9 98.5 L1021 98.7 L1021.2 98.8 L1021.3 99 L1021.5 99.2 L1021.6 99.3 L1021.8 99.5 L1021.9 99.7 L1022.1 99.8 L1022.2 100 L1022.4 100.2 L1022.5 100.3 L1031.3 99.3 L1031.4 99.4 L1031.6 99.6 L1031.7 99.8 L1031.8 100 L1032 100.1 L1032.1 100.3 L1032.2 100.5 L1032.4 100.6 L1032.5 100.8 L1032.6 101 L1032.8 101.2 L1032.9 101.3 L1033 101.5 L1033.2 101.7 L1033.3 101.9 L1033.4 102 L1033.5 102.2 L1033.7 102.4 L1033.8 102.5 L1033.9 102.7 L1034 102.9 L1034.1 103.1 L1034.3 103.2 L1034.4 103.4 L1034.5 103.6 L1034.6 103.7 L1034.8 103.9 L1034.9 104.1 L1035 104.3 L1035.1 104.4 L1035.2 104.6 L1035.3 104.8 L1035.5 104.9 L1035.6 105.1 L1035.7 105.3 L1035.8 105.4 L1035.9 105.6 L1036 105.8 L1036.1 106 L1036.3 106.1 L1036.4 106.3 L1036.5 106.5 L1036.6 106.6 L1044.8 105.9 L1044.9 106.1 L1045 106.2 L1045.1 106.4 L1045.1 106.6 L1045.2 106.7 L1045.3 106.9 L1045.4 107.1 L1045.5 107.3 L1045.6 107.4 L1045.7 107.6 L1045.8 107.8 L1045.9 108 L1046 108.1 L1046 108.3 L1046.1 108.5 L1046.2 108.7 L1046.3 108.8 L1046.4 109 L1046.5 109.2 L1046.6 109.3 L1046.6 109.5 L1046.7 109.7 L1046.8 109.9 L1046.9 110 L1047 110.2 L1047.1 110.4 L1047.1 110.5 L1047.2 110.7 L1047.3 110.9 L1047.4 111.1 L1047.5 111.2 L1047.5 111.4 L1047.6 111.6 L1047.7 111.7 L1047.8 111.9 L1047.9 112.1 L1047.9 112.3 L1048 112.4 L1048.1 112.6 L1048.2 112.8 L1048.2 112.9 L1048.3 113.1 L1048.4 113.3 L1048.5 113.4 L1055.8 113 L1055.8 113.2 L1055.9 113.3 L1055.9 113.5 L1056 113.7 L1056 113.9 L1056.1 114 L1056.1 114.2 L1056.2 114.4 L1056.2 114.6 L1056.3 114.7 L1056.3 114.9 L1056.4 115.1 L1056.4 115.2 L1056.5 115.4 L1056.5 115.6 L1056.6 115.8 L1056.6 115.9 L1056.7 116.1 L1056.7 116.3 L1056.8 116.5 L1056.8 116.6 L1056.9 116.8 L1056.9 117 L1056.9 117.1 L1057 117.3 L1057 117.5 L1057.1 117.7 L1057.1 117.8 L1057.2 118 L1057.2 118.2 L1057.2 118.3 L1057.3 118.5 L1057.3 118.7 L1057.4 118.9 L1057.4 119 L1057.5 119.2 L1057.5 119.4 L1057.5 119.5 L1057.6 119.7 L1057.6 119.9 L1057.7 120 L1057.7 120.2 L1057.7 120.4 L1057.8 120.5 L1064 120.4 L1064 120.5 L1064 120.7 L1064 120.9 L1064.1 121.1 L1064.1 121.2 L1064.1 121.4 L1064.1 121.6 L1064.1 121.7 L1064.1 121.9 L1064.1 122.1 L1064.1 122.3 L1064.1 122.4 L1064.2 122.6 L1064.2 122.8 L1064.2 123 L1064.2 123.1 L1064.2 123.3 L1064.2 123.5 L1064.2 123.6 L1064.2 123.8 L1064.2 124 L1064.2 124.2 L1064.2 124.3 L1064.2 124.5 L1064.2 124.7 L1064.2 124.8 L1064.2 125 L1064.3 125.2 L1064.3 125.4 L1064.3 125.5 L1064.3 125.7 L1064.3 125.9 L1064.3 126 L1064.3 126.2 L1064.3 126.4 L1064.3 126.6 L1064.3 126.7 L1064.3 126.9 L1064.3 127.1 L1064.3 127.2 L1064.3 127.4 L1064.2 127.6 L1064.2 127.7 L1064.2 127.9 L1064.2 128.1 L1069.4 128.1 L1069.3 128.3 L1069.3 128.4 L1069.3 128.6 L1069.3 128.8 L1069.2 129 L1069.2 129.1 L1069.2 129.3 L1069.1 129.5 L1069.1 129.6 L1069.1 129.8 L1069 130 L1069 130.2 L1069 130.3 L1068.9 130.5 L1068.9 130.7 L1068.9 130.8 L1068.8 131 L1068.8 131.2 L1068.8 131.4 L1068.7 131.5 L1068.7 131.7 L1068.6 131.9 L1068.6 132 L1068.6 132.2 L1068.5 132.4 L1068.5 132.6 L1068.4 132.7 L1068.4 132.9 L1068.4 133.1 L1068.3 133.2 L1068.3 133.4 L1068.2 133.6 L1068.2 133.8 L1068.1 133.9 L1068.1 134.1 L1068 134.3 L1068 134.4 L1067.9 134.6 L1067.9 134.8 L1067.8 134.9 L1067.8 135.1 L1067.7 135.3 L1067.7 135.5 L1071.9 135.6 L1071.8 135.8 L1071.7 135.9 L1071.7 136.1 L1071.6 136.3 L1071.5 136.5 L1071.5 136.6 L1071.4 136.8 L1071.3 137 L1071.2 137.1 L1071.1 137.3 L1071.1 137.5 L1071 137.6 L1070.9 137.8 L1070.8 138 L1070.7 138.2 L1070.7 138.3 L1070.6 138.5 L1070.5 138.7 L1070.4 138.8 L1070.3 139 L1070.2 139.2 L1070.1 139.4 L1070.1 139.5 L1070 139.7 L1069.9 139.9 L1069.8 140 L1069.7 140.2 L1069.6 140.4 L1069.5 140.5 L1069.4 140.7 L1069.3 140.9 L1069.2 141 L1069.1 141.2 L1069 141.4 L1068.9 141.6 L1068.8 141.7 L1068.7 141.9 L1068.6 142.1 L1068.5 142.2 L1068.4 142.4 L1068.3 142.6 L1068.2 142.7 L1068.1 142.9 L1068 143.1 L1071.4 143.3 L1071.3 143.5 L1071.2 143.6 L1071.1 143.8 L1071 144 L1070.8 144.2 L1070.7 144.3 L1070.6 144.5 L1070.4 144.7 L1070.3 144.8 L1070.2 145 L1070.1 145.2 L1069.9 145.3 L1069.8 145.5 L1069.7 145.7 L1069.5 145.8 L1069.4 146 L1069.2 146.2 L1069.1 146.4 L1069 146.5 L1068.8 146.7 L1068.7 146.9 L1068.5 147 L1068.4 147.2 L1068.3 147.4 L1068.1 147.5 L1068 147.7 L1067.8 147.9 L1067.7 148 L1067.5 148.2 L1067.4 148.4 L1067.2 148.5 L1067.1 148.7 L1066.9 148.9 L1066.8 149 L1066.6 149.2 L1066.4 149.4 L1066.3 149.5 L1066.1 149.7 L1066 149.9 L1065.8 150 L1065.6 150.2 L1065.5 150.4 L1065.3 150.5 L1065.2 150.7 L1068.1 151 L1067.9 151.2 L1067.7 151.3 L1067.5 151.5 L1067.3 151.7 L1067.2 151.8 L1067 152 L1066.8 152.2 L1066.6 152.3 L1066.4 152.5 L1066.2 152.7 L1066 152.8 L1065.9 153 L1065.7 153.2 L1065.5 153.3 L1065.3 153.5 L1065.1 153.6 L1064.9 153.8 L1064.7 154 L1064.5 154.1 L1064.3 154.3 L1064.1 154.5 L1063.9 154.6 L1063.7 154.8 L1063.5 155 L1063.3 155.1 L1063.1 155.3 L1062.9 155.5 L1062.7 155.6 L1062.5 155.8 L1062.3 155.9 L1062.1 156.1 L1061.8 156.3 L1061.6 156.4 L1061.4 156.6 L1061.2 156.8 L1061 156.9 L1060.8 157.1 L1060.6 157.2 L1060.3 157.4 L1060.1 157.6 L1059.9 157.7 L1059.7 157.9 L1059.4 158.1 L1059.2 158.2 L1059 158.4 L1061.5 158.7 L1061.3 158.9 L1061 159.1 L1060.8 159.2 L1060.5 159.4 L1060.3 159.5 L1060.1 159.7 L1059.8 159.9 L1059.6 160 L1059.3 160.2 L1059.1 160.3 L1058.8 160.5 L1058.6 160.7 L1058.3 160.8 L1058.1 161 L1057.8 161.1 L1057.6 161.3 L1057.3 161.5 L1057.1 161.6 L1056.8 161.8 L1056.6 161.9 L1056.3 162.1 L1056 162.3 L1055.8 162.4 L1055.5 162.6 L1055.2 162.7 L1055 162.9 L1054.7 163.1 L1054.4 163.2 L1054.2 163.4 L1053.9 163.5 L1053.6 163.7 L1053.4 163.8 L1053.1 164 L1052.8 164.2 L1052.5 164.3 L1052.3 164.5 L1052 164.6 L1051.7 164.8 L1051.4 164.9 L1051.1 165.1 L1050.8 165.3 L1050.6 165.4 L1050.3 165.6 L1052.5 166 L1052.2 166.1 L1051.9 166.3 L1051.6 166.4 L1051.3 166.6 L1051 166.7 L1050.7 166.9 L1050.4 167.1 L1050.1 167.2 L1049.8 167.4 L1049.5 167.5 L1049.2 167.7 L1048.9 167.8 L1048.6 168 L1048.3 168.1 L1048 168.3 L1047.7 168.4 L1047.4 168.6 L1047.1 168.7 L1046.7 168.9 L1046.4 169.1 L1046.1 169.2 L1045.8 169.4 L1045.5 169.5 L1045.2 169.7 L1044.8 169.8 L1044.5 170 L1044.2 170.1 L1043.9 170.3 L1043.5 170.4 L1043.2 170.6 L1042.9 170.7 L1042.5 170.9 L1042.2 171 L1041.9 171.2 L1041.5 171.3 L1041.2 171.5 L1040.9 171.6 L1040.5 171.8 L1040.2 171.9 L1039.8 172.1 L1039.5 172.2 L1039.2 172.4 L1038.8 172.5 L1038.5 172.7 L1038.1 172.8 L1040.2 173.3 L1039.8 173.4 L1039.5 173.6 L1039.1 173.7 L1038.7 173.8 L1038.4 174 L1038 174.1 L1037.7 174.3 L1037.3 174.4 L1036.9 174.6 L1036.6 174.7 L1036.2 174.9 L1035.9 175 L1035.5 175.2 L1035.1 175.3 L1034.8 175.5 L1034.4 175.6 L1034 175.7 L1033.6 175.9 L1033.3 176 L1032.9 176.2 L1032.5 176.3 L1032.1 176.5 L1031.8 176.6 L1031.4 176.8 L1031 176.9 L1030.6 177 L1030.2 177.2 L1029.9 177.3 L1029.5 177.5 L1029.1 177.6 L1028.7 177.7 L1028.3 177.9 L1027.9 178 L1027.5 178.2 L1027.1 178.3 L1026.7 178.4 L1026.3 178.6 L1026 178.7 L1025.6 178.9 L1025.2 179 L1024.8 179.1 L1024.4 179.3 L1024 179.4 L1025.8 179.9 L1025.4 180.1 L1025 180.2 L1024.6 180.3 L1024.2 180.5 L1023.8 180.6 L1023.3 180.8 L1022.9 180.9 L1022.5 181 L1022.1 181.2 L1021.7 181.3 L1021.3 181.4 L1020.9 181.6 L1020.4 181.7 L1020 181.8 L1019.6 182 L1019.2 182.1 L1018.7 182.3 L1018.3 182.4 L1017.9 182.5 L1017.5 182.7 L1017 182.8 L1016.6 182.9 L1016.2 183.1 L1015.7 183.2 L1015.3 183.3 L1014.9 183.5 L1014.4 183.6 L1014 183.7 L1013.6 183.9 L1013.1 184 L1012.7 184.1 L1012.3 184.2 L1011.8 184.4 L1011.4 184.5 L1010.9 184.6 L1010.5 184.8 L1010 184.9 L1009.6 185 L1009.1 185.2 L1008.7 185.3 L1008.2 185.4 L1007.8 185.5 L1007.3 185.7 L1006.9 185.8 L1006.4 185.9 L1008.1 186.5 L1007.6 186.6 L1007.2 186.7 L1006.7 186.9 L1006.2 187 L1005.8 187.1 L1005.3 187.2 L1004.8 187.4 L1004.4 187.5 L1003.9 187.6 L1003.4 187.7 L1003 187.9 L1002.5 188 L1002 188.1 L1001.6 188.2 L1001.1 188.4 L1000.6 188.5 L1000.1 188.6 L999.7 188.7 L999.2 188.9 L998.7 189 L998.2 189.1 L997.7 189.2 L997.3 189.3 L996.8 189.5 L996.3 189.6 L995.8 189.7 L995.3 189.8 L994.8 190 L994.3 190.1 L993.9 190.2 L993.4 190.3 L992.9 190.4 L992.4 190.6 L991.9 190.7 L991.4 190.8 L990.9 190.9 L990.4 191 L989.9 191.1 L989.4 191.3 L988.9 191.4 L988.4 191.5 L987.9 191.6 L987.4 191.7 L988.9 192.3 L988.4 192.4 L987.8 192.5 L987.3 192.7 L986.8 192.8 L986.3 192.9 L985.8 193 L985.3 193.1 L984.8 193.2 L984.3 193.3 L983.8 193.5 L983.2 193.6 L982.7 193.7 L982.2 193.8 L981.7 193.9 L981.2 194 L980.7 194.1 L980.1 194.2 L979.6 194.4 L979.1 194.5 L978.6 194.6 L978 194.7 L977.5 194.8 L977 194.9 L976.5 195 L975.9 195.1 L975.4 195.2 L974.9 195.3 L974.4 195.4 L973.8 195.6 L973.3 195.7 L972.8 195.8 L972.2 195.9 L971.7 196 L971.2 196.1 L970.6 196.2 L970.1 196.3 L969.6 196.4 L969 196.5 L968.5 196.6 L967.9 196.7 L967.4 196.8 L966.9 196.9 L966.3 197 L965.8 197.1 L967 197.8 L966.4 197.9 L965.9 198 L965.3 198.1 L964.8 198.2 L964.2 198.3 L963.7 198.4 L963.1 198.5 L962.6 198.6 L962 198.7 L961.5 198.8 L960.9 198.9 L960.3 199 L959.8 199.1 L959.2 199.2 L958.7 199.3 L958.1 199.4 L957.5 199.5 L957 199.6 L956.4 199.7 L955.9 199.7 L955.3 199.8 L954.7 199.9 L954.2 200 L953.6 200.1 L953 200.2 L952.5 200.3 L951.9 200.4 L951.3 200.5 L950.8 200.6 L950.2 200.7 L949.6 200.8 L949 200.9 L948.5 201 L947.9 201.1 L947.3 201.2 L946.7 201.3 L946.2 201.3 L945.6 201.4 L945 201.5 L944.4 201.6 L943.9 201.7 L943.3 201.8 L942.7 201.9 L942.1 202 L941.5 202.1 L942.5 202.7 L941.9 202.8 L941.3 202.9 L940.7 203 L940.1 203.1 L939.6 203.1 L939 203.2 L938.4 203.3 L937.8 203.4 L937.2 203.5 L936.6 203.6 L936 203.7 L935.4 203.7 L934.8 203.8 L934.2 203.9 L933.6 204 L933 204.1 L932.4 204.2 L931.8 204.2 L931.2 204.3 L930.6 204.4 L930 204.5 L929.4 204.6 L928.8 204.6 L928.2 204.7 L927.6 204.8 L927 204.9 L926.4 205 L925.8 205 L925.2 205.1 L924.6 205.2 L924 205.3 L923.4 205.4 L922.8 205.4 L922.2 205.5 L921.6 205.6 L921 205.7 L920.4 205.7 L919.8 205.8 L919.2 205.9 L918.6 206 L917.9 206 L917.3 206.1 L916.7 206.2 L917.4 206.9 L916.8 206.9 L916.2 207 L915.6 207.1 L914.9 207.2 L914.3 207.2 L913.7 207.3 L913.1 207.4 L912.5 207.4 L911.8 207.5 L911.2 207.6 L910.6 207.6 L910 207.7 L909.4 207.8 L908.7 207.9 L908.1 207.9 L907.5 208 L906.9 208.1 L906.2 208.1 L905.6 208.2 L905 208.3 L904.3 208.3 L903.7 208.4 L903.1 208.5 L902.5 208.5 L901.8 208.6 L901.2 208.6 L900.6 208.7 L899.9 208.8 L899.3 208.8 L898.7 208.9 L898.1 209 L897.4 209 L896.8 209.1 L896.2 209.1 L895.5 209.2 L894.9 209.3 L894.3 209.3 L893.6 209.4 L893 209.4 L892.3 209.5 L891.7 209.6 L891.1 209.6 L890.4 209.7 L889.8 209.7 L890.2 210.4 L889.6 210.5 L889 210.5 L888.3 210.6 L887.7 210.7 L887 210.7 L886.4 210.8 L885.7 210.8 L885.1 210.9 L884.4 210.9 L883.8 211 L883.2 211 L882.5 211.1 L881.9 211.1 L881.2 211.2 L880.6 211.2 L879.9 211.3 L879.3 211.4 L878.6 211.4 L878 211.5 L877.3 211.5 L876.7 211.6 L876 211.6 L875.4 211.7 L874.7 211.7 L874.1 211.7 L873.4 211.8 L872.8 211.8 L872.1 211.9 L871.5 211.9 L870.8 212 L870.2 212 L869.5 212.1 L868.8 212.1 L868.2 212.2 L867.5 212.2 L866.9 212.3 L866.2 212.3 L865.6 212.3 L864.9 212.4 L864.3 212.4 L863.6 212.5 L863 212.5 L862.3 212.6 L861.6 212.6 L861 212.6 L861.2 213.3 L860.5 213.4 L859.8 213.4 L859.2 213.5 L858.5 213.5 L857.8 213.5 L857.2 213.6 L856.5 213.6 L855.9 213.6 L855.2 213.7 L854.5 213.7 L853.9 213.8 L853.2 213.8 L852.5 213.8 L851.9 213.9 L851.2 213.9 L850.5 213.9 L849.9 214 L849.2 214 L848.5 214 L847.9 214.1 L847.2 214.1 L846.5 214.1 L845.9 214.2 L845.2 214.2 L844.5 214.2 L843.9 214.3 L843.2 214.3 L842.5 214.3 L841.9 214.3 L841.2 214.4 L840.5 214.4 L839.9 214.4 L839.2 214.5 L838.5 214.5 L837.9 214.5 L837.2 214.5 L836.5 214.6 L835.9 214.6 L835.2 214.6 L834.5 214.6 L833.9 214.7 L833.2 214.7 L832.5 214.7 L832.4 215.4 L831.8 215.4 L831.1 215.5 L830.4 215.5 L829.7 215.5 L829.1 215.5 L828.4 215.6 L827.7 215.6 L827 215.6 L826.4 215.6 L825.7 215.6 L825 215.7 L824.3 215.7 L823.7 215.7 L823 215.7 L822.3 215.7 L821.6 215.7 L821 215.8 L820.3 215.8 L819.6 215.8 L818.9 215.8 L818.3 215.8 L817.6 215.8 L816.9 215.9 L816.2 215.9 L815.6 215.9 L814.9 215.9 L814.2 215.9 L813.5 215.9 L812.9 215.9 L812.2 216 L811.5 216 L810.8 216 L810.2 216 L809.5 216 L808.8 216 L808.1 216 L807.5 216 L806.8 216 L806.1 216 L805.4 216.1 L804.8 216.1 L804.1 216.1 L803.4 216.1 L802.7 216.1 L802.4 216.8 L801.7 216.8 L801 216.8 L800.3 216.8 L799.7 216.8 L799 216.8 L798.3 216.8 L797.6 216.8 L796.9 216.8 L796.3 216.8 L795.6 216.8 L794.9 216.8 L794.2 216.8 L793.5 216.8 L792.9 216.8 L792.2 216.8 L791.5 216.8 L790.8 216.8 L790.2 216.8 L789.5 216.8 L788.8 216.8 L788.1 216.8 L787.4 216.8 L786.8 216.8 L786.1 216.8 L785.4 216.8 L784.7 216.8 L784.1 216.8 L783.4 216.8 L782.7 216.8 L782 216.8 L781.4 216.8 L780.7 216.8 L780 216.8 L779.3 216.8 L778.7 216.8 L778 216.8 L777.3 216.8 L776.6 216.7 L776 216.7 L775.3 216.7 L774.6 216.7 L773.9 216.7 L773.3 216.7 L772.6 216.7 L772 217.4 L771.3 217.4 L770.6 217.3 L769.9 217.3 L769.2 217.3 L768.6 217.3 L767.9 217.3 L767.2 217.3 L766.5 217.3 L765.9 217.3 L765.2 217.2 L764.5 217.2 L763.8 217.2 L763.2 217.2 L762.5 217.2 L761.8 217.2 L761.1 217.1 L760.5 217.1 L759.8 217.1 L759.1 217.1 L758.4 217.1 L757.8 217.1 L757.1 217 L756.4 217 L755.7 217 L755.1 217 L754.4 217 L753.7 216.9 L753.1 216.9 L752.4 216.9 L751.7 216.9 L751 216.8 L750.4 216.8 L749.7 216.8 L749 216.8 L748.4 216.7 L747.7 216.7 L747 216.7 L746.4 216.7 L745.7 216.6 L745 216.6 L744.4 216.6 L743.7 216.6 L743 216.5 L742.4 216.5 L741.5 217.2 L740.8 217.1 L740.1 217.1 L739.5 217.1 L738.8 217.1 L738.1 217 L737.5 217 L736.8 217 L736.1 216.9 L735.5 216.9 L734.8 216.9 L734.1 216.8 L733.5 216.8 L732.8 216.8 L732.1 216.7 L731.5 216.7 L730.8 216.7 L730.1 216.6 L729.5 216.6 L728.8 216.6 L728.1 216.5 L727.5 216.5 L726.8 216.5 L726.2 216.4 L725.5 216.4 L724.8 216.4 L724.2 216.3 L723.5 216.3 L722.9 216.2 L722.2 216.2 L721.5 216.2 L720.9 216.1 L720.2 216.1 L719.6 216 L718.9 216 L718.3 216 L717.6 215.9 L716.9 215.9 L716.3 215.8 L715.6 215.8 L715 215.7 L714.3 215.7 L713.7 215.7 L713 215.6 L712.4 215.6 L711.7 215.5 L710.6 216.2 L709.9 216.1 L709.3 216.1 L708.6 216 L708 216 L707.3 215.9 L706.7 215.9 L706 215.8 L705.4 215.8 L704.7 215.7 L704.1 215.7 L703.4 215.6 L702.8 215.6 L702.1 215.5 L701.5 215.5 L700.8 215.4 L700.2 215.4 L699.5 215.3 L698.9 215.3 L698.2 215.2 L697.6 215.2 L696.9 215.1 L696.3 215.1 L695.7 215 L695 215 L694.4 214.9 L693.7 214.9 L693.1 214.8 L692.5 214.7 L691.8 214.7 L691.2 214.6 L690.5 214.6 L689.9 214.5 L689.3 214.5 L688.6 214.4 L688 214.3 L687.4 214.3 L686.7 214.2 L686.1 214.2 L685.5 214.1 L684.8 214 L684.2 214 L683.6 213.9 L682.9 213.9 L681.6 214.5 L680.9 214.4 L680.3 214.3 L679.7 214.3 L679 214.2 L678.4 214.2 L677.8 214.1 L677.1 214 L676.5 214 L675.9 213.9 L675.3 213.8 L674.6 213.8 L674 213.7 L673.4 213.6 L672.8 213.6 L672.1 213.5 L671.5 213.4 L670.9 213.4 L670.3 213.3 L669.6 213.2 L669 213.2 L668.4 213.1 L667.8 213 L667.2 213 L666.5 212.9 L665.9 212.8 L665.3 212.7 L664.7 212.7 L664.1 212.6 L663.5 212.5 L662.8 212.5 L662.2 212.4 L661.6 212.3 L661 212.2 L660.4 212.2 L659.8 212.1 L659.2 212 L658.6 211.9 L658 211.9 L657.4 211.8 L656.7 211.7 L656.1 211.6 L655.5 211.6 L654.9 211.5 L654.3 211.4 L652.7 212 L652.1 211.9 L651.5 211.8 L650.9 211.8 L650.3 211.7 L649.7 211.6 L649.1 211.5 L648.5 211.4 L647.9 211.4 L647.3 211.3 L646.7 211.2 L646.1 211.1 L645.5 211 L644.9 210.9 L644.3 210.9 L643.7 210.8 L643.1 210.7 L642.5 210.6 L641.9 210.5 L641.4 210.4 L640.8 210.4 L640.2 210.3 L639.6 210.2 L639 210.1 L638.4 210 L637.8 209.9 L637.2 209.9 L636.7 209.8 L636.1 209.7 L635.5 209.6 L634.9 209.5 L634.3 209.4 L633.7 209.3 L633.2 209.2 L632.6 209.2 L632 209.1 L631.4 209 L630.9 208.9 L630.3 208.8 L629.7 208.7 L629.1 208.6 L628.6 208.5 L628 208.4 L627.4 208.3 L626.8 208.2 L625.1 208.8 L624.5 208.7 L623.9 208.6 L623.3 208.5 L622.8 208.4 L622.2 208.3 L621.6 208.2 L621.1 208.1 L620.5 208 L619.9 207.9 L619.4 207.8 L618.8 207.7 L618.2 207.6 L617.7 207.5 L617.1 207.4 L616.6 207.3 L616 207.2 L615.4 207.2 L614.9 207.1 L614.3 207 L613.8 206.9 L613.2 206.8 L612.7 206.7 L612.1 206.6 L611.6 206.5 L611 206.4 L610.5 206.3 L609.9 206.2 L609.4 206.1 L608.8 206 L608.3 205.9 L607.7 205.7 L607.2 205.6 L606.7 205.5 L606.1 205.4 L605.6 205.3 L605 205.2 L604.5 205.1 L604 205 L603.4 204.9 L602.9 204.8 L602.4 204.7 L601.8 204.6 L601.3 204.5 L600.8 204.4 L598.8 204.9 L598.2 204.8 L597.7 204.7 L597.2 204.6 L596.7 204.4 L596.1 204.3 L595.6 204.2 L595.1 204.1 L594.5 204 L594 203.9 L593.5 203.8 L593 203.7 L592.5 203.6 L591.9 203.5 L591.4 203.3 L590.9 203.2 L590.4 203.1 L589.9 203 L589.3 202.9 L588.8 202.8 L588.3 202.7 L587.8 202.6 L587.3 202.4 L586.8 202.3 L586.3 202.2 L585.8 202.1 L585.3 202 L584.8 201.9 L584.2 201.8 L583.7 201.7 L583.2 201.5 L582.7 201.4 L582.2 201.3 L581.7 201.2 L581.2 201.1 L580.8 201 L580.3 200.8 L579.8 200.7 L579.3 200.6 L578.8 200.5 L578.3 200.4 L577.8 200.3 L577.3 200.1 L576.8 200 L576.3 199.9 L574.2 200.3 L573.7 200.2 L573.2 200.1 L572.7 200 L572.2 199.8 L571.8 199.7 L571.3 199.6 L570.8 199.5 L570.3 199.4 L569.8 199.2 L569.3 199.1 L568.9 199 L568.4 198.9 L567.9 198.7 L567.4 198.6 L567 198.5 L566.5 198.4 L566 198.2 L565.6 198.1 L565.1 198 L564.6 197.9 L564.2 197.7 L563.7 197.6 L563.2 197.5 L562.8 197.4 L562.3 197.2 L561.9 197.1 L561.4 197 L560.9 196.9 L560.5 196.7 L560 196.6 L559.6 196.5 L559.1 196.4 L558.7 196.2 L558.2 196.1 L557.8 196 L557.3 195.8 L556.9 195.7 L556.4 195.6 L556 195.5 L555.6 195.3 L555.1 195.2 L554.7 195.1 L554.2 194.9 L553.8 194.8 L551.5 195.2 L551.1 195 L550.6 194.9 L550.2 194.8 L549.7 194.6 L549.3 194.5 L548.9 194.4 L548.5 194.2 L548 194.1 L547.6 194 L547.2 193.8 L546.7 193.7 L546.3 193.6 L545.9 193.4 L545.5 193.3 L545 193.2 L544.6 193 L544.2 192.9 L543.8 192.8 L543.4 192.6 L543 192.5 L542.5 192.3 L542.1 192.2 L541.7 192.1 L541.3 191.9 L540.9 191.8 L540.5 191.7 L540.1 191.5 L539.7 191.4 L539.3 191.3 L538.9 191.1 L538.5 191 L538.1 190.8 L537.7 190.7 L537.3 190.6 L536.9 190.4 L536.5 190.3 L536.1 190.1 L535.7 190 L535.3 189.9 L534.9 189.7 L534.5 189.6 L534.1 189.4 L533.8 189.3 L533.4 189.2 L531 189.5 L530.6 189.3 L530.2 189.2 L529.8 189 L529.4 188.9 L529 188.8 L528.7 188.6 L528.3 188.5 L527.9 188.3 L527.5 188.2 L527.2 188 L526.8 187.9 L526.4 187.7 L526 187.6 L525.7 187.5 L525.3 187.3 L524.9 187.2 L524.6 187 L524.2 186.9 L523.9 186.7 L523.5 186.6 L523.1 186.4 L522.8 186.3 L522.4 186.1 L522.1 186 L521.7 185.8 L521.4 185.7 L521 185.6 L520.7 185.4 L520.3 185.3 L520 185.1 L519.6 185 L519.3 184.8 L518.9 184.7 L518.6 184.5 L518.3 184.4 L517.9 184.2 L517.6 184.1 L517.2 183.9 L516.9 183.8 L516.6 183.6 L516.2 183.5 L515.9 183.3 L515.6 183.2 L515.3 183 L514.9 182.9 L512.4 183.1 L512.1 183 L511.8 182.8 L511.4 182.7 L511.1 182.5 L510.8 182.4 L510.5 182.2 L510.1 182.1 L509.8 181.9 L509.5 181.7 L509.2 181.6 L508.9 181.4 L508.6 181.3 L508.3 181.1 L508 181 L507.7 180.8 L507.3 180.7 L507 180.5 L506.7 180.4 L506.4 180.2 L506.1 180.1 L505.8 179.9 L505.5 179.7 L505.2 179.6 L504.9 179.4 L504.7 179.3 L504.4 179.1 L504.1 179 L503.8 178.8 L503.5 178.7 L503.2 178.5 L502.9 178.4 L502.6 178.2 L502.4 178 L502.1 177.9 L501.8 177.7 L501.5 177.6 L501.2 177.4 L501 177.3 L500.7 177.1 L500.4 176.9 L500.2 176.8 L499.9 176.6 L499.6 176.5 L497 176.6 L496.8 176.5 L496.5 176.3 L496.2 176.2 L496 176 L495.7 175.9 L495.4 175.7 L495.2 175.5 L494.9 175.4 L494.7 175.2 L494.4 175.1 L494.2 174.9 L493.9 174.7 L493.7 174.6 L493.4 174.4 L493.2 174.3 L492.9 174.1 L492.7 173.9 L492.4 173.8 L492.2 173.6 L491.9 173.4 L491.7 173.3 L491.5 173.1 L491.2 173 L491 172.8 L490.8 172.6 L490.5 172.5 L490.3 172.3 L490.1 172.2 L489.8 172 L489.6 171.8 L489.4 171.7 L489.2 171.5 L488.9 171.3 L488.7 171.2 L488.5 171 L488.3 170.9 L488.1 170.7 L487.9 170.5 L487.6 170.4 L487.4 170.2 L487.2 170 L487 169.9 L486.8 169.7 L486.6 169.6 L484 169.7Z" fill="#12cc00" stroke="#149a00" stroke-width=".9"/>
<path d="M484 169.7 L483.8 169.5 L483.6 169.3 L483.4 169.2 L483.2 169 L483 168.8 L482.8 168.7 L482.6 168.5 L482.4 168.3 L482.2 168.2 L482 168 L481.8 167.8 L481.6 167.7 L481.4 167.5 L481.2 167.4 L481 167.2 L480.9 167 L480.7 166.9 L480.5 166.7 L480.3 166.5 L480.1 166.4 L480 166.2 L479.8 166 L479.6 165.9 L479.4 165.7 L479.3 165.5 L479.1 165.4 L478.9 165.2 L478.8 165 L478.6 164.9 L478.4 164.7 L478.3 164.5 L478.1 164.4 L478 164.2 L477.8 164 L477.7 163.9 L477.5 163.7 L477.4 163.5 L477.2 163.4 L477.1 163.2 L476.9 163 L476.8 162.8 L476.6 162.7 L476.5 162.5 L476.3 162.3 L473.7 162.4 L473.5 162.2 L473.4 162.1 L473.3 161.9 L473.1 161.7 L473 161.5 L472.8 161.4 L472.7 161.2 L472.6 161 L472.5 160.9 L472.3 160.7 L472.2 160.5 L472.1 160.4 L472 160.2 L471.8 160 L471.7 159.9 L471.6 159.7 L471.5 159.5 L471.4 159.3 L471.3 159.2 L471.1 159 L471 158.8 L470.9 158.7 L470.8 158.5 L470.7 158.3 L470.6 158.2 L470.5 158 L470.4 157.8 L470.3 157.6 L470.2 157.5 L470.1 157.3 L470 157.1 L469.9 157 L469.8 156.8 L469.7 156.6 L469.6 156.5 L469.5 156.3 L469.5 156.1 L469.4 155.9 L469.3 155.8 L469.2 155.6 L469.1 155.4 L469 155.3 L469 155.1 L468.9 154.9 L466.2 154.9 L466.2 154.7 L466.1 154.6 L466 154.4 L465.9 154.2 L465.9 154 L465.8 153.9 L465.7 153.7 L465.7 153.5 L465.6 153.4 L465.5 153.2 L465.5 153 L465.4 152.8 L465.4 152.7 L465.3 152.5 L465.3 152.3 L465.2 152.2 L465.2 152 L465.1 151.8 L465.1 151.6 L465 151.5 L465 151.3 L464.9 151.1 L464.9 151 L464.8 150.8 L464.8 150.6 L464.8 150.4 L464.7 150.3 L464.7 150.1 L464.7 149.9 L464.6 149.7 L464.6 149.6 L464.6 149.4 L464.5 149.2 L464.5 149.1 L464.5 148.9 L464.5 148.7 L464.4 148.5 L464.4 148.4 L464.4 148.2 L464.4 148 L464.4 147.9 L464.4 147.7 L464.3 147.5 L464.3 147.3 L461.7 147.3 L461.7 147.1 L461.7 146.9 L461.7 146.7 L461.7 146.6 L461.7 146.4 L461.7 146.2 L461.7 146.1 L461.7 145.9 L461.7 145.7 L461.7 145.5 L461.7 145.4 L461.7 145.2 L461.7 145 L461.7 144.8 L461.7 144.7 L461.7 144.5 L461.8 144.3 L461.8 144.2 L461.8 144 L461.8 143.8 L461.8 143.6 L461.8 143.5 L461.9 143.3 L461.9 143.1 L461.9 143 L462 142.8 L462 142.6 L462 142.4 L462 142.3 L462.1 142.1 L462.1 141.9 L462.1 141.8 L462.2 141.6 L462.2 141.4 L462.3 141.2 L462.3 141.1 L462.4 140.9 L462.4 140.7 L462.4 140.6 L462.5 140.4 L462.5 140.2 L462.6 140 L462.6 139.9 L462.7 139.7 L460.1 139.6 L460.2 139.4 L460.2 139.2 L460.3 139 L460.4 138.9 L460.4 138.7 L460.5 138.5 L460.6 138.4 L460.6 138.2 L460.7 138 L460.8 137.8 L460.8 137.7 L460.9 137.5 L461 137.3 L461.1 137.2 L461.1 137 L461.2 136.8 L461.3 136.6 L461.4 136.5 L461.5 136.3 L461.5 136.1 L461.6 136 L461.7 135.8 L461.8 135.6 L461.9 135.4 L462 135.3 L462.1 135.1 L462.2 134.9 L462.3 134.8 L462.4 134.6 L462.5 134.4 L462.6 134.3 L462.7 134.1 L462.8 133.9 L462.9 133.8 L463 133.6 L463.1 133.4 L463.2 133.2 L463.3 133.1 L463.4 132.9 L463.5 132.7 L463.6 132.6 L463.8 132.4 L463.9 132.2 L464 132.1 L461.5 131.8 L461.6 131.7 L461.7 131.5 L461.9 131.3 L462 131.2 L462.1 131 L462.3 130.8 L462.4 130.7 L462.5 130.5 L462.6 130.3 L462.8 130.2 L462.9 130 L463.1 129.8 L463.2 129.7 L463.3 129.5 L463.5 129.3 L463.6 129.2 L463.8 129 L463.9 128.8 L464.1 128.6 L464.2 128.5 L464.4 128.3 L464.5 128.1 L464.7 128 L464.8 127.8 L465 127.6 L465.1 127.5 L465.3 127.3 L465.4 127.1 L465.6 127 L465.8 126.8 L465.9 126.6 L466.1 126.5 L466.3 126.3 L466.4 126.2 L466.6 126 L466.8 125.8 L466.9 125.7 L467.1 125.5 L467.3 125.3 L467.5 125.2 L467.6 125 L467.8 124.8 L468 124.7 L468.2 124.5 L468.4 124.3 L466 124.1 L466.2 123.9 L466.4 123.7 L466.5 123.6 L466.7 123.4 L466.9 123.2 L467.1 123.1 L467.3 122.9 L467.5 122.7 L467.7 122.6 L467.9 122.4 L468.1 122.2 L468.3 122.1 L468.5 121.9 L468.7 121.8 L468.9 121.6 L469.1 121.4 L469.3 121.3 L469.5 121.1 L469.8 120.9 L470 120.8 L470.2 120.6 L470.4 120.5 L470.6 120.3 L470.8 120.1 L471 120 L471.3 119.8 L471.5 119.6 L471.7 119.5 L471.9 119.3 L472.2 119.2 L472.4 119 L472.6 118.8 L472.8 118.7 L473.1 118.5 L473.3 118.4 L473.5 118.2 L473.8 118 L474 117.9 L474.2 117.7 L474.5 117.6 L474.7 117.4 L475 117.2 L475.2 117.1 L473 116.7 L473.2 116.6 L473.4 116.4 L473.7 116.3 L473.9 116.1 L474.2 116 L474.5 115.8 L474.7 115.6 L475 115.5 L475.2 115.3 L475.5 115.2 L475.7 115 L476 114.8 L476.3 114.7 L476.5 114.5 L476.8 114.4 L477.1 114.2 L477.3 114.1 L477.6 113.9 L477.9 113.7 L478.1 113.6 L478.4 113.4 L478.7 113.3 L479 113.1 L479.2 113 L479.5 112.8 L479.8 112.6 L480.1 112.5 L480.3 112.3 L480.6 112.2 L480.9 112 L481.2 111.9 L481.5 111.7 L481.8 111.6 L482.1 111.4 L482.3 111.3 L482.6 111.1 L482.9 111 L483.2 110.8 L483.5 110.6 L483.8 110.5 L484.1 110.3 L484.4 110.2 L484.7 110 L485 109.9 L482.9 109.5 L483.2 109.3 L483.5 109.2 L483.8 109 L484.1 108.9 L484.4 108.7 L484.8 108.6 L485.1 108.4 L485.4 108.3 L485.7 108.1 L486 108 L486.3 107.8 L486.6 107.7 L487 107.5 L487.3 107.4 L487.6 107.2 L487.9 107.1 L488.3 106.9 L488.6 106.8 L488.9 106.6 L489.2 106.5 L489.6 106.3 L489.9 106.2 L490.2 106 L490.6 105.9 L490.9 105.7 L491.2 105.6 L491.6 105.4 L491.9 105.3 L492.2 105.1 L492.6 105 L492.9 104.9 L493.3 104.7 L493.6 104.6 L494 104.4 L494.3 104.3 L494.7 104.1 L495 104 L495.4 103.8 L495.7 103.7 L496.1 103.5 L496.4 103.4 L496.8 103.3 L497.1 103.1 L497.5 103 L495.5 102.5 L495.9 102.4 L496.2 102.2 L496.6 102.1 L497 102 L497.3 101.8 L497.7 101.7 L498.1 101.5 L498.4 101.4 L498.8 101.2 L499.2 101.1 L499.6 101 L499.9 100.8 L500.3 100.7 L500.7 100.5 L501.1 100.4 L501.4 100.2 L501.8 100.1 L502.2 100 L502.6 99.8 L503 99.7 L503.3 99.5 L503.7 99.4 L504.1 99.3 L504.5 99.1 L504.9 99 L505.3 98.9 L505.7 98.7 L506.1 98.6 L506.5 98.4 L506.8 98.3 L507.2 98.2 L507.6 98 L508 97.9 L508.4 97.8 L508.8 97.6 L509.2 97.5 L509.6 97.3 L510 97.2 L510.4 97.1 L510.8 96.9 L511.2 96.8 L511.6 96.7 L512.1 96.5 L512.5 96.4 L510.7 95.9 L511.1 95.8 L511.5 95.6 L511.9 95.5 L512.4 95.4 L512.8 95.2 L513.2 95.1 L513.6 95 L514 94.8 L514.5 94.7 L514.9 94.6 L515.3 94.5 L515.7 94.3 L516.2 94.2 L516.6 94.1 L517 93.9 L517.4 93.8 L517.9 93.7 L518.3 93.5 L518.7 93.4 L519.2 93.3 L519.6 93.1 L520 93 L520.5 92.9 L520.9 92.8 L521.3 92.6 L521.8 92.5 L522.2 92.4 L522.7 92.2 L523.1 92.1 L523.5 92 L524 91.9 L524.4 91.7 L524.9 91.6 L525.3 91.5 L525.8 91.4 L526.2 91.2 L526.7 91.1 L527.1 91 L527.6 90.9 L528 90.7 L528.5 90.6 L528.9 90.5 L529.4 90.4 L529.8 90.2 L528.3 89.7 L528.7 89.6 L529.2 89.5 L529.7 89.4 L530.1 89.2 L530.6 89.1 L531.1 89 L531.5 88.9 L532 88.7 L532.5 88.6 L532.9 88.5 L533.4 88.4 L533.9 88.3 L534.3 88.1 L534.8 88 L535.3 87.9 L535.8 87.8 L536.2 87.7 L536.7 87.5 L537.2 87.4 L537.7 87.3 L538.2 87.2 L538.6 87.1 L539.1 87 L539.6 86.8 L540.1 86.7 L540.6 86.6 L541.1 86.5 L541.5 86.4 L542 86.3 L542.5 86.1 L543 86 L543.5 85.9 L544 85.8 L544.5 85.7 L545 85.6 L545.5 85.5 L546 85.3 L546.4 85.2 L546.9 85.1 L547.4 85 L547.9 84.9 L548.4 84.8 L548.9 84.7 L549.4 84.6 L548.1 84 L548.6 83.9 L549.1 83.8 L549.6 83.7 L550.1 83.5 L550.6 83.4 L551.1 83.3 L551.6 83.2 L552.1 83.1 L552.7 83 L553.2 82.9 L553.7 82.8 L554.2 82.7 L554.7 82.6 L555.2 82.5 L555.7 82.4 L556.3 82.2 L556.8 82.1 L557.3 82 L557.8 81.9 L558.3 81.8 L558.9 81.7 L559.4 81.6 L559.9 81.5 L560.4 81.4 L560.9 81.3 L561.5 81.2 L562 81.1 L562.5 81 L563 80.9 L563.6 80.8 L564.1 80.7 L564.6 80.6 L565.2 80.5 L565.7 80.4 L566.2 80.3 L566.8 80.2 L567.3 80.1 L567.8 80 L568.4 79.9 L568.9 79.8 L569.4 79.7 L570 79.6 L570.5 79.5 L571 79.4 L569.9 78.8 L570.5 78.7 L571 78.6 L571.5 78.5 L572.1 78.4 L572.6 78.3 L573.2 78.2 L573.7 78.1 L574.3 78 L574.8 77.9 L575.4 77.8 L575.9 77.7 L576.5 77.6 L577 77.5 L577.6 77.4 L578.1 77.3 L578.7 77.3 L579.2 77.2 L579.8 77.1 L580.4 77 L580.9 76.9 L581.5 76.8 L582 76.7 L582.6 76.6 L583.1 76.5 L583.7 76.4 L584.3 76.3 L584.8 76.2 L585.4 76.2 L586 76.1 L586.5 76 L587.1 75.9 L587.6 75.8 L588.2 75.7 L588.8 75.6 L589.3 75.5 L589.9 75.5 L590.5 75.4 L591 75.3 L591.6 75.2 L592.2 75.1 L592.7 75 L593.3 74.9 L593.9 74.9 L594.5 74.8 L593.6 74.2 L594.1 74.1 L594.7 74 L595.3 73.9 L595.9 73.8 L596.5 73.7 L597 73.7 L597.6 73.6 L598.2 73.5 L598.8 73.4 L599.4 73.3 L599.9 73.2 L600.5 73.2 L601.1 73.1 L601.7 73 L602.3 72.9 L602.9 72.8 L603.5 72.8 L604 72.7 L604.6 72.6 L605.2 72.5 L605.8 72.5 L606.4 72.4 L607 72.3 L607.6 72.2 L608.2 72.1 L608.8 72.1 L609.3 72 L609.9 71.9 L610.5 71.8 L611.1 71.8 L611.7 71.7 L612.3 71.6 L612.9 71.6 L613.5 71.5 L614.1 71.4 L614.7 71.3 L615.3 71.3 L615.9 71.2 L616.5 71.1 L617.1 71 L617.7 71 L618.3 70.9 L618.9 70.8 L619.5 70.8 L618.8 70.1 L619.4 70.1 L620 70 L620.6 69.9 L621.2 69.9 L621.9 69.8 L622.5 69.7 L623.1 69.6 L623.7 69.6 L624.3 69.5 L624.9 69.4 L625.5 69.4 L626.1 69.3 L626.7 69.3 L627.3 69.2 L627.9 69.1 L628.6 69.1 L629.2 69 L629.8 68.9 L630.4 68.9 L631 68.8 L631.6 68.7 L632.2 68.7 L632.9 68.6 L633.5 68.6 L634.1 68.5 L634.7 68.4 L635.3 68.4 L635.9 68.3 L636.5 68.3 L637.2 68.2 L637.8 68.1 L638.4 68.1 L639 68 L639.6 68 L640.3 67.9 L640.9 67.8 L641.5 67.8 L642.1 67.7 L642.7 67.7 L643.4 67.6 L644 67.6 L644.6 67.5 L645.2 67.5 L645.8 67.4 L645.4 66.7 L646.1 66.7 L646.7 66.6 L647.3 66.6 L648 66.5 L648.6 66.5 L649.2 66.4 L649.8 66.4 L650.5 66.3 L651.1 66.3 L651.7 66.2 L652.4 66.2 L653 66.1 L653.6 66.1 L654.3 66 L654.9 66 L655.5 65.9 L656.2 65.9 L656.8 65.8 L657.4 65.8 L658.1 65.7 L658.7 65.7 L659.3 65.6 L660 65.6 L660.6 65.5 L661.2 65.5 L661.9 65.5 L662.5 65.4 L663.1 65.4 L663.8 65.3 L664.4 65.3 L665 65.2 L665.7 65.2 L666.3 65.2 L666.9 65.1 L667.6 65.1 L668.2 65 L668.9 65 L669.5 64.9 L670.1 64.9 L670.8 64.9 L671.4 64.8 L672.1 64.8 L672.7 64.8 L673.3 64.7 L673.2 64 L673.8 64 L674.5 64 L675.1 63.9 L675.8 63.9 L676.4 63.9 L677 63.8 L677.7 63.8 L678.3 63.8 L679 63.7 L679.6 63.7 L680.3 63.6 L680.9 63.6 L681.6 63.6 L682.2 63.5 L682.9 63.5 L683.5 63.5 L684.2 63.4 L684.8 63.4 L685.4 63.4 L686.1 63.4 L686.7 63.3 L687.4 63.3 L688 63.3 L688.7 63.2 L689.3 63.2 L690 63.2 L690.6 63.1 L691.3 63.1 L691.9 63.1 L692.6 63.1 L693.2 63 L693.9 63 L694.5 63 L695.2 63 L695.8 62.9 L696.5 62.9 L697.1 62.9 L697.8 62.9 L698.4 62.8 L699.1 62.8 L699.7 62.8 L700.4 62.8 L701 62.8 L701.7 62.7 L701.8 62 L702.4 62 L703.1 62 L703.7 62 L704.4 62 L705 61.9 L705.7 61.9 L706.3 61.9 L707 61.9 L707.7 61.9 L708.3 61.8 L709 61.8 L709.6 61.8 L710.3 61.8 L710.9 61.8 L711.6 61.8 L712.3 61.7 L712.9 61.7 L713.6 61.7 L714.2 61.7 L714.9 61.7 L715.5 61.7 L716.2 61.7 L716.8 61.7 L717.5 61.6 L718.2 61.6 L718.8 61.6 L719.5 61.6 L720.1 61.6 L720.8 61.6 L721.4 61.6 L722.1 61.6 L722.7 61.6 L723.4 61.5 L724.1 61.5 L724.7 61.5 L725.4 61.5 L726 61.5 L726.7 61.5 L727.3 61.5 L728 61.5 L728.6 61.5 L729.3 61.5 L730 61.5 L730.6 61.5 L730.9 60.8 L731.6 60.8 L732.3 60.8 L732.9 60.7 L733.6 60.7 L734.2 60.7 L734.9 60.7 L735.6 60.7 L736.2 60.7 L736.9 60.7 L737.5 60.7 L738.2 60.7 L738.9 60.7 L739.5 60.7 L740.2 60.7 L740.8 60.7 L741.5 60.7 L742.1 60.7 L742.8 60.8 L743.5 60.8 L744.1 60.8 L744.8 60.8 L745.4 60.8 L746.1 60.8 L746.8 60.8 L747.4 60.8 L748.1 60.8 L748.7 60.8 L749.4 60.8 L750 60.8 L750.7 60.8 L751.3 60.8 L752 60.8 L752.7 60.9 L753.3 60.9 L754 60.9 L754.6 60.9 L755.3 60.9 L755.9 60.9 L756.6 60.9 L757.2 60.9 L757.9 61 L758.5 61 L759.2 61 L759.8 61 L760.4 60.2 L761.1 60.2 L761.8 60.2 L762.4 60.2 L763.1 60.3 L763.7 60.3 L764.4 60.3 L765 60.3 L765.7 60.3 L766.4 60.3 L767 60.4 L767.7 60.4 L768.3 60.4 L769 60.4 L769.6 60.4 L770.3 60.5 L770.9 60.5 L771.6 60.5 L772.2 60.5 L772.9 60.6 L773.5 60.6 L774.2 60.6 L774.9 60.6 L775.5 60.7 L776.2 60.7 L776.8 60.7 L777.5 60.7 L778.1 60.8 L778.8 60.8 L779.4 60.8 L780 60.8 L780.7 60.9 L781.3 60.9 L782 60.9 L782.6 61 L783.3 61 L783.9 61 L784.6 61.1 L785.2 61.1 L785.9 61.1 L786.5 61.2 L787.1 61.2 L787.8 61.2 L788.4 61.3 L789.1 61.3 L790 60.4 L790.6 60.4 L791.3 60.4 L791.9 60.5 L792.6 60.5 L793.2 60.6 L793.9 60.6 L794.5 60.6 L795.2 60.7 L795.8 60.7 L796.5 60.7 L797.1 60.8 L797.7 60.8 L798.4 60.9 L799 60.9 L799.7 60.9 L800.3 61 L800.9 61 L801.6 61.1 L802.2 61.1 L802.9 61.2 L803.5 61.2 L804.1 61.2 L804.8 61.3 L805.4 61.3 L806 61.4 L806.7 61.4 L807.3 61.5 L807.9 61.5 L808.6 61.6 L809.2 61.6 L809.8 61.7 L810.4 61.7 L811.1 61.8 L811.7 61.8 L812.3 61.9 L813 61.9 L813.6 62 L814.2 62 L814.8 62.1 L815.4 62.1 L816.1 62.2 L816.7 62.3 L817.3 62.3 L817.9 62.4 L819.3 61.3 L820 61.3 L820.6 61.4 L821.2 61.5 L821.8 61.5 L822.5 61.6 L823.1 61.6 L823.7 61.7 L824.3 61.7 L825 61.8 L825.6 61.9 L826.2 61.9 L826.8 62 L827.4 62 L828.1 62.1 L828.7 62.2 L829.3 62.2 L829.9 62.3 L830.5 62.3 L831.1 62.4 L831.7 62.5 L832.4 62.5 L833 62.6 L833.6 62.7 L834.2 62.7 L834.8 62.8 L835.4 62.9 L836 62.9 L836.6 63 L837.2 63.1 L837.8 63.2 L838.4 63.2 L839 63.3 L839.6 63.4 L840.2 63.4 L840.8 63.5 L841.4 63.6 L842 63.7 L842.6 63.7 L843.2 63.8 L843.8 63.9 L844.3 64 L844.9 64.1 L845.5 64.1 L846.1 64.2 L846.7 64.3 L848.8 63 L849.4 63.1 L850 63.2 L850.6 63.2 L851.2 63.3 L851.8 63.4 L852.3 63.5 L852.9 63.5 L853.5 63.6 L854.1 63.7 L854.7 63.8 L855.3 63.9 L855.9 63.9 L856.5 64 L857 64.1 L857.6 64.2 L858.2 64.3 L858.8 64.4 L859.4 64.4 L859.9 64.5 L860.5 64.6 L861.1 64.7 L861.6 64.8 L862.2 64.9 L862.8 65 L863.3 65.1 L863.9 65.2 L864.5 65.2 L865 65.3 L865.6 65.4 L866.2 65.5 L866.7 65.6 L867.3 65.7 L867.8 65.8 L868.4 65.9 L868.9 66 L869.5 66.1 L870 66.2 L870.6 66.3 L871.1 66.4 L871.7 66.5 L872.2 66.6 L872.7 66.7 L873.3 66.8 L876.3 65.3 L876.8 65.4 L877.4 65.5 L877.9 65.6 L878.5 65.7 L879 65.8 L879.6 65.9 L880.1 66 L880.7 66.1 L881.2 66.2 L881.8 66.3 L882.3 66.4 L882.9 66.5 L883.4 66.6 L883.9 66.7 L884.5 66.8 L885 66.9 L885.5 67 L886.1 67.1 L886.6 67.2 L887.1 67.3 L887.7 67.4 L888.2 67.5 L888.7 67.6 L889.2 67.7 L889.7 67.8 L890.3 67.9 L890.8 68.1 L891.3 68.2 L891.8 68.3 L892.3 68.4 L892.8 68.5 L893.3 68.6 L893.8 68.7 L894.3 68.8 L894.8 69 L895.3 69.1 L895.8 69.2 L896.3 69.3 L896.8 69.4 L897.3 69.5 L897.8 69.7 L898.3 69.8 L898.8 69.9 L899.2 70 L903.3 68.3 L903.8 68.4 L904.3 68.5 L904.9 68.7 L905.4 68.8 L905.9 68.9 L906.3 69 L906.8 69.1 L907.3 69.2 L907.8 69.4 L908.3 69.5 L908.8 69.6 L909.3 69.7 L909.8 69.9 L910.3 70 L910.7 70.1 L911.2 70.2 L911.7 70.3 L912.2 70.5 L912.6 70.6 L913.1 70.7 L913.6 70.8 L914 71 L914.5 71.1 L915 71.2 L915.4 71.4 L915.9 71.5 L916.3 71.6 L916.8 71.7 L917.3 71.9 L917.7 72 L918.1 72.1 L918.6 72.3 L919 72.4 L919.5 72.5 L919.9 72.6 L920.4 72.8 L920.8 72.9 L921.2 73 L921.7 73.2 L922.1 73.3 L922.5 73.4 L922.9 73.6 L923.4 73.7 L923.8 73.9 L929.1 72 L929.6 72.1 L930 72.3 L930.5 72.4 L930.9 72.5 L931.4 72.7 L931.8 72.8 L932.2 72.9 L932.7 73.1 L933.1 73.2 L933.5 73.4 L933.9 73.5 L934.4 73.6 L934.8 73.8 L935.2 73.9 L935.6 74.1 L936 74.2 L936.4 74.3 L936.9 74.5 L937.3 74.6 L937.7 74.8 L938.1 74.9 L938.5 75 L938.9 75.2 L939.3 75.3 L939.7 75.5 L940.1 75.6 L940.5 75.7 L940.9 75.9 L941.2 76 L941.6 76.2 L942 76.3 L942.4 76.5 L942.8 76.6 L943.1 76.8 L943.5 76.9 L943.9 77.1 L944.3 77.2 L944.6 77.3 L945 77.5 L945.4 77.6 L945.7 77.8 L946.1 77.9 L946.4 78.1 L946.8 78.2 L947.2 78.4 L953.8 76.5 L954.2 76.6 L954.6 76.8 L954.9 76.9 L955.3 77.1 L955.7 77.2 L956.1 77.4 L956.4 77.5 L956.8 77.7 L957.1 77.8 L957.5 78 L957.9 78.1 L958.2 78.3 L958.6 78.4 L958.9 78.6 L959.3 78.7 L959.6 78.9 L960 79 L960.3 79.2 L960.7 79.4 L961 79.5 L961.3 79.7 L961.7 79.8 L962 80 L962.3 80.1 L962.7 80.3 L963 80.4 L963.3 80.6 L963.6 80.7 L964 80.9 L964.3 81.1 L964.6 81.2 L964.9 81.4 L965.2 81.5 L965.5 81.7 L965.8 81.8 L966.1 82 L966.5 82.1 L966.8 82.3 L967.1 82.5 L967.4 82.6 L967.7 82.8 L968 82.9 L968.2 83.1 L976 81.2 L976.3 81.4 L976.6 81.6 L976.9 81.7 L977.2 81.9 L977.5 82 L977.8 82.2 L978.1 82.4 L978.4 82.5 L978.7 82.7 L979 82.9 L979.3 83 L979.6 83.2 L979.9 83.3 L980.2 83.5 L980.5 83.7 L980.8 83.8 L981.1 84 L981.3 84.1 L981.6 84.3 L981.9 84.5 L982.2 84.6 L982.4 84.8 L982.7 85 L983 85.1 L983.3 85.3 L983.5 85.4 L983.8 85.6 L984.1 85.8 L984.3 85.9 L984.6 86.1 L984.8 86.3 L985.1 86.4 L985.4 86.6 L985.6 86.8 L985.9 86.9 L986.1 87.1 L986.4 87.2 L986.6 87.4 L986.8 87.6 L987.1 87.7 L987.3 87.9 L987.6 88.1 L987.8 88.2 L988.1 88.4 L996.6 86.7 L996.8 86.9 L997.1 87 L997.3 87.2 L997.6 87.4 L997.8 87.6 L998.1 87.7 L998.3 87.9 L998.5 88.1 L998.8 88.2 L999 88.4 L999.2 88.6 L999.5 88.7 L999.7 88.9 L999.9 89.1 L1000.2 89.2 L1000.4 89.4 L1000.6 89.6 L1000.8 89.7 L1001.1 89.9 L1001.3 90.1 L1001.5 90.2 L1001.7 90.4 L1001.9 90.6 L1002.1 90.7 L1002.4 90.9 L1002.6 91.1 L1002.8 91.2 L1003 91.4 L1003.2 91.6 L1003.4 91.7 L1003.6 91.9 L1003.8 92.1 L1004 92.2 L1004.2 92.4 L1004.4 92.6 L1004.6 92.7 L1004.8 92.9 L1005 93.1 L1005.2 93.2 L1005.4 93.4 L1005.6 93.6 L1005.8 93.7 L1006 93.9 L1006.1 94.1 L1015 92.7 L1015.2 92.8 L1015.4 93 L1015.6 93.2 L1015.8 93.4 L1016 93.5 L1016.2 93.7 L1016.3 93.9 L1016.5 94.1 L1016.7 94.2 L1016.9 94.4 L1017.1 94.6 L1017.2 94.7 L1017.4 94.9 L1017.6 95.1 L1017.8 95.3 L1017.9 95.4 L1018.1 95.6 L1018.3 95.8 L1018.5 95.9 L1018.6 96.1 L1018.8 96.3 L1019 96.4 L1019.1 96.6 L1019.3 96.8 L1019.5 97 L1019.6 97.1 L1019.8 97.3 L1019.9 97.5 L1020.1 97.6 L1020.3 97.8 L1020.4 98 L1020.6 98.1 L1020.7 98.3 L1020.9 98.5 L1021 98.7 L1021.2 98.8 L1021.3 99 L1021.5 99.2 L1021.6 99.3 L1021.8 99.5 L1021.9 99.7 L1022.1 99.8 L1022.2 100 L1022.4 100.2 L1022.5 100.3 L1031.3 99.3 L1031.4 99.4 L1031.6 99.6 L1031.7 99.8 L1031.8 100 L1032 100.1 L1032.1 100.3 L1032.2 100.5 L1032.4 100.6 L1032.5 100.8 L1032.6 101 L1032.8 101.2 L1032.9 101.3 L1033 101.5 L1033.2 101.7 L1033.3 101.9 L1033.4 102 L1033.5 102.2 L1033.7 102.4 L1033.8 102.5 L1033.9 102.7 L1034 102.9 L1034.1 103.1 L1034.3 103.2 L1034.4 103.4 L1034.5 103.6 L1034.6 103.7 L1034.8 103.9 L1034.9 104.1 L1035 104.3 L1035.1 104.4 L1035.2 104.6 L1035.3 104.8 L1035.5 104.9 L1035.6 105.1 L1035.7 105.3 L1035.8 105.4 L1035.9 105.6 L1036 105.8 L1036.1 106 L1036.3 106.1 L1036.4 106.3 L1036.5 106.5 L1036.6 106.6 L1044.8 105.9 L1044.9 106.1 L1045 106.2 L1045.1 106.4 L1045.1 106.6 L1045.2 106.7 L1045.3 106.9 L1045.4 107.1 L1045.5 107.3 L1045.6 107.4 L1045.7 107.6 L1045.8 107.8 L1045.9 108 L1046 108.1 L1046 108.3 L1046.1 108.5 L1046.2 108.7 L1046.3 108.8 L1046.4 109 L1046.5 109.2 L1046.6 109.3 L1046.6 109.5 L1046.7 109.7 L1046.8 109.9 L1046.9 110 L1047 110.2 L1047.1 110.4 L1047.1 110.5 L1047.2 110.7 L1047.3 110.9 L1047.4 111.1 L1047.5 111.2 L1047.5 111.4 L1047.6 111.6 L1047.7 111.7 L1047.8 111.9 L1047.9 112.1 L1047.9 112.3 L1048 112.4 L1048.1 112.6 L1048.2 112.8 L1048.2 112.9 L1048.3 113.1 L1048.4 113.3 L1048.5 113.4 L1055.8 113 L1055.8 113.2 L1055.9 113.3 L1055.9 113.5 L1056 113.7 L1056 113.9 L1056.1 114 L1056.1 114.2 L1056.2 114.4 L1056.2 114.6 L1056.3 114.7 L1056.3 114.9 L1056.4 115.1 L1056.4 115.2 L1056.5 115.4 L1056.5 115.6 L1056.6 115.8 L1056.6 115.9 L1056.7 116.1 L1056.7 116.3 L1056.8 116.5 L1056.8 116.6 L1056.9 116.8 L1056.9 117 L1056.9 117.1 L1057 117.3 L1057 117.5 L1057.1 117.7 L1057.1 117.8 L1057.2 118 L1057.2 118.2 L1057.2 118.3 L1057.3 118.5 L1057.3 118.7 L1057.4 118.9 L1057.4 119 L1057.5 119.2 L1057.5 119.4 L1057.5 119.5 L1057.6 119.7 L1057.6 119.9 L1057.7 120 L1057.7 120.2 L1057.7 120.4 L1057.8 120.5 L1064 120.4 L1064 120.5 L1064 120.7 L1064 120.9 L1064.1 121.1 L1064.1 121.2 L1064.1 121.4 L1064.1 121.6 L1064.1 121.7 L1064.1 121.9 L1064.1 122.1 L1064.1 122.3 L1064.1 122.4 L1064.2 122.6 L1064.2 122.8 L1064.2 123 L1064.2 123.1 L1064.2 123.3 L1064.2 123.5 L1064.2 123.6 L1064.2 123.8 L1064.2 124 L1064.2 124.2 L1064.2 124.3 L1064.2 124.5 L1064.2 124.7 L1064.2 124.8 L1064.2 125 L1064.3 125.2 L1064.3 125.4 L1064.3 125.5 L1064.3 125.7 L1064.3 125.9 L1064.3 126 L1064.3 126.2 L1064.3 126.4 L1064.3 126.6 L1064.3 126.7 L1064.3 126.9 L1064.3 127.1 L1064.3 127.2 L1064.3 127.4 L1064.2 127.6 L1064.2 127.7 L1064.2 127.9 L1064.2 128.1 L1069.4 128.1 L1069.3 128.3 L1069.3 128.4 L1069.3 128.6 L1069.3 128.8 L1069.2 129 L1069.2 129.1 L1069.2 129.3 L1069.1 129.5 L1069.1 129.6 L1069.1 129.8 L1069 130 L1069 130.2 L1069 130.3 L1068.9 130.5 L1068.9 130.7 L1068.9 130.8 L1068.8 131 L1068.8 131.2 L1068.8 131.4 L1068.7 131.5 L1068.7 131.7 L1068.6 131.9 L1068.6 132 L1068.6 132.2 L1068.5 132.4 L1068.5 132.6 L1068.4 132.7 L1068.4 132.9 L1068.4 133.1 L1068.3 133.2 L1068.3 133.4 L1068.2 133.6 L1068.2 133.8 L1068.1 133.9 L1068.1 134.1 L1068 134.3 L1068 134.4 L1067.9 134.6 L1067.9 134.8 L1067.8 134.9 L1067.8 135.1 L1067.7 135.3 L1067.7 135.5 L1071.9 135.6 L1071.8 135.8 L1071.7 135.9 L1071.7 136.1 L1071.6 136.3 L1071.5 136.5 L1071.5 136.6 L1071.4 136.8 L1071.3 137 L1071.2 137.1 L1071.1 137.3 L1071.1 137.5 L1071 137.6 L1070.9 137.8 L1070.8 138 L1070.7 138.2 L1070.7 138.3 L1070.6 138.5 L1070.5 138.7 L1070.4 138.8 L1070.3 139 L1070.2 139.2 L1070.1 139.4 L1070.1 139.5 L1070 139.7 L1069.9 139.9 L1069.8 140 L1069.7 140.2 L1069.6 140.4 L1069.5 140.5 L1069.4 140.7 L1069.3 140.9 L1069.2 141 L1069.1 141.2 L1069 141.4 L1068.9 141.6 L1068.8 141.7 L1068.7 141.9 L1068.6 142.1 L1068.5 142.2 L1068.4 142.4 L1068.3 142.6 L1068.2 142.7 L1068.1 142.9 L1068 143.1 L1071.4 143.3 L1071.3 143.5 L1071.2 143.6 L1071.1 143.8 L1071 144 L1070.8 144.2 L1070.7 144.3 L1070.6 144.5 L1070.4 144.7 L1070.3 144.8 L1070.2 145 L1070.1 145.2 L1069.9 145.3 L1069.8 145.5 L1069.7 145.7 L1069.5 145.8 L1069.4 146 L1069.2 146.2 L1069.1 146.4 L1069 146.5 L1068.8 146.7 L1068.7 146.9 L1068.5 147 L1068.4 147.2 L1068.3 147.4 L1068.1 147.5 L1068 147.7 L1067.8 147.9 L1067.7 148 L1067.5 148.2 L1067.4 148.4 L1067.2 148.5 L1067.1 148.7 L1066.9 148.9 L1066.8 149 L1066.6 149.2 L1066.4 149.4 L1066.3 149.5 L1066.1 149.7 L1066 149.9 L1065.8 150 L1065.6 150.2 L1065.5 150.4 L1065.3 150.5 L1065.2 150.7 L1068.1 151 L1067.9 151.2 L1067.7 151.3 L1067.5 151.5 L1067.3 151.7 L1067.2 151.8 L1067 152 L1066.8 152.2 L1066.6 152.3 L1066.4 152.5 L1066.2 152.7 L1066 152.8 L1065.9 153 L1065.7 153.2 L1065.5 153.3 L1065.3 153.5 L1065.1 153.6 L1064.9 153.8 L1064.7 154 L1064.5 154.1 L1064.3 154.3 L1064.1 154.5 L1063.9 154.6 L1063.7 154.8 L1063.5 155 L1063.3 155.1 L1063.1 155.3 L1062.9 155.5 L1062.7 155.6 L1062.5 155.8 L1062.3 155.9 L1062.1 156.1 L1061.8 156.3 L1061.6 156.4 L1061.4 156.6 L1061.2 156.8 L1061 156.9 L1060.8 157.1 L1060.6 157.2 L1060.3 157.4 L1060.1 157.6 L1059.9 157.7 L1059.7 157.9 L1059.4 158.1 L1059.2 158.2 L1059 158.4 L1061.5 158.7 L1061.3 158.9 L1061 159.1 L1060.8 159.2 L1060.5 159.4 L1060.3 159.5 L1060.1 159.7 L1059.8 159.9 L1059.6 160 L1059.3 160.2 L1059.1 160.3 L1058.8 160.5 L1058.6 160.7 L1058.3 160.8 L1058.1 161 L1057.8 161.1 L1057.6 161.3 L1057.3 161.5 L1057.1 161.6 L1056.8 161.8 L1056.6 161.9 L1056.3 162.1 L1056 162.3 L1055.8 162.4 L1055.5 162.6 L1055.2 162.7 L1055 162.9 L1054.7 163.1 L1054.4 163.2 L1054.2 163.4 L1053.9 163.5 L1053.6 163.7 L1053.4 163.8 L1053.1 164 L1052.8 164.2 L1052.5 164.3 L1052.3 164.5 L1052 164.6 L1051.7 164.8 L1051.4 164.9 L1051.1 165.1 L1050.8 165.3 L1050.6 165.4 L1050.3 165.6 L1052.5 166 L1052.2 166.1 L1051.9 166.3 L1051.6 166.4 L1051.3 166.6 L1051 166.7 L1050.7 166.9 L1050.4 167.1 L1050.1 167.2 L1049.8 167.4 L1049.5 167.5 L1049.2 167.7 L1048.9 167.8 L1048.6 168 L1048.3 168.1 L1048 168.3 L1047.7 168.4 L1047.4 168.6 L1047.1 168.7 L1046.7 168.9 L1046.4 169.1 L1046.1 169.2 L1045.8 169.4 L1045.5 169.5 L1045.2 169.7 L1044.8 169.8 L1044.5 170 L1044.2 170.1 L1043.9 170.3 L1043.5 170.4 L1043.2 170.6 L1042.9 170.7 L1042.5 170.9 L1042.2 171 L1041.9 171.2 L1041.5 171.3 L1041.2 171.5 L1040.9 171.6 L1040.5 171.8 L1040.2 171.9 L1039.8 172.1 L1039.5 172.2 L1039.2 172.4 L1038.8 172.5 L1038.5 172.7 L1038.1 172.8 L1040.2 173.3 L1039.8 173.4 L1039.5 173.6 L1039.1 173.7 L1038.7 173.8 L1038.4 174 L1038 174.1 L1037.7 174.3 L1037.3 174.4 L1036.9 174.6 L1036.6 174.7 L1036.2 174.9 L1035.9 175 L1035.5 175.2 L1035.1 175.3 L1034.8 175.5 L1034.4 175.6 L1034 175.7 L1033.6 175.9 L1033.3 176 L1032.9 176.2 L1032.5 176.3 L1032.1 176.5 L1031.8 176.6 L1031.4 176.8 L1031 176.9 L1030.6 177 L1030.2 177.2 L1029.9 177.3 L1029.5 177.5 L1029.1 177.6 L1028.7 177.7 L1028.3 177.9 L1027.9 178 L1027.5 178.2 L1027.1 178.3 L1026.7 178.4 L1026.3 178.6 L1026 178.7 L1025.6 178.9 L1025.2 179 L1024.8 179.1 L1024.4 179.3 L1024 179.4 L1025.8 179.9 L1025.4 180.1 L1025 180.2 L1024.6 180.3 L1024.2 180.5 L1023.8 180.6 L1023.3 180.8 L1022.9 180.9 L1022.5 181 L1022.1 181.2 L1021.7 181.3 L1021.3 181.4 L1020.9 181.6 L1020.4 181.7 L1020 181.8 L1019.6 182 L1019.2 182.1 L1018.7 182.3 L1018.3 182.4 L1017.9 182.5 L1017.5 182.7 L1017 182.8 L1016.6 182.9 L1016.2 183.1 L1015.7 183.2 L1015.3 183.3 L1014.9 183.5 L1014.4 183.6 L1014 183.7 L1013.6 183.9 L1013.1 184 L1012.7 184.1 L1012.3 184.2 L1011.8 184.4 L1011.4 184.5 L1010.9 184.6 L1010.5 184.8 L1010 184.9 L1009.6 185 L1009.1 185.2 L1008.7 185.3 L1008.2 185.4 L1007.8 185.5 L1007.3 185.7 L1006.9 185.8 L1006.4 185.9 L1008.1 186.5 L1007.6 186.6 L1007.2 186.7 L1006.7 186.9 L1006.2 187 L1005.8 187.1 L1005.3 187.2 L1004.8 187.4 L1004.4 187.5 L1003.9 187.6 L1003.4 187.7 L1003 187.9 L1002.5 188 L1002 188.1 L1001.6 188.2 L1001.1 188.4 L1000.6 188.5 L1000.1 188.6 L999.7 188.7 L999.2 188.9 L998.7 189 L998.2 189.1 L997.7 189.2 L997.3 189.3 L996.8 189.5 L996.3 189.6 L995.8 189.7 L995.3 189.8 L994.8 190 L994.3 190.1 L993.9 190.2 L993.4 190.3 L992.9 190.4 L992.4 190.6 L991.9 190.7 L991.4 190.8 L990.9 190.9 L990.4 191 L989.9 191.1 L989.4 191.3 L988.9 191.4 L988.4 191.5 L987.9 191.6 L987.4 191.7 L988.9 192.3 L988.4 192.4 L987.8 192.5 L987.3 192.7 L986.8 192.8 L986.3 192.9 L985.8 193 L985.3 193.1 L984.8 193.2 L984.3 193.3 L983.8 193.5 L983.2 193.6 L982.7 193.7 L982.2 193.8 L981.7 193.9 L981.2 194 L980.7 194.1 L980.1 194.2 L979.6 194.4 L979.1 194.5 L978.6 194.6 L978 194.7 L977.5 194.8 L977 194.9 L976.5 195 L975.9 195.1 L975.4 195.2 L974.9 195.3 L974.4 195.4 L973.8 195.6 L973.3 195.7 L972.8 195.8 L972.2 195.9 L971.7 196 L971.2 196.1 L970.6 196.2 L970.1 196.3 L969.6 196.4 L969 196.5 L968.5 196.6 L967.9 196.7 L967.4 196.8 L966.9 196.9 L966.3 197 L965.8 197.1 L967 197.8 L966.4 197.9 L965.9 198 L965.3 198.1 L964.8 198.2 L964.2 198.3 L963.7 198.4 L963.1 198.5 L962.6 198.6 L962 198.7 L961.5 198.8 L960.9 198.9 L960.3 199 L959.8 199.1 L959.2 199.2 L958.7 199.3 L958.1 199.4 L957.5 199.5 L957 199.6 L956.4 199.7 L955.9 199.7 L955.3 199.8 L954.7 199.9 L954.2 200 L953.6 200.1 L953 200.2 L952.5 200.3 L951.9 200.4 L951.3 200.5 L950.8 200.6 L950.2 200.7 L949.6 200.8 L949 200.9 L948.5 201 L947.9 201.1 L947.3 201.2 L946.7 201.3 L946.2 201.3 L945.6 201.4 L945 201.5 L944.4 201.6 L943.9 201.7 L943.3 201.8 L942.7 201.9 L942.1 202 L941.5 202.1 L942.5 202.7 L941.9 202.8 L941.3 202.9 L940.7 203 L940.1 203.1 L939.6 203.1 L939 203.2 L938.4 203.3 L937.8 203.4 L937.2 203.5 L936.6 203.6 L936 203.7 L935.4 203.7 L934.8 203.8 L934.2 203.9 L933.6 204 L933 204.1 L932.4 204.2 L931.8 204.2 L931.2 204.3 L930.6 204.4 L930 204.5 L929.4 204.6 L928.8 204.6 L928.2 204.7 L927.6 204.8 L927 204.9 L926.4 205 L925.8 205 L925.2 205.1 L924.6 205.2 L924 205.3 L923.4 205.4 L922.8 205.4 L922.2 205.5 L921.6 205.6 L921 205.7 L920.4 205.7 L919.8 205.8 L919.2 205.9 L918.6 206 L917.9 206 L917.3 206.1 L916.7 206.2 L917.4 206.9 L916.8 206.9 L916.2 207 L915.6 207.1 L914.9 207.2 L914.3 207.2 L913.7 207.3 L913.1 207.4 L912.5 207.4 L911.8 207.5 L911.2 207.6 L910.6 207.6 L910 207.7 L909.4 207.8 L908.7 207.9 L908.1 207.9 L907.5 208 L906.9 208.1 L906.2 208.1 L905.6 208.2 L905 208.3 L904.3 208.3 L903.7 208.4 L903.1 208.5 L902.5 208.5 L901.8 208.6 L901.2 208.6 L900.6 208.7 L899.9 208.8 L899.3 208.8 L898.7 208.9 L898.1 209 L897.4 209 L896.8 209.1 L896.2 209.1 L895.5 209.2 L894.9 209.3 L894.3 209.3 L893.6 209.4 L893 209.4 L892.3 209.5 L891.7 209.6 L891.1 209.6 L890.4 209.7 L889.8 209.7 L890.2 210.4 L889.6 210.5 L889 210.5 L888.3 210.6 L887.7 210.7 L887 210.7 L886.4 210.8 L885.7 210.8 L885.1 210.9 L884.4 210.9 L883.8 211 L883.2 211 L882.5 211.1 L881.9 211.1 L881.2 211.2 L880.6 211.2 L879.9 211.3 L879.3 211.4 L878.6 211.4 L878 211.5 L877.3 211.5 L876.7 211.6 L876 211.6 L875.4 211.7 L874.7 211.7 L874.1 211.7 L873.4 211.8 L872.8 211.8 L872.1 211.9 L871.5 211.9 L870.8 212 L870.2 212 L869.5 212.1 L868.8 212.1 L868.2 212.2 L867.5 212.2 L866.9 212.3 L866.2 212.3 L865.6 212.3 L864.9 212.4 L864.3 212.4 L863.6 212.5 L863 212.5 L862.3 212.6 L861.6 212.6 L861 212.6 L861.2 213.3 L860.5 213.4 L859.8 213.4 L859.2 213.5 L858.5 213.5 L857.8 213.5 L857.2 213.6 L856.5 213.6 L855.9 213.6 L855.2 213.7 L854.5 213.7 L853.9 213.8 L853.2 213.8 L852.5 213.8 L851.9 213.9 L851.2 213.9 L850.5 213.9 L849.9 214 L849.2 214 L848.5 214 L847.9 214.1 L847.2 214.1 L846.5 214.1 L845.9 214.2 L845.2 214.2 L844.5 214.2 L843.9 214.3 L843.2 214.3 L842.5 214.3 L841.9 214.3 L841.2 214.4 L840.5 214.4 L839.9 214.4 L839.2 214.5 L838.5 214.5 L837.9 214.5 L837.2 214.5 L836.5 214.6 L835.9 214.6 L835.2 214.6 L834.5 214.6 L833.9 214.7 L833.2 214.7 L832.5 214.7 L832.4 215.4 L831.8 215.4 L831.1 215.5 L830.4 215.5 L829.7 215.5 L829.1 215.5 L828.4 215.6 L827.7 215.6 L827 215.6 L826.4 215.6 L825.7 215.6 L825 215.7 L824.3 215.7 L823.7 215.7 L823 215.7 L822.3 215.7 L821.6 215.7 L821 215.8 L820.3 215.8 L819.6 215.8 L818.9 215.8 L818.3 215.8 L817.6 215.8 L816.9 215.9 L816.2 215.9 L815.6 215.9 L814.9 215.9 L814.2 215.9 L813.5 215.9 L812.9 215.9 L812.2 216 L811.5 216 L810.8 216 L810.2 216 L809.5 216 L808.8 216 L808.1 216 L807.5 216 L806.8 216 L806.1 216 L805.4 216.1 L804.8 216.1 L804.1 216.1 L803.4 216.1 L802.7 216.1 L802.4 216.8 L801.7 216.8 L801 216.8 L800.3 216.8 L799.7 216.8 L799 216.8 L798.3 216.8 L797.6 216.8 L796.9 216.8 L796.3 216.8 L795.6 216.8 L794.9 216.8 L794.2 216.8 L793.5 216.8 L792.9 216.8 L792.2 216.8 L791.5 216.8 L790.8 216.8 L790.2 216.8 L789.5 216.8 L788.8 216.8 L788.1 216.8 L787.4 216.8 L786.8 216.8 L786.1 216.8 L785.4 216.8 L784.7 216.8 L784.1 216.8 L783.4 216.8 L782.7 216.8 L782 216.8 L781.4 216.8 L780.7 216.8 L780 216.8 L779.3 216.8 L778.7 216.8 L778 216.8 L777.3 216.8 L776.6 216.7 L776 216.7 L775.3 216.7 L774.6 216.7 L773.9 216.7 L773.3 216.7 L772.6 216.7 L772 217.4 L771.3 217.4 L770.6 217.3 L769.9 217.3 L769.2 217.3 L768.6 217.3 L767.9 217.3 L767.2 217.3 L766.5 217.3 L765.9 217.3 L765.2 217.2 L764.5 217.2 L763.8 217.2 L763.2 217.2 L762.5 217.2 L761.8 217.2 L761.1 217.1 L760.5 217.1 L759.8 217.1 L759.1 217.1 L758.4 217.1 L757.8 217.1 L757.1 217 L756.4 217 L755.7 217 L755.1 217 L754.4 217 L753.7 216.9 L753.1 216.9 L752.4 216.9 L751.7 216.9 L751 216.8 L750.4 216.8 L749.7 216.8 L749 216.8 L748.4 216.7 L747.7 216.7 L747 216.7 L746.4 216.7 L745.7 216.6 L745 216.6 L744.4 216.6 L743.7 216.6 L743 216.5 L742.4 216.5 L741.5 217.2 L740.8 217.1 L740.1 217.1 L739.5 217.1 L738.8 217.1 L738.1 217 L737.5 217 L736.8 217 L736.1 216.9 L735.5 216.9 L734.8 216.9 L734.1 216.8 L733.5 216.8 L732.8 216.8 L732.1 216.7 L731.5 216.7 L730.8 216.7 L730.1 216.6 L729.5 216.6 L728.8 216.6 L728.1 216.5 L727.5 216.5 L726.8 216.5 L726.2 216.4 L725.5 216.4 L724.8 216.4 L724.2 216.3 L723.5 216.3 L722.9 216.2 L722.2 216.2 L721.5 216.2 L720.9 216.1 L720.2 216.1 L719.6 216 L718.9 216 L718.3 216 L717.6 215.9 L716.9 215.9 L716.3 215.8 L715.6 215.8 L715 215.7 L714.3 215.7 L713.7 215.7 L713 215.6 L712.4 215.6 L711.7 215.5 L710.6 216.2 L709.9 216.1 L709.3 216.1 L708.6 216 L708 216 L707.3 215.9 L706.7 215.9 L706 215.8 L705.4 215.8 L704.7 215.7 L704.1 215.7 L703.4 215.6 L702.8 215.6 L702.1 215.5 L701.5 215.5 L700.8 215.4 L700.2 215.4 L699.5 215.3 L698.9 215.3 L698.2 215.2 L697.6 215.2 L696.9 215.1 L696.3 215.1 L695.7 215 L695 215 L694.4 214.9 L693.7 214.9 L693.1 214.8 L692.5 214.7 L691.8 214.7 L691.2 214.6 L690.5 214.6 L689.9 214.5 L689.3 214.5 L688.6 214.4 L688 214.3 L687.4 214.3 L686.7 214.2 L686.1 214.2 L685.5 214.1 L684.8 214 L684.2 214 L683.6 213.9 L682.9 213.9 L681.6 214.5 L680.9 214.4 L680.3 214.3 L679.7 214.3 L679 214.2 L678.4 214.2 L677.8 214.1 L677.1 214 L676.5 214 L675.9 213.9 L675.3 213.8 L674.6 213.8 L674 213.7 L673.4 213.6 L672.8 213.6 L672.1 213.5 L671.5 213.4 L670.9 213.4 L670.3 213.3 L669.6 213.2 L669 213.2 L668.4 213.1 L667.8 213 L667.2 213 L666.5 212.9 L665.9 212.8 L665.3 212.7 L664.7 212.7 L664.1 212.6 L663.5 212.5 L662.8 212.5 L662.2 212.4 L661.6 212.3 L661 212.2 L660.4 212.2 L659.8 212.1 L659.2 212 L658.6 211.9 L658 211.9 L657.4 211.8 L656.7 211.7 L656.1 211.6 L655.5 211.6 L654.9 211.5 L654.3 211.4 L652.7 212 L652.1 211.9 L651.5 211.8 L650.9 211.8 L650.3 211.7 L649.7 211.6 L649.1 211.5 L648.5 211.4 L647.9 211.4 L647.3 211.3 L646.7 211.2 L646.1 211.1 L645.5 211 L644.9 210.9 L644.3 210.9 L643.7 210.8 L643.1 210.7 L642.5 210.6 L641.9 210.5 L641.4 210.4 L640.8 210.4 L640.2 210.3 L639.6 210.2 L639 210.1 L638.4 210 L637.8 209.9 L637.2 209.9 L636.7 209.8 L636.1 209.7 L635.5 209.6 L634.9 209.5 L634.3 209.4 L633.7 209.3 L633.2 209.2 L632.6 209.2 L632 209.1 L631.4 209 L630.9 208.9 L630.3 208.8 L629.7 208.7 L629.1 208.6 L628.6 208.5 L628 208.4 L627.4 208.3 L626.8 208.2 L625.1 208.8 L624.5 208.7 L623.9 208.6 L623.3 208.5 L622.8 208.4 L622.2 208.3 L621.6 208.2 L621.1 208.1 L620.5 208 L619.9 207.9 L619.4 207.8 L618.8 207.7 L618.2 207.6 L617.7 207.5 L617.1 207.4 L616.6 207.3 L616 207.2 L615.4 207.2 L614.9 207.1 L614.3 207 L613.8 206.9 L613.2 206.8 L612.7 206.7 L612.1 206.6 L611.6 206.5 L611 206.4 L610.5 206.3 L609.9 206.2 L609.4 206.1 L608.8 206 L608.3 205.9 L607.7 205.7 L607.2 205.6 L606.7 205.5 L606.1 205.4 L605.6 205.3 L605 205.2 L604.5 205.1 L604 205 L603.4 204.9 L602.9 204.8 L602.4 204.7 L601.8 204.6 L601.3 204.5 L600.8 204.4 L598.8 204.9 L598.2 204.8 L597.7 204.7 L597.2 204.6 L596.7 204.4 L596.1 204.3 L595.6 204.2 L595.1 204.1 L594.5 204 L594 203.9 L593.5 203.8 L593 203.7 L592.5 203.6 L591.9 203.5 L591.4 203.3 L590.9 203.2 L590.4 203.1 L589.9 203 L589.3 202.9 L588.8 202.8 L588.3 202.7 L587.8 202.6 L587.3 202.4 L586.8 202.3 L586.3 202.2 L585.8 202.1 L585.3 202 L584.8 201.9 L584.2 201.8 L583.7 201.7 L583.2 201.5 L582.7 201.4 L582.2 201.3 L581.7 201.2 L581.2 201.1 L580.8 201 L580.3 200.8 L579.8 200.7 L579.3 200.6 L578.8 200.5 L578.3 200.4 L577.8 200.3 L577.3 200.1 L576.8 200 L576.3 199.9 L574.2 200.3 L573.7 200.2 L573.2 200.1 L572.7 200 L572.2 199.8 L571.8 199.7 L571.3 199.6 L570.8 199.5 L570.3 199.4 L569.8 199.2 L569.3 199.1 L568.9 199 L568.4 198.9 L567.9 198.7 L567.4 198.6 L567 198.5 L566.5 198.4 L566 198.2 L565.6 198.1 L565.1 198 L564.6 197.9 L564.2 197.7 L563.7 197.6 L563.2 197.5 L562.8 197.4 L562.3 197.2 L561.9 197.1 L561.4 197 L560.9 196.9 L560.5 196.7 L560 196.6 L559.6 196.5 L559.1 196.4 L558.7 196.2 L558.2 196.1 L557.8 196 L557.3 195.8 L556.9 195.7 L556.4 195.6 L556 195.5 L555.6 195.3 L555.1 195.2 L554.7 195.1 L554.2 194.9 L553.8 194.8 L551.5 195.2 L551.1 195 L550.6 194.9 L550.2 194.8 L549.7 194.6 L549.3 194.5 L548.9 194.4 L548.5 194.2 L548 194.1 L547.6 194 L547.2 193.8 L546.7 193.7 L546.3 193.6 L545.9 193.4 L545.5 193.3 L545 193.2 L544.6 193 L544.2 192.9 L543.8 192.8 L543.4 192.6 L543 192.5 L542.5 192.3 L542.1 192.2 L541.7 192.1 L541.3 191.9 L540.9 191.8 L540.5 191.7 L540.1 191.5 L539.7 191.4 L539.3 191.3 L538.9 191.1 L538.5 191 L538.1 190.8 L537.7 190.7 L537.3 190.6 L536.9 190.4 L536.5 190.3 L536.1 190.1 L535.7 190 L535.3 189.9 L534.9 189.7 L534.5 189.6 L534.1 189.4 L533.8 189.3 L533.4 189.2 L531 189.5 L530.6 189.3 L530.2 189.2 L529.8 189 L529.4 188.9 L529 188.8 L528.7 188.6 L528.3 188.5 L527.9 188.3 L527.5 188.2 L527.2 188 L526.8 187.9 L526.4 187.7 L526 187.6 L525.7 187.5 L525.3 187.3 L524.9 187.2 L524.6 187 L524.2 186.9 L523.9 186.7 L523.5 186.6 L523.1 186.4 L522.8 186.3 L522.4 186.1 L522.1 186 L521.7 185.8 L521.4 185.7 L521 185.6 L520.7 185.4 L520.3 185.3 L520 185.1 L519.6 185 L519.3 184.8 L518.9 184.7 L518.6 184.5 L518.3 184.4 L517.9 184.2 L517.6 184.1 L517.2 183.9 L516.9 183.8 L516.6 183.6 L516.2 183.5 L515.9 183.3 L515.6 183.2 L515.3 183 L514.9 182.9 L512.4 183.1 L512.1 183 L511.8 182.8 L511.4 182.7 L511.1 182.5 L510.8 182.4 L510.5 182.2 L510.1 182.1 L509.8 181.9 L509.5 181.7 L509.2 181.6 L508.9 181.4 L508.6 181.3 L508.3 181.1 L508 181 L507.7 180.8 L507.3 180.7 L507 180.5 L506.7 180.4 L506.4 180.2 L506.1 180.1 L505.8 179.9 L505.5 179.7 L505.2 179.6 L504.9 179.4 L504.7 179.3 L504.4 179.1 L504.1 179 L503.8 178.8 L503.5 178.7 L503.2 178.5 L502.9 178.4 L502.6 178.2 L502.4 178 L502.1 177.9 L501.8 177.7 L501.5 177.6 L501.2 177.4 L501 177.3 L500.7 177.1 L500.4 176.9 L500.2 176.8 L499.9 176.6 L499.6 176.5 L497 176.6 L496.8 176.5 L496.5 176.3 L496.2 176.2 L496 176 L495.7 175.9 L495.4 175.7 L495.2 175.5 L494.9 175.4 L494.7 175.2 L494.4 175.1 L494.2 174.9 L493.9 174.7 L493.7 174.6 L493.4 174.4 L493.2 174.3 L492.9 174.1 L492.7 173.9 L492.4 173.8 L492.2 173.6 L491.9 173.4 L491.7 173.3 L491.5 173.1 L491.2 173 L491 172.8 L490.8 172.6 L490.5 172.5 L490.3 172.3 L490.1 172.2 L489.8 172 L489.6 171.8 L489.4 171.7 L489.2 171.5 L488.9 171.3 L488.7 171.2 L488.5 171 L488.3 170.9 L488.1 170.7 L487.9 170.5 L487.6 170.4 L487.4 170.2 L487.2 170 L487 169.9 L486.8 169.7 L486.6 169.6 L484 169.7Z" fill="url(#dots)"/>
<path d="M438.8 136 L438.9 135.3 L439.1 134.6 L439.2 133.9 L439.4 133.1 L439.7 132.4 L439.9 131.7 L440.2 131 L440.5 130.3 L440.8 129.6 L441.1 128.9 L441.5 128.2 L441.9 127.5 L442.3 126.7 L442.7 126 L443.2 125.3 L443.6 124.6 L444.1 123.9 L444.7 123.2 L445.2 122.5 L445.8 121.8 L446.4 121.1 L447 120.4 L447.6 119.7 L448.3 119 L449 118.4 L449.7 117.7 L450.4 117 L451.2 116.3 L452 115.6 L452.8 114.9 L453.6 114.2 L454.4 113.6 L455.3 112.9 L456.2 112.2 L457.1 111.5 L458 110.9 L459 110.2 L459.9 109.5 L460.9 108.9 L471.6 109.9 L470.7 110.5 L469.7 111.1 L468.8 111.8 L467.9 112.4 L467 113.1 L466.2 113.7 L465.3 114.4 L464.5 115.1 L463.7 115.7 L463 116.4 L462.2 117 L461.5 117.7 L460.8 118.4 L460.1 119 L459.5 119.7 L458.8 120.4 L458.2 121 L457.6 121.7 L457 122.4 L456.5 123.1 L456 123.7 L455.5 124.4 L455 125.1 L454.5 125.8 L454.1 126.4 L453.7 127.1 L453.3 127.8 L452.9 128.5 L452.5 129.2 L452.2 129.9 L451.9 130.5 L451.6 131.2 L451.4 131.9 L451.1 132.6 L450.9 133.3 L450.7 134 L450.6 134.7 L450.4 135.4 L450.3 136.1Z" fill="#d06400"/>
</svg>
<div class="t" style="left:253px;top:44px">Speed (mm/s)</div>
<div class="sw" style="top:60px;background:#b31e1e"></div><div class="t lv" style="top:65px">100.0</div><div class="sw" style="top:78px;background:#c2561c"></div><div class="t lv" style="top:83px">90.9</div><div class="sw" style="top:96px;background:#b8842a"></div><div class="t lv" style="top:101px">81.8</div><div class="sw" style="top:114px;background:#b5b524"></div><div class="t lv" style="top:119px">72.7</div><div class="sw" style="top:132px;background:#76ac26"></div><div class="t lv" style="top:137px">63.6</div><div class="sw" style="top:150px;background:#3fae1e"></div><div class="t lv" style="top:155px">54.5</div><div class="sw" style="top:168px;background:#1fa636"></div><div class="t lv" style="top:173px">45.4</div><div class="sw" style="top:186px;background:#20ae5e"></div><div class="t lv" style="top:191px">36.3</div><div class="sw" style="top:204px;background:#20ae98"></div><div class="t lv" style="top:209px">27.2</div><div class="sw" style="top:222px;background:#1e96c2"></div><div class="t lv" style="top:227px">18.1</div><div class="sw" style="top:240px;background:#2468b8"></div><div class="t lv" style="top:245px">9.0</div>
<div class="t" style="left:860px;top:44px">Preview Mode</div>
<div class="bx" style="left:243px;top:703px;width:1100px;height:40px;border:1px solid #dcdcdc"></div>
<div class="bx" style="left:256px;top:724px;width:122px;height:10px;border:1px solid #adadad;background:#e1e1e1"></div>
<div class="bx" style="left:400px;top:721px;width:74px;height:20px;border:1px solid #dcdcdc"></div>
<div class="t" style="left:406px;top:716px;background:#f0f0f0;padding:0 2px">Preview By</div>
<div class="bx" style="left:524px;top:723px;width:10px;height:6px;background:#0078d7"></div>
</body></html>
